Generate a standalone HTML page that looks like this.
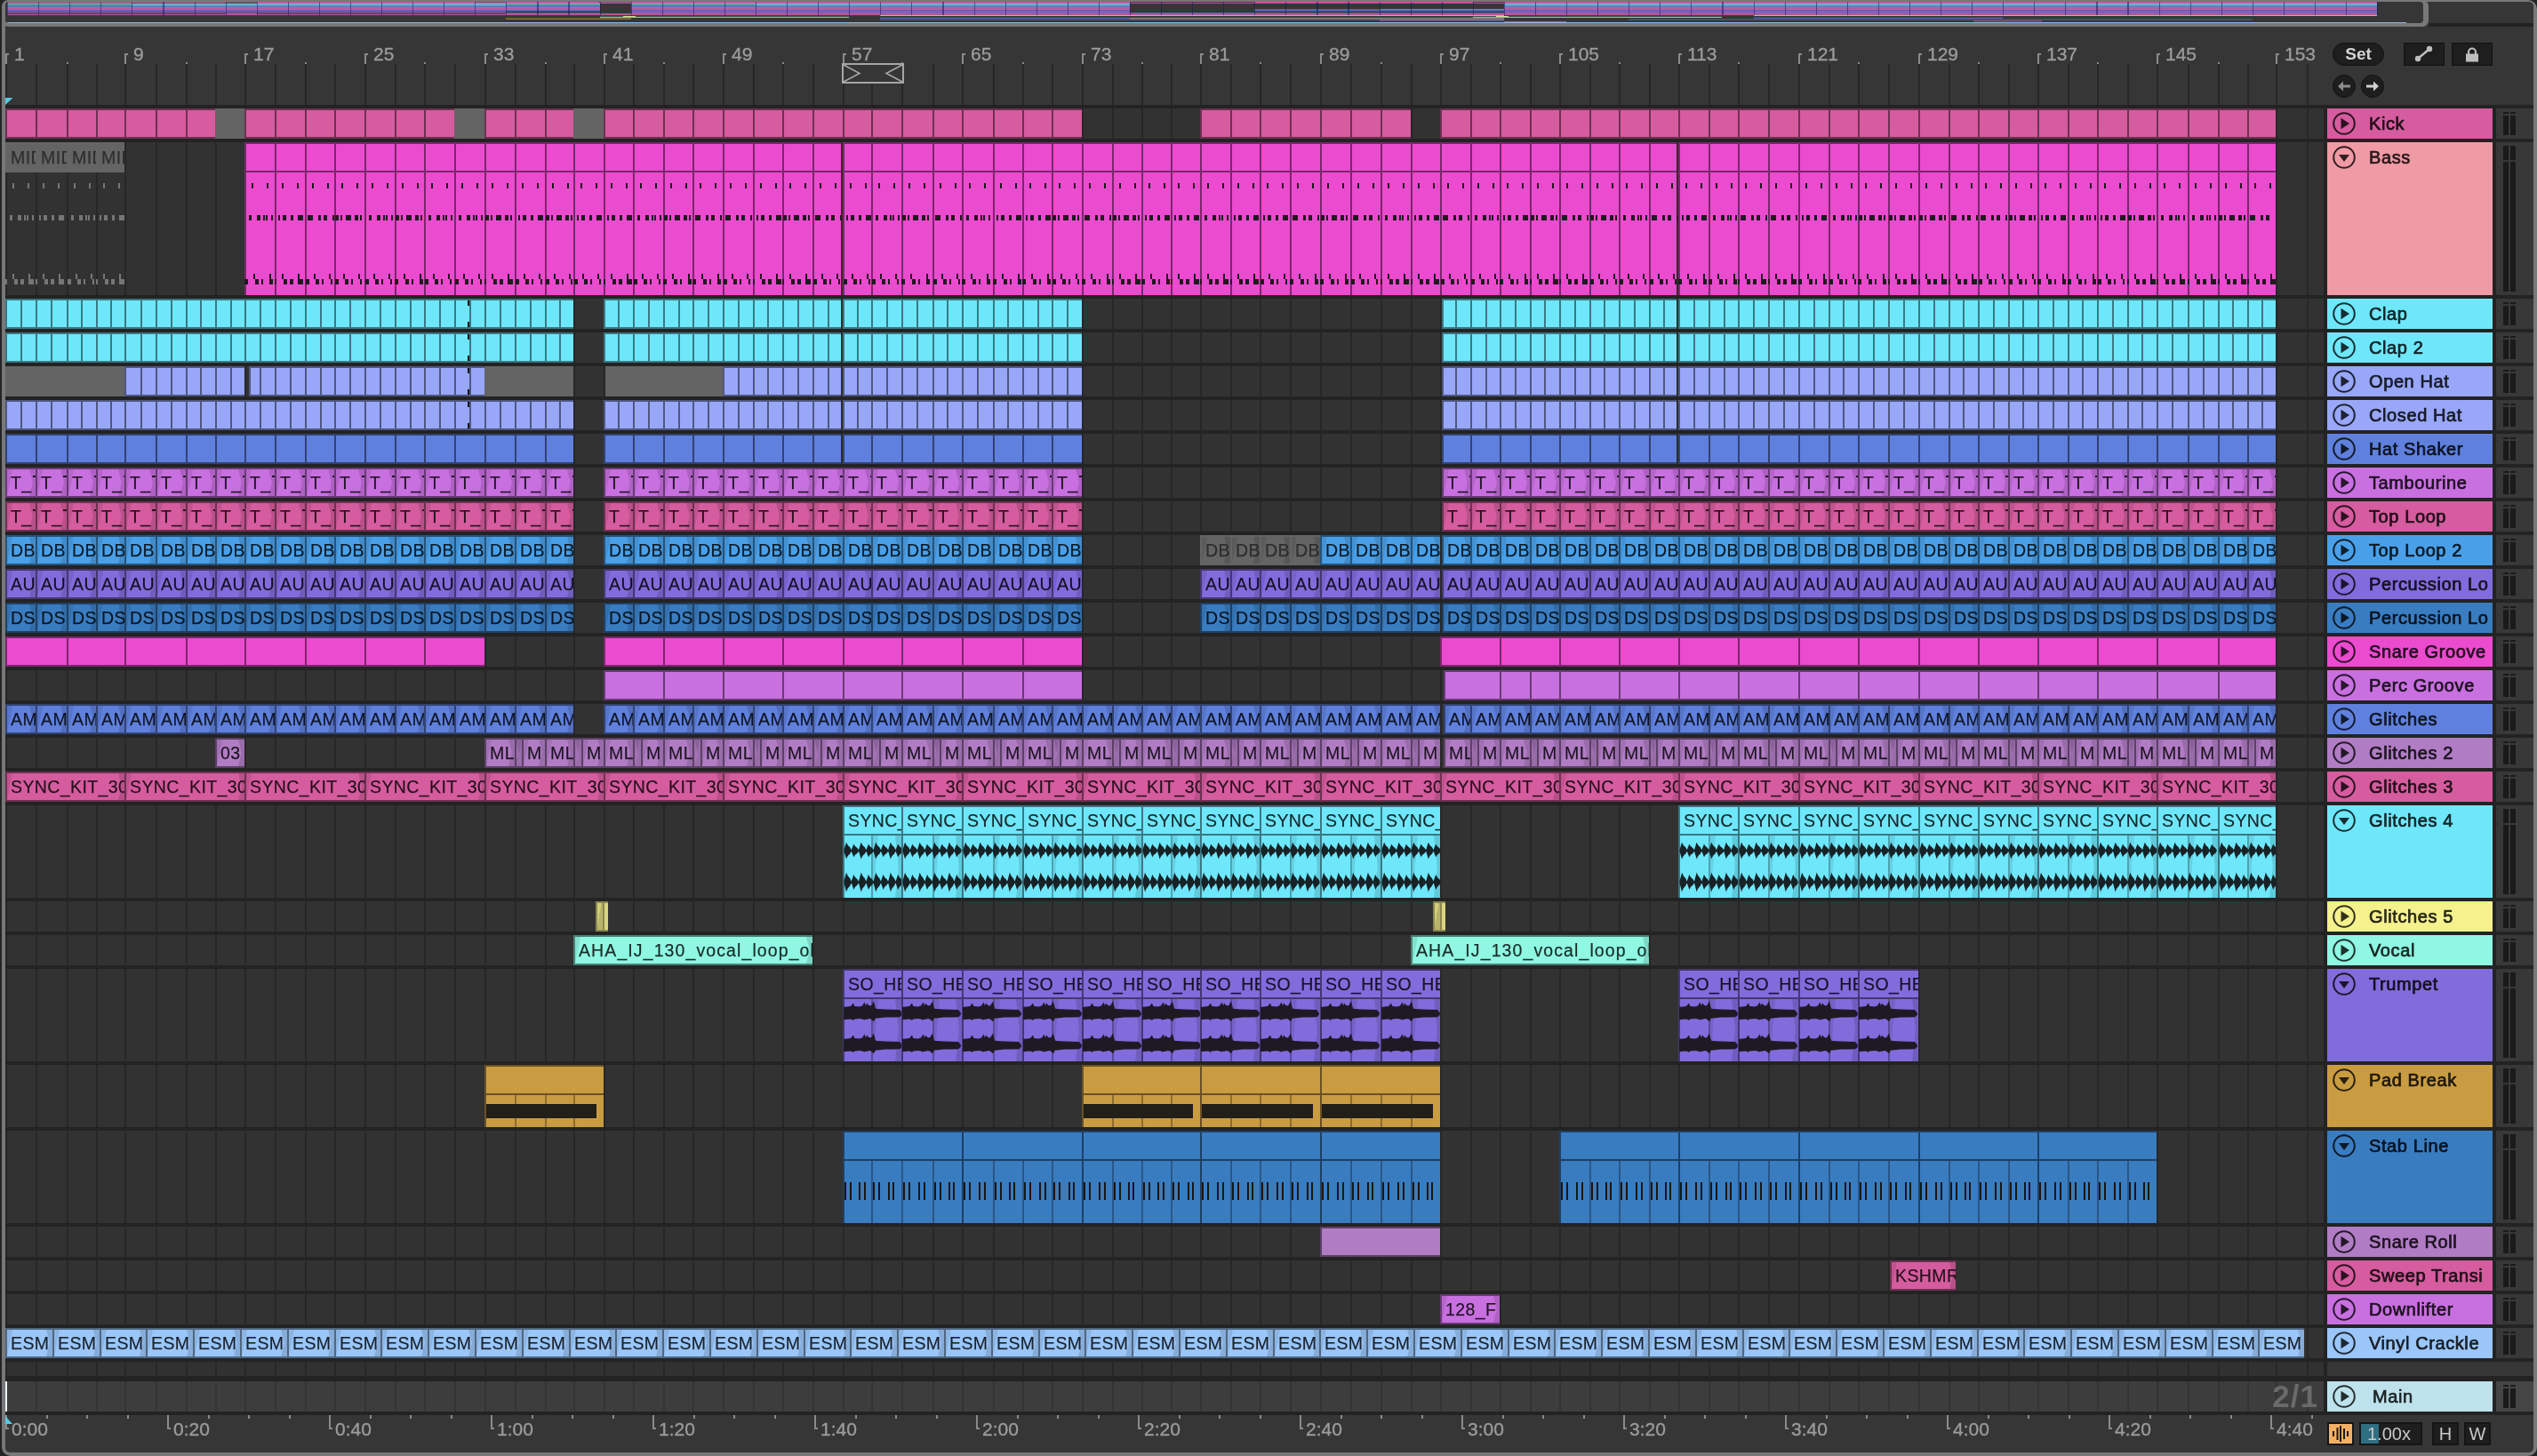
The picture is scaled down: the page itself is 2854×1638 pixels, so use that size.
<!DOCTYPE html><html><head><meta charset="utf-8"><style>
*{margin:0;padding:0;box-sizing:border-box}
html,body{width:2854px;height:1638px;overflow:hidden;background:#242424;font-family:"Liberation Sans",sans-serif}
body{will-change:transform}
div,b,i,u{position:absolute;display:block;text-decoration:none;font-style:normal;font-weight:normal}
.r{left:0;width:2614px;overflow:hidden}
i{top:0;bottom:0;background:var(--d)}
b{top:2px;bottom:2px;overflow:hidden;white-space:nowrap;font-size:19.5px;line-height:30px;padding-left:4px;color:rgba(0,0,0,.82);background:var(--c);letter-spacing:.4px;-webkit-text-stroke:.25px rgba(0,0,0,.6)}
.e b{bottom:auto;height:30px}
.e u{top:34px;bottom:0;background:var(--c)}
.f::before{content:"";position:absolute;left:0;top:0;bottom:0;width:6px;background:rgba(0,0,0,.09);clip-path:polygon(0 0,100% 0,0 100%)}
.f::after,u.f::after{content:"";position:absolute;right:0;top:0;bottom:0;width:7px;background:rgba(0,0,0,.13);clip-path:polygon(0 0,100% 0,100% 100%,0 100%,55% 50%)}
i.g,b.g{background:#646464;color:rgba(0,0,0,.5)}
.k{top:0;bottom:0;width:2px;background:#272727}
.hd{left:2618px;width:186px;overflow:hidden}
.hn{left:47px;top:0;font-size:20px;line-height:34px;color:rgba(0,0,0,.8);white-space:nowrap;letter-spacing:.6px;-webkit-text-stroke:.7px rgba(0,0,0,.8)}
.mt{left:2808px;width:42px;background:#383838}
.mb{position:absolute;width:6px;background:#1a1a1a}
.rl{font-size:21px;color:#9b9b9b;top:49px;line-height:24px;white-space:nowrap;-webkit-text-stroke:.35px #9b9b9b}
.tl{font-size:21px;color:#9b9b9b;top:1596px;line-height:24px;white-space:nowrap;-webkit-text-stroke:.35px #9b9b9b}
svg{position:absolute;left:0;top:0}
s{display:inline-block;width:5px;height:2px;vertical-align:top;margin:7px 0 0 1px;background:rgba(0,0,0,.8)}
</style></head><body><div style="left:2px;top:0;width:2852px;height:1638px;background:#787878;border-radius:10px"></div><div style="left:6px;top:2px;width:2844px;height:1632px;background:#363636;border-radius:5px"></div><div style="left:6px;top:118px;width:2844px;height:1474px;background:#232323"></div><div style="left:6px;top:122px;width:2608px;height:34px;background:#323232"></div><div style="left:6px;top:160px;width:2608px;height:172px;background:#323232"></div><div style="left:6px;top:336px;width:2608px;height:34px;background:#323232"></div><div style="left:6px;top:374px;width:2608px;height:34px;background:#323232"></div><div style="left:6px;top:412px;width:2608px;height:34px;background:#323232"></div><div style="left:6px;top:450px;width:2608px;height:34px;background:#323232"></div><div style="left:6px;top:488px;width:2608px;height:34px;background:#323232"></div><div style="left:6px;top:526px;width:2608px;height:34px;background:#323232"></div><div style="left:6px;top:564px;width:2608px;height:34px;background:#323232"></div><div style="left:6px;top:602px;width:2608px;height:34px;background:#323232"></div><div style="left:6px;top:640px;width:2608px;height:34px;background:#323232"></div><div style="left:6px;top:678px;width:2608px;height:34px;background:#323232"></div><div style="left:6px;top:716px;width:2608px;height:34px;background:#323232"></div><div style="left:6px;top:754px;width:2608px;height:34px;background:#323232"></div><div style="left:6px;top:792px;width:2608px;height:34px;background:#323232"></div><div style="left:6px;top:830px;width:2608px;height:34px;background:#323232"></div><div style="left:6px;top:868px;width:2608px;height:34px;background:#323232"></div><div style="left:6px;top:906px;width:2608px;height:104px;background:#323232"></div><div style="left:6px;top:1014px;width:2608px;height:34px;background:#323232"></div><div style="left:6px;top:1052px;width:2608px;height:34px;background:#323232"></div><div style="left:6px;top:1090px;width:2608px;height:104px;background:#323232"></div><div style="left:6px;top:1198px;width:2608px;height:70px;background:#323232"></div><div style="left:6px;top:1272px;width:2608px;height:104px;background:#323232"></div><div style="left:6px;top:1380px;width:2608px;height:34px;background:#323232"></div><div style="left:6px;top:1418px;width:2608px;height:34px;background:#323232"></div><div style="left:6px;top:1456px;width:2608px;height:34px;background:#323232"></div><div style="left:6px;top:1494px;width:2608px;height:34px;background:#323232"></div><div style="left:6px;top:1532px;width:2608px;height:16px;background:#313131"></div><div style="left:6px;top:1554px;width:2608px;height:34px;background:#3d3d3d"></div><div style="left:0;top:122px;width:2614px;height:1466px"><div class="k" style="left:6px"></div><div class="k" style="left:40px"></div><div class="k" style="left:75px"></div><div class="k" style="left:108px"></div><div class="k" style="left:140px"></div><div class="k" style="left:175px"></div><div class="k" style="left:209px"></div><div class="k" style="left:242px"></div><div class="k" style="left:275px"></div><div class="k" style="left:309px"></div><div class="k" style="left:343px"></div><div class="k" style="left:376px"></div><div class="k" style="left:410px"></div><div class="k" style="left:444px"></div><div class="k" style="left:477px"></div><div class="k" style="left:511px"></div><div class="k" style="left:545px"></div><div class="k" style="left:579px"></div><div class="k" style="left:613px"></div><div class="k" style="left:645px"></div><div class="k" style="left:679px"></div><div class="k" style="left:712px"></div><div class="k" style="left:746px"></div><div class="k" style="left:779px"></div><div class="k" style="left:813px"></div><div class="k" style="left:847px"></div><div class="k" style="left:880px"></div><div class="k" style="left:914px"></div><div class="k" style="left:948px"></div><div class="k" style="left:980px"></div><div class="k" style="left:1014px"></div><div class="k" style="left:1049px"></div><div class="k" style="left:1082px"></div><div class="k" style="left:1117px"></div><div class="k" style="left:1150px"></div><div class="k" style="left:1183px"></div><div class="k" style="left:1217px"></div><div class="k" style="left:1251px"></div><div class="k" style="left:1284px"></div><div class="k" style="left:1317px"></div><div class="k" style="left:1350px"></div><div class="k" style="left:1384px"></div><div class="k" style="left:1417px"></div><div class="k" style="left:1451px"></div><div class="k" style="left:1485px"></div><div class="k" style="left:1519px"></div><div class="k" style="left:1553px"></div><div class="k" style="left:1587px"></div><div class="k" style="left:1620px"></div><div class="k" style="left:1654px"></div><div class="k" style="left:1687px"></div><div class="k" style="left:1721px"></div><div class="k" style="left:1754px"></div><div class="k" style="left:1788px"></div><div class="k" style="left:1821px"></div><div class="k" style="left:1855px"></div><div class="k" style="left:1888px"></div><div class="k" style="left:1922px"></div><div class="k" style="left:1955px"></div><div class="k" style="left:1989px"></div><div class="k" style="left:2023px"></div><div class="k" style="left:2057px"></div><div class="k" style="left:2090px"></div><div class="k" style="left:2124px"></div><div class="k" style="left:2158px"></div><div class="k" style="left:2192px"></div><div class="k" style="left:2225px"></div><div class="k" style="left:2259px"></div><div class="k" style="left:2292px"></div><div class="k" style="left:2326px"></div><div class="k" style="left:2359px"></div><div class="k" style="left:2393px"></div><div class="k" style="left:2426px"></div><div class="k" style="left:2461px"></div><div class="k" style="left:2495px"></div><div class="k" style="left:2528px"></div><div class="k" style="left:2560px"></div><div class="k" style="left:2595px"></div></div><div style="left:6px;top:118px;width:2608px;height:4px;background:#232323"></div><div style="left:6px;top:156px;width:2608px;height:4px;background:#232323"></div><div style="left:6px;top:332px;width:2608px;height:4px;background:#232323"></div><div style="left:6px;top:370px;width:2608px;height:4px;background:#232323"></div><div style="left:6px;top:408px;width:2608px;height:4px;background:#232323"></div><div style="left:6px;top:446px;width:2608px;height:4px;background:#232323"></div><div style="left:6px;top:484px;width:2608px;height:4px;background:#232323"></div><div style="left:6px;top:522px;width:2608px;height:4px;background:#232323"></div><div style="left:6px;top:560px;width:2608px;height:4px;background:#232323"></div><div style="left:6px;top:598px;width:2608px;height:4px;background:#232323"></div><div style="left:6px;top:636px;width:2608px;height:4px;background:#232323"></div><div style="left:6px;top:674px;width:2608px;height:4px;background:#232323"></div><div style="left:6px;top:712px;width:2608px;height:4px;background:#232323"></div><div style="left:6px;top:750px;width:2608px;height:4px;background:#232323"></div><div style="left:6px;top:788px;width:2608px;height:4px;background:#232323"></div><div style="left:6px;top:826px;width:2608px;height:4px;background:#232323"></div><div style="left:6px;top:864px;width:2608px;height:4px;background:#232323"></div><div style="left:6px;top:902px;width:2608px;height:4px;background:#232323"></div><div style="left:6px;top:1010px;width:2608px;height:4px;background:#232323"></div><div style="left:6px;top:1048px;width:2608px;height:4px;background:#232323"></div><div style="left:6px;top:1086px;width:2608px;height:4px;background:#232323"></div><div style="left:6px;top:1194px;width:2608px;height:4px;background:#232323"></div><div style="left:6px;top:1268px;width:2608px;height:4px;background:#232323"></div><div style="left:6px;top:1376px;width:2608px;height:4px;background:#232323"></div><div style="left:6px;top:1414px;width:2608px;height:4px;background:#232323"></div><div style="left:6px;top:1452px;width:2608px;height:4px;background:#232323"></div><div style="left:6px;top:1490px;width:2608px;height:4px;background:#232323"></div><div style="left:6px;top:1528px;width:2608px;height:4px;background:#232323"></div><div style="left:6px;top:1548px;width:2608px;height:6px;background:#232323"></div><div style="left:6px;top:1588px;width:2608px;height:4px;background:#232323"></div><div style="left:0;top:1554px;width:2614px;height:34px"><div class="k" style="left:6px;background:#343434"></div><div class="k" style="left:40px;background:#343434"></div><div class="k" style="left:75px;background:#343434"></div><div class="k" style="left:108px;background:#343434"></div><div class="k" style="left:140px;background:#343434"></div><div class="k" style="left:175px;background:#343434"></div><div class="k" style="left:209px;background:#343434"></div><div class="k" style="left:242px;background:#343434"></div><div class="k" style="left:275px;background:#343434"></div><div class="k" style="left:309px;background:#343434"></div><div class="k" style="left:343px;background:#343434"></div><div class="k" style="left:376px;background:#343434"></div><div class="k" style="left:410px;background:#343434"></div><div class="k" style="left:444px;background:#343434"></div><div class="k" style="left:477px;background:#343434"></div><div class="k" style="left:511px;background:#343434"></div><div class="k" style="left:545px;background:#343434"></div><div class="k" style="left:579px;background:#343434"></div><div class="k" style="left:613px;background:#343434"></div><div class="k" style="left:645px;background:#343434"></div><div class="k" style="left:679px;background:#343434"></div><div class="k" style="left:712px;background:#343434"></div><div class="k" style="left:746px;background:#343434"></div><div class="k" style="left:779px;background:#343434"></div><div class="k" style="left:813px;background:#343434"></div><div class="k" style="left:847px;background:#343434"></div><div class="k" style="left:880px;background:#343434"></div><div class="k" style="left:914px;background:#343434"></div><div class="k" style="left:948px;background:#343434"></div><div class="k" style="left:980px;background:#343434"></div><div class="k" style="left:1014px;background:#343434"></div><div class="k" style="left:1049px;background:#343434"></div><div class="k" style="left:1082px;background:#343434"></div><div class="k" style="left:1117px;background:#343434"></div><div class="k" style="left:1150px;background:#343434"></div><div class="k" style="left:1183px;background:#343434"></div><div class="k" style="left:1217px;background:#343434"></div><div class="k" style="left:1251px;background:#343434"></div><div class="k" style="left:1284px;background:#343434"></div><div class="k" style="left:1317px;background:#343434"></div><div class="k" style="left:1350px;background:#343434"></div><div class="k" style="left:1384px;background:#343434"></div><div class="k" style="left:1417px;background:#343434"></div><div class="k" style="left:1451px;background:#343434"></div><div class="k" style="left:1485px;background:#343434"></div><div class="k" style="left:1519px;background:#343434"></div><div class="k" style="left:1553px;background:#343434"></div><div class="k" style="left:1587px;background:#343434"></div><div class="k" style="left:1620px;background:#343434"></div><div class="k" style="left:1654px;background:#343434"></div><div class="k" style="left:1687px;background:#343434"></div><div class="k" style="left:1721px;background:#343434"></div><div class="k" style="left:1754px;background:#343434"></div><div class="k" style="left:1788px;background:#343434"></div><div class="k" style="left:1821px;background:#343434"></div><div class="k" style="left:1855px;background:#343434"></div><div class="k" style="left:1888px;background:#343434"></div><div class="k" style="left:1922px;background:#343434"></div><div class="k" style="left:1955px;background:#343434"></div><div class="k" style="left:1989px;background:#343434"></div><div class="k" style="left:2023px;background:#343434"></div><div class="k" style="left:2057px;background:#343434"></div><div class="k" style="left:2090px;background:#343434"></div><div class="k" style="left:2124px;background:#343434"></div><div class="k" style="left:2158px;background:#343434"></div><div class="k" style="left:2192px;background:#343434"></div><div class="k" style="left:2225px;background:#343434"></div><div class="k" style="left:2259px;background:#343434"></div><div class="k" style="left:2292px;background:#343434"></div><div class="k" style="left:2326px;background:#343434"></div><div class="k" style="left:2359px;background:#343434"></div><div class="k" style="left:2393px;background:#343434"></div><div class="k" style="left:2426px;background:#343434"></div><div class="k" style="left:2461px;background:#343434"></div><div class="k" style="left:2495px;background:#343434"></div><div class="k" style="left:2528px;background:#343434"></div><div class="k" style="left:2560px;background:#343434"></div><div class="k" style="left:2595px;background:#343434"></div></div><div class="r" style="top:122px;height:34px;--c:#d55c9e;--d:#6f3052"><i style="left:6px;width:236px"></i><b style="left:8px;width:32px"></b><b style="left:42px;width:33px"></b><b style="left:77px;width:31px"></b><b style="left:110px;width:30px"></b><b style="left:142px;width:33px"></b><b style="left:177px;width:32px"></b><b style="left:211px;width:31px"></b><i style="left:275px;width:236px"></i><b style="left:277px;width:32px"></b><b style="left:311px;width:32px"></b><b style="left:345px;width:31px"></b><b style="left:378px;width:32px"></b><b style="left:412px;width:32px"></b><b style="left:446px;width:31px"></b><b style="left:479px;width:32px"></b><i style="left:545px;width:100px"></i><b style="left:547px;width:32px"></b><b style="left:581px;width:32px"></b><b style="left:615px;width:30px"></b><i style="left:679px;width:538px"></i><b style="left:681px;width:31px"></b><b style="left:714px;width:32px"></b><b style="left:748px;width:31px"></b><b style="left:781px;width:32px"></b><b style="left:815px;width:32px"></b><b style="left:849px;width:31px"></b><b style="left:882px;width:32px"></b><b style="left:916px;width:32px"></b><b style="left:950px;width:30px"></b><b style="left:982px;width:32px"></b><b style="left:1016px;width:33px"></b><b style="left:1051px;width:31px"></b><b style="left:1084px;width:33px"></b><b style="left:1119px;width:31px"></b><b style="left:1152px;width:31px"></b><b style="left:1185px;width:32px"></b><i style="left:1350px;width:237px"></i><b style="left:1352px;width:32px"></b><b style="left:1386px;width:31px"></b><b style="left:1419px;width:32px"></b><b style="left:1453px;width:32px"></b><b style="left:1487px;width:32px"></b><b style="left:1521px;width:32px"></b><b style="left:1555px;width:32px"></b><i style="left:1620px;width:940px"></i><b style="left:1622px;width:32px"></b><b style="left:1656px;width:31px"></b><b style="left:1689px;width:32px"></b><b style="left:1723px;width:31px"></b><b style="left:1756px;width:32px"></b><b style="left:1790px;width:31px"></b><b style="left:1823px;width:32px"></b><b style="left:1857px;width:31px"></b><b style="left:1890px;width:32px"></b><b style="left:1924px;width:31px"></b><b style="left:1957px;width:32px"></b><b style="left:1991px;width:32px"></b><b style="left:2025px;width:32px"></b><b style="left:2059px;width:31px"></b><b style="left:2092px;width:32px"></b><b style="left:2126px;width:32px"></b><b style="left:2160px;width:32px"></b><b style="left:2194px;width:31px"></b><b style="left:2227px;width:32px"></b><b style="left:2261px;width:31px"></b><b style="left:2294px;width:32px"></b><b style="left:2328px;width:31px"></b><b style="left:2361px;width:32px"></b><b style="left:2395px;width:31px"></b><b style="left:2428px;width:33px"></b><b style="left:2463px;width:32px"></b><b style="left:2497px;width:31px"></b><b style="left:2530px;width:30px"></b><i class="g" style="left:242px;width:33px"></i><i class="g" style="left:511px;width:34px"></i><i class="g" style="left:645px;width:34px"></i></div><div class="r e" style="top:160px;height:172px;--c:#eb4bcf;--d:#7a276c"><i class="g" style="left:6px;width:134px;bottom:auto;height:34px"></i><b class="g" style="left:8px;width:32px">MIDI</b><b class="g" style="left:42px;width:33px">MIDI</b><b class="g" style="left:77px;width:31px">MIDI</b><b class="g" style="left:110px;width:30px">MIDI</b><i style="left:275px;width:2285px"></i><b style="left:277px;width:32px"></b><u style="left:277px;width:32px"></u><b style="left:311px;width:32px"></b><u style="left:311px;width:32px"></u><b style="left:345px;width:31px"></b><u style="left:345px;width:31px"></u><b style="left:378px;width:32px"></b><u style="left:378px;width:32px"></u><b style="left:412px;width:32px"></b><u style="left:412px;width:32px"></u><b style="left:446px;width:31px"></b><u style="left:446px;width:31px"></u><b style="left:479px;width:32px"></b><u style="left:479px;width:32px"></u><b style="left:513px;width:32px"></b><u style="left:513px;width:32px"></u><b style="left:547px;width:32px"></b><u style="left:547px;width:32px"></u><b style="left:581px;width:32px"></b><u style="left:581px;width:32px"></u><b style="left:615px;width:30px"></b><u style="left:615px;width:30px"></u><b style="left:647px;width:32px"></b><u style="left:647px;width:32px"></u><b style="left:681px;width:31px"></b><u style="left:681px;width:31px"></u><b style="left:714px;width:32px"></b><u style="left:714px;width:32px"></u><b style="left:748px;width:31px"></b><u style="left:748px;width:31px"></u><b style="left:781px;width:32px"></b><u style="left:781px;width:32px"></u><b style="left:815px;width:32px"></b><u style="left:815px;width:32px"></u><b style="left:849px;width:31px"></b><u style="left:849px;width:31px"></u><b style="left:882px;width:32px"></b><u style="left:882px;width:32px"></u><b style="left:916px;width:32px"></b><u style="left:916px;width:32px"></u><b style="left:950px;width:30px"></b><u style="left:950px;width:30px"></u><b style="left:982px;width:32px"></b><u style="left:982px;width:32px"></u><b style="left:1016px;width:33px"></b><u style="left:1016px;width:33px"></u><b style="left:1051px;width:31px"></b><u style="left:1051px;width:31px"></u><b style="left:1084px;width:33px"></b><u style="left:1084px;width:33px"></u><b style="left:1119px;width:31px"></b><u style="left:1119px;width:31px"></u><b style="left:1152px;width:31px"></b><u style="left:1152px;width:31px"></u><b style="left:1185px;width:32px"></b><u style="left:1185px;width:32px"></u><b style="left:1219px;width:32px"></b><u style="left:1219px;width:32px"></u><b style="left:1253px;width:31px"></b><u style="left:1253px;width:31px"></u><b style="left:1286px;width:31px"></b><u style="left:1286px;width:31px"></u><b style="left:1319px;width:31px"></b><u style="left:1319px;width:31px"></u><b style="left:1352px;width:32px"></b><u style="left:1352px;width:32px"></u><b style="left:1386px;width:31px"></b><u style="left:1386px;width:31px"></u><b style="left:1419px;width:32px"></b><u style="left:1419px;width:32px"></u><b style="left:1453px;width:32px"></b><u style="left:1453px;width:32px"></u><b style="left:1487px;width:32px"></b><u style="left:1487px;width:32px"></u><b style="left:1521px;width:32px"></b><u style="left:1521px;width:32px"></u><b style="left:1555px;width:32px"></b><u style="left:1555px;width:32px"></u><b style="left:1589px;width:31px"></b><u style="left:1589px;width:31px"></u><b style="left:1622px;width:32px"></b><u style="left:1622px;width:32px"></u><b style="left:1656px;width:31px"></b><u style="left:1656px;width:31px"></u><b style="left:1689px;width:32px"></b><u style="left:1689px;width:32px"></u><b style="left:1723px;width:31px"></b><u style="left:1723px;width:31px"></u><b style="left:1756px;width:32px"></b><u style="left:1756px;width:32px"></u><b style="left:1790px;width:31px"></b><u style="left:1790px;width:31px"></u><b style="left:1823px;width:32px"></b><u style="left:1823px;width:32px"></u><b style="left:1857px;width:31px"></b><u style="left:1857px;width:31px"></u><b style="left:1890px;width:32px"></b><u style="left:1890px;width:32px"></u><b style="left:1924px;width:31px"></b><u style="left:1924px;width:31px"></u><b style="left:1957px;width:32px"></b><u style="left:1957px;width:32px"></u><b style="left:1991px;width:32px"></b><u style="left:1991px;width:32px"></u><b style="left:2025px;width:32px"></b><u style="left:2025px;width:32px"></u><b style="left:2059px;width:31px"></b><u style="left:2059px;width:31px"></u><b style="left:2092px;width:32px"></b><u style="left:2092px;width:32px"></u><b style="left:2126px;width:32px"></b><u style="left:2126px;width:32px"></u><b style="left:2160px;width:32px"></b><u style="left:2160px;width:32px"></u><b style="left:2194px;width:31px"></b><u style="left:2194px;width:31px"></u><b style="left:2227px;width:32px"></b><u style="left:2227px;width:32px"></u><b style="left:2261px;width:31px"></b><u style="left:2261px;width:31px"></u><b style="left:2294px;width:32px"></b><u style="left:2294px;width:32px"></u><b style="left:2328px;width:31px"></b><u style="left:2328px;width:31px"></u><b style="left:2361px;width:32px"></b><u style="left:2361px;width:32px"></u><b style="left:2395px;width:31px"></b><u style="left:2395px;width:31px"></u><b style="left:2428px;width:33px"></b><u style="left:2428px;width:33px"></u><b style="left:2463px;width:32px"></b><u style="left:2463px;width:32px"></u><b style="left:2497px;width:31px"></b><u style="left:2497px;width:31px"></u><b style="left:2530px;width:30px"></b><u style="left:2530px;width:30px"></u><i style="left:946px;width:2px;background:#2b2e2b"></i><i style="left:1886px;width:2px;background:#2b2e2b"></i></div><div class="r" style="top:336px;height:34px;--c:#6fe7fb;--d:#3a7883"><i style="left:6px;width:639px"></i><b style="left:8px;width:15px"></b><b style="left:25px;width:15px"></b><b style="left:42px;width:15px"></b><b style="left:59px;width:16px"></b><b style="left:77px;width:14px"></b><b style="left:93px;width:15px"></b><b style="left:110px;width:14px"></b><b style="left:126px;width:14px"></b><b style="left:142px;width:16px"></b><b style="left:160px;width:15px"></b><b style="left:177px;width:15px"></b><b style="left:194px;width:15px"></b><b style="left:211px;width:14px"></b><b style="left:227px;width:15px"></b><b style="left:244px;width:15px"></b><b style="left:261px;width:14px"></b><b style="left:277px;width:15px"></b><b style="left:294px;width:15px"></b><b style="left:311px;width:15px"></b><b style="left:328px;width:15px"></b><b style="left:345px;width:15px"></b><b style="left:362px;width:14px"></b><b style="left:378px;width:15px"></b><b style="left:395px;width:15px"></b><b style="left:412px;width:15px"></b><b style="left:429px;width:15px"></b><b style="left:446px;width:15px"></b><b style="left:463px;width:14px"></b><b style="left:479px;width:15px"></b><b style="left:496px;width:15px"></b><b style="left:513px;width:15px"></b><b style="left:530px;width:15px"></b><b style="left:547px;width:15px"></b><b style="left:564px;width:15px"></b><b style="left:581px;width:15px"></b><b style="left:598px;width:15px"></b><b style="left:615px;width:14px"></b><b style="left:631px;width:14px"></b><i style="left:679px;width:538px"></i><b style="left:681px;width:14px"></b><b style="left:697px;width:15px"></b><b style="left:714px;width:15px"></b><b style="left:731px;width:15px"></b><b style="left:748px;width:15px"></b><b style="left:765px;width:14px"></b><b style="left:781px;width:15px"></b><b style="left:798px;width:15px"></b><b style="left:815px;width:15px"></b><b style="left:832px;width:15px"></b><b style="left:849px;width:14px"></b><b style="left:865px;width:15px"></b><b style="left:882px;width:15px"></b><b style="left:899px;width:15px"></b><b style="left:916px;width:15px"></b><b style="left:933px;width:15px"></b><b style="left:950px;width:14px"></b><b style="left:966px;width:14px"></b><b style="left:982px;width:15px"></b><b style="left:999px;width:15px"></b><b style="left:1016px;width:15px"></b><b style="left:1033px;width:16px"></b><b style="left:1051px;width:14px"></b><b style="left:1067px;width:15px"></b><b style="left:1084px;width:15px"></b><b style="left:1101px;width:16px"></b><b style="left:1119px;width:14px"></b><b style="left:1135px;width:15px"></b><b style="left:1152px;width:15px"></b><b style="left:1169px;width:14px"></b><b style="left:1185px;width:15px"></b><b style="left:1202px;width:15px"></b><i style="left:1622px;width:938px"></i><b style="left:1624px;width:13px"></b><b style="left:1639px;width:15px"></b><b style="left:1656px;width:15px"></b><b style="left:1673px;width:14px"></b><b style="left:1689px;width:15px"></b><b style="left:1706px;width:15px"></b><b style="left:1723px;width:14px"></b><b style="left:1739px;width:15px"></b><b style="left:1756px;width:15px"></b><b style="left:1773px;width:15px"></b><b style="left:1790px;width:14px"></b><b style="left:1806px;width:15px"></b><b style="left:1823px;width:15px"></b><b style="left:1840px;width:15px"></b><b style="left:1857px;width:14px"></b><b style="left:1873px;width:15px"></b><b style="left:1890px;width:15px"></b><b style="left:1907px;width:15px"></b><b style="left:1924px;width:15px"></b><b style="left:1941px;width:14px"></b><b style="left:1957px;width:15px"></b><b style="left:1974px;width:15px"></b><b style="left:1991px;width:15px"></b><b style="left:2008px;width:15px"></b><b style="left:2025px;width:15px"></b><b style="left:2042px;width:15px"></b><b style="left:2059px;width:14px"></b><b style="left:2075px;width:15px"></b><b style="left:2092px;width:15px"></b><b style="left:2109px;width:15px"></b><b style="left:2126px;width:15px"></b><b style="left:2143px;width:15px"></b><b style="left:2160px;width:15px"></b><b style="left:2177px;width:15px"></b><b style="left:2194px;width:14px"></b><b style="left:2210px;width:15px"></b><b style="left:2227px;width:15px"></b><b style="left:2244px;width:15px"></b><b style="left:2261px;width:14px"></b><b style="left:2277px;width:15px"></b><b style="left:2294px;width:15px"></b><b style="left:2311px;width:15px"></b><b style="left:2328px;width:14px"></b><b style="left:2344px;width:15px"></b><b style="left:2361px;width:15px"></b><b style="left:2378px;width:15px"></b><b style="left:2395px;width:14px"></b><b style="left:2411px;width:15px"></b><b style="left:2428px;width:15px"></b><b style="left:2445px;width:16px"></b><b style="left:2463px;width:15px"></b><b style="left:2480px;width:15px"></b><b style="left:2497px;width:14px"></b><b style="left:2513px;width:15px"></b><b style="left:2530px;width:14px"></b><b style="left:2546px;width:14px"></b><i style="left:946px;width:2px;background:#2b2e2b"></i><i style="left:1886px;width:2px;background:#2b2e2b"></i><i style="left:526px;width:2px;top:2px;bottom:auto;height:6px;background:#141414"></i><i style="left:526px;width:2px;top:26px;bottom:auto;height:6px;background:#141414"></i></div><div class="r" style="top:374px;height:34px;--c:#6fe7fb;--d:#3a7883"><i style="left:6px;width:639px"></i><b style="left:8px;width:15px"></b><b style="left:25px;width:15px"></b><b style="left:42px;width:15px"></b><b style="left:59px;width:16px"></b><b style="left:77px;width:14px"></b><b style="left:93px;width:15px"></b><b style="left:110px;width:14px"></b><b style="left:126px;width:14px"></b><b style="left:142px;width:16px"></b><b style="left:160px;width:15px"></b><b style="left:177px;width:15px"></b><b style="left:194px;width:15px"></b><b style="left:211px;width:14px"></b><b style="left:227px;width:15px"></b><b style="left:244px;width:15px"></b><b style="left:261px;width:14px"></b><b style="left:277px;width:15px"></b><b style="left:294px;width:15px"></b><b style="left:311px;width:15px"></b><b style="left:328px;width:15px"></b><b style="left:345px;width:15px"></b><b style="left:362px;width:14px"></b><b style="left:378px;width:15px"></b><b style="left:395px;width:15px"></b><b style="left:412px;width:15px"></b><b style="left:429px;width:15px"></b><b style="left:446px;width:15px"></b><b style="left:463px;width:14px"></b><b style="left:479px;width:15px"></b><b style="left:496px;width:15px"></b><b style="left:513px;width:15px"></b><b style="left:530px;width:15px"></b><b style="left:547px;width:15px"></b><b style="left:564px;width:15px"></b><b style="left:581px;width:15px"></b><b style="left:598px;width:15px"></b><b style="left:615px;width:14px"></b><b style="left:631px;width:14px"></b><i style="left:679px;width:538px"></i><b style="left:681px;width:14px"></b><b style="left:697px;width:15px"></b><b style="left:714px;width:15px"></b><b style="left:731px;width:15px"></b><b style="left:748px;width:15px"></b><b style="left:765px;width:14px"></b><b style="left:781px;width:15px"></b><b style="left:798px;width:15px"></b><b style="left:815px;width:15px"></b><b style="left:832px;width:15px"></b><b style="left:849px;width:14px"></b><b style="left:865px;width:15px"></b><b style="left:882px;width:15px"></b><b style="left:899px;width:15px"></b><b style="left:916px;width:15px"></b><b style="left:933px;width:15px"></b><b style="left:950px;width:14px"></b><b style="left:966px;width:14px"></b><b style="left:982px;width:15px"></b><b style="left:999px;width:15px"></b><b style="left:1016px;width:15px"></b><b style="left:1033px;width:16px"></b><b style="left:1051px;width:14px"></b><b style="left:1067px;width:15px"></b><b style="left:1084px;width:15px"></b><b style="left:1101px;width:16px"></b><b style="left:1119px;width:14px"></b><b style="left:1135px;width:15px"></b><b style="left:1152px;width:15px"></b><b style="left:1169px;width:14px"></b><b style="left:1185px;width:15px"></b><b style="left:1202px;width:15px"></b><i style="left:1622px;width:938px"></i><b style="left:1624px;width:13px"></b><b style="left:1639px;width:15px"></b><b style="left:1656px;width:15px"></b><b style="left:1673px;width:14px"></b><b style="left:1689px;width:15px"></b><b style="left:1706px;width:15px"></b><b style="left:1723px;width:14px"></b><b style="left:1739px;width:15px"></b><b style="left:1756px;width:15px"></b><b style="left:1773px;width:15px"></b><b style="left:1790px;width:14px"></b><b style="left:1806px;width:15px"></b><b style="left:1823px;width:15px"></b><b style="left:1840px;width:15px"></b><b style="left:1857px;width:14px"></b><b style="left:1873px;width:15px"></b><b style="left:1890px;width:15px"></b><b style="left:1907px;width:15px"></b><b style="left:1924px;width:15px"></b><b style="left:1941px;width:14px"></b><b style="left:1957px;width:15px"></b><b style="left:1974px;width:15px"></b><b style="left:1991px;width:15px"></b><b style="left:2008px;width:15px"></b><b style="left:2025px;width:15px"></b><b style="left:2042px;width:15px"></b><b style="left:2059px;width:14px"></b><b style="left:2075px;width:15px"></b><b style="left:2092px;width:15px"></b><b style="left:2109px;width:15px"></b><b style="left:2126px;width:15px"></b><b style="left:2143px;width:15px"></b><b style="left:2160px;width:15px"></b><b style="left:2177px;width:15px"></b><b style="left:2194px;width:14px"></b><b style="left:2210px;width:15px"></b><b style="left:2227px;width:15px"></b><b style="left:2244px;width:15px"></b><b style="left:2261px;width:14px"></b><b style="left:2277px;width:15px"></b><b style="left:2294px;width:15px"></b><b style="left:2311px;width:15px"></b><b style="left:2328px;width:14px"></b><b style="left:2344px;width:15px"></b><b style="left:2361px;width:15px"></b><b style="left:2378px;width:15px"></b><b style="left:2395px;width:14px"></b><b style="left:2411px;width:15px"></b><b style="left:2428px;width:15px"></b><b style="left:2445px;width:16px"></b><b style="left:2463px;width:15px"></b><b style="left:2480px;width:15px"></b><b style="left:2497px;width:14px"></b><b style="left:2513px;width:15px"></b><b style="left:2530px;width:14px"></b><b style="left:2546px;width:14px"></b><i style="left:946px;width:2px;background:#2b2e2b"></i><i style="left:1886px;width:2px;background:#2b2e2b"></i><i style="left:526px;width:2px;top:2px;bottom:auto;height:6px;background:#141414"></i><i style="left:526px;width:2px;top:26px;bottom:auto;height:6px;background:#141414"></i></div><div class="r" style="top:412px;height:34px;--c:#98a7f8;--d:#4f5781"><i class="g" style="left:6px;width:134px"></i><b class="g" style="left:8px;width:132px"></b><i style="left:140px;width:135px"></i><b style="left:142px;width:16px"></b><b style="left:160px;width:15px"></b><b style="left:177px;width:15px"></b><b style="left:194px;width:15px"></b><b style="left:211px;width:14px"></b><b style="left:227px;width:15px"></b><b style="left:244px;width:15px"></b><b style="left:261px;width:14px"></b><i style="left:280px;width:265px"></i><b style="left:282px;width:10px"></b><b style="left:294px;width:15px"></b><b style="left:311px;width:15px"></b><b style="left:328px;width:15px"></b><b style="left:345px;width:15px"></b><b style="left:362px;width:14px"></b><b style="left:378px;width:15px"></b><b style="left:395px;width:15px"></b><b style="left:412px;width:15px"></b><b style="left:429px;width:15px"></b><b style="left:446px;width:15px"></b><b style="left:463px;width:14px"></b><b style="left:479px;width:15px"></b><b style="left:496px;width:15px"></b><b style="left:513px;width:15px"></b><b style="left:530px;width:15px"></b><i class="g" style="left:545px;width:100px"></i><b class="g" style="left:547px;width:98px"></b><i class="g" style="left:681px;width:132px"></i><b class="g" style="left:683px;width:130px"></b><i style="left:813px;width:404px"></i><b style="left:815px;width:15px"></b><b style="left:832px;width:15px"></b><b style="left:849px;width:14px"></b><b style="left:865px;width:15px"></b><b style="left:882px;width:15px"></b><b style="left:899px;width:15px"></b><b style="left:916px;width:15px"></b><b style="left:933px;width:15px"></b><b style="left:950px;width:14px"></b><b style="left:966px;width:14px"></b><b style="left:982px;width:15px"></b><b style="left:999px;width:15px"></b><b style="left:1016px;width:15px"></b><b style="left:1033px;width:16px"></b><b style="left:1051px;width:14px"></b><b style="left:1067px;width:15px"></b><b style="left:1084px;width:15px"></b><b style="left:1101px;width:16px"></b><b style="left:1119px;width:14px"></b><b style="left:1135px;width:15px"></b><b style="left:1152px;width:15px"></b><b style="left:1169px;width:14px"></b><b style="left:1185px;width:15px"></b><b style="left:1202px;width:15px"></b><i style="left:1622px;width:938px"></i><b style="left:1624px;width:13px"></b><b style="left:1639px;width:15px"></b><b style="left:1656px;width:15px"></b><b style="left:1673px;width:14px"></b><b style="left:1689px;width:15px"></b><b style="left:1706px;width:15px"></b><b style="left:1723px;width:14px"></b><b style="left:1739px;width:15px"></b><b style="left:1756px;width:15px"></b><b style="left:1773px;width:15px"></b><b style="left:1790px;width:14px"></b><b style="left:1806px;width:15px"></b><b style="left:1823px;width:15px"></b><b style="left:1840px;width:15px"></b><b style="left:1857px;width:14px"></b><b style="left:1873px;width:15px"></b><b style="left:1890px;width:15px"></b><b style="left:1907px;width:15px"></b><b style="left:1924px;width:15px"></b><b style="left:1941px;width:14px"></b><b style="left:1957px;width:15px"></b><b style="left:1974px;width:15px"></b><b style="left:1991px;width:15px"></b><b style="left:2008px;width:15px"></b><b style="left:2025px;width:15px"></b><b style="left:2042px;width:15px"></b><b style="left:2059px;width:14px"></b><b style="left:2075px;width:15px"></b><b style="left:2092px;width:15px"></b><b style="left:2109px;width:15px"></b><b style="left:2126px;width:15px"></b><b style="left:2143px;width:15px"></b><b style="left:2160px;width:15px"></b><b style="left:2177px;width:15px"></b><b style="left:2194px;width:14px"></b><b style="left:2210px;width:15px"></b><b style="left:2227px;width:15px"></b><b style="left:2244px;width:15px"></b><b style="left:2261px;width:14px"></b><b style="left:2277px;width:15px"></b><b style="left:2294px;width:15px"></b><b style="left:2311px;width:15px"></b><b style="left:2328px;width:14px"></b><b style="left:2344px;width:15px"></b><b style="left:2361px;width:15px"></b><b style="left:2378px;width:15px"></b><b style="left:2395px;width:14px"></b><b style="left:2411px;width:15px"></b><b style="left:2428px;width:15px"></b><b style="left:2445px;width:16px"></b><b style="left:2463px;width:15px"></b><b style="left:2480px;width:15px"></b><b style="left:2497px;width:14px"></b><b style="left:2513px;width:15px"></b><b style="left:2530px;width:14px"></b><b style="left:2546px;width:14px"></b><i style="left:946px;width:2px;background:#2b2e2b"></i><i style="left:1886px;width:2px;background:#2b2e2b"></i><i style="left:526px;width:2px;top:2px;bottom:auto;height:6px;background:#141414"></i><i style="left:526px;width:2px;top:26px;bottom:auto;height:6px;background:#141414"></i></div><div class="r" style="top:450px;height:34px;--c:#98a7f8;--d:#4f5781"><i style="left:6px;width:639px"></i><b style="left:8px;width:15px"></b><b style="left:25px;width:15px"></b><b style="left:42px;width:15px"></b><b style="left:59px;width:16px"></b><b style="left:77px;width:14px"></b><b style="left:93px;width:15px"></b><b style="left:110px;width:14px"></b><b style="left:126px;width:14px"></b><b style="left:142px;width:16px"></b><b style="left:160px;width:15px"></b><b style="left:177px;width:15px"></b><b style="left:194px;width:15px"></b><b style="left:211px;width:14px"></b><b style="left:227px;width:15px"></b><b style="left:244px;width:15px"></b><b style="left:261px;width:14px"></b><b style="left:277px;width:15px"></b><b style="left:294px;width:15px"></b><b style="left:311px;width:15px"></b><b style="left:328px;width:15px"></b><b style="left:345px;width:15px"></b><b style="left:362px;width:14px"></b><b style="left:378px;width:15px"></b><b style="left:395px;width:15px"></b><b style="left:412px;width:15px"></b><b style="left:429px;width:15px"></b><b style="left:446px;width:15px"></b><b style="left:463px;width:14px"></b><b style="left:479px;width:15px"></b><b style="left:496px;width:15px"></b><b style="left:513px;width:15px"></b><b style="left:530px;width:15px"></b><b style="left:547px;width:15px"></b><b style="left:564px;width:15px"></b><b style="left:581px;width:15px"></b><b style="left:598px;width:15px"></b><b style="left:615px;width:14px"></b><b style="left:631px;width:14px"></b><i style="left:679px;width:538px"></i><b style="left:681px;width:14px"></b><b style="left:697px;width:15px"></b><b style="left:714px;width:15px"></b><b style="left:731px;width:15px"></b><b style="left:748px;width:15px"></b><b style="left:765px;width:14px"></b><b style="left:781px;width:15px"></b><b style="left:798px;width:15px"></b><b style="left:815px;width:15px"></b><b style="left:832px;width:15px"></b><b style="left:849px;width:14px"></b><b style="left:865px;width:15px"></b><b style="left:882px;width:15px"></b><b style="left:899px;width:15px"></b><b style="left:916px;width:15px"></b><b style="left:933px;width:15px"></b><b style="left:950px;width:14px"></b><b style="left:966px;width:14px"></b><b style="left:982px;width:15px"></b><b style="left:999px;width:15px"></b><b style="left:1016px;width:15px"></b><b style="left:1033px;width:16px"></b><b style="left:1051px;width:14px"></b><b style="left:1067px;width:15px"></b><b style="left:1084px;width:15px"></b><b style="left:1101px;width:16px"></b><b style="left:1119px;width:14px"></b><b style="left:1135px;width:15px"></b><b style="left:1152px;width:15px"></b><b style="left:1169px;width:14px"></b><b style="left:1185px;width:15px"></b><b style="left:1202px;width:15px"></b><i style="left:1622px;width:938px"></i><b style="left:1624px;width:13px"></b><b style="left:1639px;width:15px"></b><b style="left:1656px;width:15px"></b><b style="left:1673px;width:14px"></b><b style="left:1689px;width:15px"></b><b style="left:1706px;width:15px"></b><b style="left:1723px;width:14px"></b><b style="left:1739px;width:15px"></b><b style="left:1756px;width:15px"></b><b style="left:1773px;width:15px"></b><b style="left:1790px;width:14px"></b><b style="left:1806px;width:15px"></b><b style="left:1823px;width:15px"></b><b style="left:1840px;width:15px"></b><b style="left:1857px;width:14px"></b><b style="left:1873px;width:15px"></b><b style="left:1890px;width:15px"></b><b style="left:1907px;width:15px"></b><b style="left:1924px;width:15px"></b><b style="left:1941px;width:14px"></b><b style="left:1957px;width:15px"></b><b style="left:1974px;width:15px"></b><b style="left:1991px;width:15px"></b><b style="left:2008px;width:15px"></b><b style="left:2025px;width:15px"></b><b style="left:2042px;width:15px"></b><b style="left:2059px;width:14px"></b><b style="left:2075px;width:15px"></b><b style="left:2092px;width:15px"></b><b style="left:2109px;width:15px"></b><b style="left:2126px;width:15px"></b><b style="left:2143px;width:15px"></b><b style="left:2160px;width:15px"></b><b style="left:2177px;width:15px"></b><b style="left:2194px;width:14px"></b><b style="left:2210px;width:15px"></b><b style="left:2227px;width:15px"></b><b style="left:2244px;width:15px"></b><b style="left:2261px;width:14px"></b><b style="left:2277px;width:15px"></b><b style="left:2294px;width:15px"></b><b style="left:2311px;width:15px"></b><b style="left:2328px;width:14px"></b><b style="left:2344px;width:15px"></b><b style="left:2361px;width:15px"></b><b style="left:2378px;width:15px"></b><b style="left:2395px;width:14px"></b><b style="left:2411px;width:15px"></b><b style="left:2428px;width:15px"></b><b style="left:2445px;width:16px"></b><b style="left:2463px;width:15px"></b><b style="left:2480px;width:15px"></b><b style="left:2497px;width:14px"></b><b style="left:2513px;width:15px"></b><b style="left:2530px;width:14px"></b><b style="left:2546px;width:14px"></b><i style="left:946px;width:2px;background:#2b2e2b"></i><i style="left:1886px;width:2px;background:#2b2e2b"></i><i style="left:526px;width:2px;top:2px;bottom:auto;height:6px;background:#141414"></i><i style="left:526px;width:2px;top:26px;bottom:auto;height:6px;background:#141414"></i></div><div class="r" style="top:488px;height:34px;--c:#5f80dd;--d:#314373"><i style="left:6px;width:639px"></i><b style="left:8px;width:32px"></b><b style="left:42px;width:33px"></b><b style="left:77px;width:31px"></b><b style="left:110px;width:30px"></b><b style="left:142px;width:33px"></b><b style="left:177px;width:32px"></b><b style="left:211px;width:31px"></b><b style="left:244px;width:31px"></b><b style="left:277px;width:32px"></b><b style="left:311px;width:32px"></b><b style="left:345px;width:31px"></b><b style="left:378px;width:32px"></b><b style="left:412px;width:32px"></b><b style="left:446px;width:31px"></b><b style="left:479px;width:32px"></b><b style="left:513px;width:32px"></b><b style="left:547px;width:32px"></b><b style="left:581px;width:32px"></b><b style="left:615px;width:30px"></b><i style="left:679px;width:538px"></i><b style="left:681px;width:31px"></b><b style="left:714px;width:32px"></b><b style="left:748px;width:31px"></b><b style="left:781px;width:32px"></b><b style="left:815px;width:32px"></b><b style="left:849px;width:31px"></b><b style="left:882px;width:32px"></b><b style="left:916px;width:32px"></b><b style="left:950px;width:30px"></b><b style="left:982px;width:32px"></b><b style="left:1016px;width:33px"></b><b style="left:1051px;width:31px"></b><b style="left:1084px;width:33px"></b><b style="left:1119px;width:31px"></b><b style="left:1152px;width:31px"></b><b style="left:1185px;width:32px"></b><i style="left:1622px;width:938px"></i><b style="left:1624px;width:30px"></b><b style="left:1656px;width:31px"></b><b style="left:1689px;width:32px"></b><b style="left:1723px;width:31px"></b><b style="left:1756px;width:32px"></b><b style="left:1790px;width:31px"></b><b style="left:1823px;width:32px"></b><b style="left:1857px;width:31px"></b><b style="left:1890px;width:32px"></b><b style="left:1924px;width:31px"></b><b style="left:1957px;width:32px"></b><b style="left:1991px;width:32px"></b><b style="left:2025px;width:32px"></b><b style="left:2059px;width:31px"></b><b style="left:2092px;width:32px"></b><b style="left:2126px;width:32px"></b><b style="left:2160px;width:32px"></b><b style="left:2194px;width:31px"></b><b style="left:2227px;width:32px"></b><b style="left:2261px;width:31px"></b><b style="left:2294px;width:32px"></b><b style="left:2328px;width:31px"></b><b style="left:2361px;width:32px"></b><b style="left:2395px;width:31px"></b><b style="left:2428px;width:33px"></b><b style="left:2463px;width:32px"></b><b style="left:2497px;width:31px"></b><b style="left:2530px;width:30px"></b><i style="left:946px;width:2px;background:#2b2e2b"></i><i style="left:1886px;width:2px;background:#2b2e2b"></i></div><div class="r" style="top:526px;height:34px;--c:#c870e0;--d:#683a74"><i style="left:6px;width:639px"></i><b class="f" style="left:8px;width:32px">T_<s></s></b><b class="f" style="left:42px;width:33px">T_<s></s></b><b class="f" style="left:77px;width:31px">T_<s></s></b><b class="f" style="left:110px;width:30px">T_<s></s></b><b class="f" style="left:142px;width:33px">T_<s></s></b><b class="f" style="left:177px;width:32px">T_<s></s></b><b class="f" style="left:211px;width:31px">T_<s></s></b><b class="f" style="left:244px;width:31px">T_<s></s></b><b class="f" style="left:277px;width:32px">T_<s></s></b><b class="f" style="left:311px;width:32px">T_<s></s></b><b class="f" style="left:345px;width:31px">T_<s></s></b><b class="f" style="left:378px;width:32px">T_<s></s></b><b class="f" style="left:412px;width:32px">T_<s></s></b><b class="f" style="left:446px;width:31px">T_<s></s></b><b class="f" style="left:479px;width:32px">T_<s></s></b><b class="f" style="left:513px;width:32px">T_<s></s></b><b class="f" style="left:547px;width:32px">T_<s></s></b><b class="f" style="left:581px;width:32px">T_<s></s></b><b class="f" style="left:615px;width:30px">T_<s></s></b><i style="left:679px;width:538px"></i><b class="f" style="left:681px;width:31px">T_<s></s></b><b class="f" style="left:714px;width:32px">T_<s></s></b><b class="f" style="left:748px;width:31px">T_<s></s></b><b class="f" style="left:781px;width:32px">T_<s></s></b><b class="f" style="left:815px;width:32px">T_<s></s></b><b class="f" style="left:849px;width:31px">T_<s></s></b><b class="f" style="left:882px;width:32px">T_<s></s></b><b class="f" style="left:916px;width:32px">T_<s></s></b><b class="f" style="left:950px;width:30px">T_<s></s></b><b class="f" style="left:982px;width:32px">T_<s></s></b><b class="f" style="left:1016px;width:33px">T_<s></s></b><b class="f" style="left:1051px;width:31px">T_<s></s></b><b class="f" style="left:1084px;width:33px">T_<s></s></b><b class="f" style="left:1119px;width:31px">T_<s></s></b><b class="f" style="left:1152px;width:31px">T_<s></s></b><b class="f" style="left:1185px;width:32px">T_<s></s></b><i style="left:1622px;width:938px"></i><b class="f" style="left:1624px;width:30px">T_<s></s></b><b class="f" style="left:1656px;width:31px">T_<s></s></b><b class="f" style="left:1689px;width:32px">T_<s></s></b><b class="f" style="left:1723px;width:31px">T_<s></s></b><b class="f" style="left:1756px;width:32px">T_<s></s></b><b class="f" style="left:1790px;width:31px">T_<s></s></b><b class="f" style="left:1823px;width:32px">T_<s></s></b><b class="f" style="left:1857px;width:31px">T_<s></s></b><b class="f" style="left:1890px;width:32px">T_<s></s></b><b class="f" style="left:1924px;width:31px">T_<s></s></b><b class="f" style="left:1957px;width:32px">T_<s></s></b><b class="f" style="left:1991px;width:32px">T_<s></s></b><b class="f" style="left:2025px;width:32px">T_<s></s></b><b class="f" style="left:2059px;width:31px">T_<s></s></b><b class="f" style="left:2092px;width:32px">T_<s></s></b><b class="f" style="left:2126px;width:32px">T_<s></s></b><b class="f" style="left:2160px;width:32px">T_<s></s></b><b class="f" style="left:2194px;width:31px">T_<s></s></b><b class="f" style="left:2227px;width:32px">T_<s></s></b><b class="f" style="left:2261px;width:31px">T_<s></s></b><b class="f" style="left:2294px;width:32px">T_<s></s></b><b class="f" style="left:2328px;width:31px">T_<s></s></b><b class="f" style="left:2361px;width:32px">T_<s></s></b><b class="f" style="left:2395px;width:31px">T_<s></s></b><b class="f" style="left:2428px;width:33px">T_<s></s></b><b class="f" style="left:2463px;width:32px">T_<s></s></b><b class="f" style="left:2497px;width:31px">T_<s></s></b><b class="f" style="left:2530px;width:30px">T_<s></s></b></div><div class="r" style="top:564px;height:34px;--c:#d55c9e;--d:#6f3052"><i style="left:6px;width:639px"></i><b class="f" style="left:8px;width:32px">T_<s></s></b><b class="f" style="left:42px;width:33px">T_<s></s></b><b class="f" style="left:77px;width:31px">T_<s></s></b><b class="f" style="left:110px;width:30px">T_<s></s></b><b class="f" style="left:142px;width:33px">T_<s></s></b><b class="f" style="left:177px;width:32px">T_<s></s></b><b class="f" style="left:211px;width:31px">T_<s></s></b><b class="f" style="left:244px;width:31px">T_<s></s></b><b class="f" style="left:277px;width:32px">T_<s></s></b><b class="f" style="left:311px;width:32px">T_<s></s></b><b class="f" style="left:345px;width:31px">T_<s></s></b><b class="f" style="left:378px;width:32px">T_<s></s></b><b class="f" style="left:412px;width:32px">T_<s></s></b><b class="f" style="left:446px;width:31px">T_<s></s></b><b class="f" style="left:479px;width:32px">T_<s></s></b><b class="f" style="left:513px;width:32px">T_<s></s></b><b class="f" style="left:547px;width:32px">T_<s></s></b><b class="f" style="left:581px;width:32px">T_<s></s></b><b class="f" style="left:615px;width:30px">T_<s></s></b><i style="left:679px;width:538px"></i><b class="f" style="left:681px;width:31px">T_<s></s></b><b class="f" style="left:714px;width:32px">T_<s></s></b><b class="f" style="left:748px;width:31px">T_<s></s></b><b class="f" style="left:781px;width:32px">T_<s></s></b><b class="f" style="left:815px;width:32px">T_<s></s></b><b class="f" style="left:849px;width:31px">T_<s></s></b><b class="f" style="left:882px;width:32px">T_<s></s></b><b class="f" style="left:916px;width:32px">T_<s></s></b><b class="f" style="left:950px;width:30px">T_<s></s></b><b class="f" style="left:982px;width:32px">T_<s></s></b><b class="f" style="left:1016px;width:33px">T_<s></s></b><b class="f" style="left:1051px;width:31px">T_<s></s></b><b class="f" style="left:1084px;width:33px">T_<s></s></b><b class="f" style="left:1119px;width:31px">T_<s></s></b><b class="f" style="left:1152px;width:31px">T_<s></s></b><b class="f" style="left:1185px;width:32px">T_<s></s></b><i style="left:1622px;width:938px"></i><b class="f" style="left:1624px;width:30px">T_<s></s></b><b class="f" style="left:1656px;width:31px">T_<s></s></b><b class="f" style="left:1689px;width:32px">T_<s></s></b><b class="f" style="left:1723px;width:31px">T_<s></s></b><b class="f" style="left:1756px;width:32px">T_<s></s></b><b class="f" style="left:1790px;width:31px">T_<s></s></b><b class="f" style="left:1823px;width:32px">T_<s></s></b><b class="f" style="left:1857px;width:31px">T_<s></s></b><b class="f" style="left:1890px;width:32px">T_<s></s></b><b class="f" style="left:1924px;width:31px">T_<s></s></b><b class="f" style="left:1957px;width:32px">T_<s></s></b><b class="f" style="left:1991px;width:32px">T_<s></s></b><b class="f" style="left:2025px;width:32px">T_<s></s></b><b class="f" style="left:2059px;width:31px">T_<s></s></b><b class="f" style="left:2092px;width:32px">T_<s></s></b><b class="f" style="left:2126px;width:32px">T_<s></s></b><b class="f" style="left:2160px;width:32px">T_<s></s></b><b class="f" style="left:2194px;width:31px">T_<s></s></b><b class="f" style="left:2227px;width:32px">T_<s></s></b><b class="f" style="left:2261px;width:31px">T_<s></s></b><b class="f" style="left:2294px;width:32px">T_<s></s></b><b class="f" style="left:2328px;width:31px">T_<s></s></b><b class="f" style="left:2361px;width:32px">T_<s></s></b><b class="f" style="left:2395px;width:31px">T_<s></s></b><b class="f" style="left:2428px;width:33px">T_<s></s></b><b class="f" style="left:2463px;width:32px">T_<s></s></b><b class="f" style="left:2497px;width:31px">T_<s></s></b><b class="f" style="left:2530px;width:30px">T_<s></s></b></div><div class="r" style="top:602px;height:34px;--c:#4aa0e8;--d:#265379"><i style="left:6px;width:639px"></i><b class="f" style="left:8px;width:32px">DB</b><b class="f" style="left:42px;width:33px">DB</b><b class="f" style="left:77px;width:31px">DB</b><b class="f" style="left:110px;width:30px">DB</b><b class="f" style="left:142px;width:33px">DB</b><b class="f" style="left:177px;width:32px">DB</b><b class="f" style="left:211px;width:31px">DB</b><b class="f" style="left:244px;width:31px">DB</b><b class="f" style="left:277px;width:32px">DB</b><b class="f" style="left:311px;width:32px">DB</b><b class="f" style="left:345px;width:31px">DB</b><b class="f" style="left:378px;width:32px">DB</b><b class="f" style="left:412px;width:32px">DB</b><b class="f" style="left:446px;width:31px">DB</b><b class="f" style="left:479px;width:32px">DB</b><b class="f" style="left:513px;width:32px">DB</b><b class="f" style="left:547px;width:32px">DB</b><b class="f" style="left:581px;width:32px">DB</b><b class="f" style="left:615px;width:30px">DB</b><i style="left:679px;width:538px"></i><b class="f" style="left:681px;width:31px">DB</b><b class="f" style="left:714px;width:32px">DB</b><b class="f" style="left:748px;width:31px">DB</b><b class="f" style="left:781px;width:32px">DB</b><b class="f" style="left:815px;width:32px">DB</b><b class="f" style="left:849px;width:31px">DB</b><b class="f" style="left:882px;width:32px">DB</b><b class="f" style="left:916px;width:32px">DB</b><b class="f" style="left:950px;width:30px">DB</b><b class="f" style="left:982px;width:32px">DB</b><b class="f" style="left:1016px;width:33px">DB</b><b class="f" style="left:1051px;width:31px">DB</b><b class="f" style="left:1084px;width:33px">DB</b><b class="f" style="left:1119px;width:31px">DB</b><b class="f" style="left:1152px;width:31px">DB</b><b class="f" style="left:1185px;width:32px">DB</b><i style="left:1485px;width:135px"></i><b class="f" style="left:1487px;width:32px">DB</b><b class="f" style="left:1521px;width:32px">DB</b><b class="f" style="left:1555px;width:32px">DB</b><b class="f" style="left:1589px;width:31px">DB</b><i style="left:1622px;width:938px"></i><b class="f" style="left:1624px;width:30px">DB</b><b class="f" style="left:1656px;width:31px">DB</b><b class="f" style="left:1689px;width:32px">DB</b><b class="f" style="left:1723px;width:31px">DB</b><b class="f" style="left:1756px;width:32px">DB</b><b class="f" style="left:1790px;width:31px">DB</b><b class="f" style="left:1823px;width:32px">DB</b><b class="f" style="left:1857px;width:31px">DB</b><b class="f" style="left:1890px;width:32px">DB</b><b class="f" style="left:1924px;width:31px">DB</b><b class="f" style="left:1957px;width:32px">DB</b><b class="f" style="left:1991px;width:32px">DB</b><b class="f" style="left:2025px;width:32px">DB</b><b class="f" style="left:2059px;width:31px">DB</b><b class="f" style="left:2092px;width:32px">DB</b><b class="f" style="left:2126px;width:32px">DB</b><b class="f" style="left:2160px;width:32px">DB</b><b class="f" style="left:2194px;width:31px">DB</b><b class="f" style="left:2227px;width:32px">DB</b><b class="f" style="left:2261px;width:31px">DB</b><b class="f" style="left:2294px;width:32px">DB</b><b class="f" style="left:2328px;width:31px">DB</b><b class="f" style="left:2361px;width:32px">DB</b><b class="f" style="left:2395px;width:31px">DB</b><b class="f" style="left:2428px;width:33px">DB</b><b class="f" style="left:2463px;width:32px">DB</b><b class="f" style="left:2497px;width:31px">DB</b><b class="f" style="left:2530px;width:30px">DB</b><i class="g" style="left:1350px;width:135px"></i><b class="g f" style="left:1352px;width:32px">DB</b><b class="g f" style="left:1386px;width:31px">DB</b><b class="g f" style="left:1419px;width:32px">DB</b><b class="g f" style="left:1453px;width:32px">DB</b></div><div class="r" style="top:640px;height:34px;--c:#816cdc;--d:#433872"><i style="left:6px;width:639px"></i><b class="f" style="left:8px;width:32px">AU</b><b class="f" style="left:42px;width:33px">AU</b><b class="f" style="left:77px;width:31px">AU</b><b class="f" style="left:110px;width:30px">AU</b><b class="f" style="left:142px;width:33px">AU</b><b class="f" style="left:177px;width:32px">AU</b><b class="f" style="left:211px;width:31px">AU</b><b class="f" style="left:244px;width:31px">AU</b><b class="f" style="left:277px;width:32px">AU</b><b class="f" style="left:311px;width:32px">AU</b><b class="f" style="left:345px;width:31px">AU</b><b class="f" style="left:378px;width:32px">AU</b><b class="f" style="left:412px;width:32px">AU</b><b class="f" style="left:446px;width:31px">AU</b><b class="f" style="left:479px;width:32px">AU</b><b class="f" style="left:513px;width:32px">AU</b><b class="f" style="left:547px;width:32px">AU</b><b class="f" style="left:581px;width:32px">AU</b><b class="f" style="left:615px;width:30px">AU</b><i style="left:679px;width:538px"></i><b class="f" style="left:681px;width:31px">AU</b><b class="f" style="left:714px;width:32px">AU</b><b class="f" style="left:748px;width:31px">AU</b><b class="f" style="left:781px;width:32px">AU</b><b class="f" style="left:815px;width:32px">AU</b><b class="f" style="left:849px;width:31px">AU</b><b class="f" style="left:882px;width:32px">AU</b><b class="f" style="left:916px;width:32px">AU</b><b class="f" style="left:950px;width:30px">AU</b><b class="f" style="left:982px;width:32px">AU</b><b class="f" style="left:1016px;width:33px">AU</b><b class="f" style="left:1051px;width:31px">AU</b><b class="f" style="left:1084px;width:33px">AU</b><b class="f" style="left:1119px;width:31px">AU</b><b class="f" style="left:1152px;width:31px">AU</b><b class="f" style="left:1185px;width:32px">AU</b><i style="left:1350px;width:270px"></i><b class="f" style="left:1352px;width:32px">AU</b><b class="f" style="left:1386px;width:31px">AU</b><b class="f" style="left:1419px;width:32px">AU</b><b class="f" style="left:1453px;width:32px">AU</b><b class="f" style="left:1487px;width:32px">AU</b><b class="f" style="left:1521px;width:32px">AU</b><b class="f" style="left:1555px;width:32px">AU</b><b class="f" style="left:1589px;width:31px">AU</b><i style="left:1622px;width:938px"></i><b class="f" style="left:1624px;width:30px">AU</b><b class="f" style="left:1656px;width:31px">AU</b><b class="f" style="left:1689px;width:32px">AU</b><b class="f" style="left:1723px;width:31px">AU</b><b class="f" style="left:1756px;width:32px">AU</b><b class="f" style="left:1790px;width:31px">AU</b><b class="f" style="left:1823px;width:32px">AU</b><b class="f" style="left:1857px;width:31px">AU</b><b class="f" style="left:1890px;width:32px">AU</b><b class="f" style="left:1924px;width:31px">AU</b><b class="f" style="left:1957px;width:32px">AU</b><b class="f" style="left:1991px;width:32px">AU</b><b class="f" style="left:2025px;width:32px">AU</b><b class="f" style="left:2059px;width:31px">AU</b><b class="f" style="left:2092px;width:32px">AU</b><b class="f" style="left:2126px;width:32px">AU</b><b class="f" style="left:2160px;width:32px">AU</b><b class="f" style="left:2194px;width:31px">AU</b><b class="f" style="left:2227px;width:32px">AU</b><b class="f" style="left:2261px;width:31px">AU</b><b class="f" style="left:2294px;width:32px">AU</b><b class="f" style="left:2328px;width:31px">AU</b><b class="f" style="left:2361px;width:32px">AU</b><b class="f" style="left:2395px;width:31px">AU</b><b class="f" style="left:2428px;width:33px">AU</b><b class="f" style="left:2463px;width:32px">AU</b><b class="f" style="left:2497px;width:31px">AU</b><b class="f" style="left:2530px;width:30px">AU</b></div><div class="r" style="top:678px;height:34px;--c:#3a7cc0;--d:#1e4064"><i style="left:6px;width:639px"></i><b class="f" style="left:8px;width:32px">DS</b><b class="f" style="left:42px;width:33px">DS</b><b class="f" style="left:77px;width:31px">DS</b><b class="f" style="left:110px;width:30px">DS</b><b class="f" style="left:142px;width:33px">DS</b><b class="f" style="left:177px;width:32px">DS</b><b class="f" style="left:211px;width:31px">DS</b><b class="f" style="left:244px;width:31px">DS</b><b class="f" style="left:277px;width:32px">DS</b><b class="f" style="left:311px;width:32px">DS</b><b class="f" style="left:345px;width:31px">DS</b><b class="f" style="left:378px;width:32px">DS</b><b class="f" style="left:412px;width:32px">DS</b><b class="f" style="left:446px;width:31px">DS</b><b class="f" style="left:479px;width:32px">DS</b><b class="f" style="left:513px;width:32px">DS</b><b class="f" style="left:547px;width:32px">DS</b><b class="f" style="left:581px;width:32px">DS</b><b class="f" style="left:615px;width:30px">DS</b><i style="left:679px;width:538px"></i><b class="f" style="left:681px;width:31px">DS</b><b class="f" style="left:714px;width:32px">DS</b><b class="f" style="left:748px;width:31px">DS</b><b class="f" style="left:781px;width:32px">DS</b><b class="f" style="left:815px;width:32px">DS</b><b class="f" style="left:849px;width:31px">DS</b><b class="f" style="left:882px;width:32px">DS</b><b class="f" style="left:916px;width:32px">DS</b><b class="f" style="left:950px;width:30px">DS</b><b class="f" style="left:982px;width:32px">DS</b><b class="f" style="left:1016px;width:33px">DS</b><b class="f" style="left:1051px;width:31px">DS</b><b class="f" style="left:1084px;width:33px">DS</b><b class="f" style="left:1119px;width:31px">DS</b><b class="f" style="left:1152px;width:31px">DS</b><b class="f" style="left:1185px;width:32px">DS</b><i style="left:1350px;width:270px"></i><b class="f" style="left:1352px;width:32px">DS</b><b class="f" style="left:1386px;width:31px">DS</b><b class="f" style="left:1419px;width:32px">DS</b><b class="f" style="left:1453px;width:32px">DS</b><b class="f" style="left:1487px;width:32px">DS</b><b class="f" style="left:1521px;width:32px">DS</b><b class="f" style="left:1555px;width:32px">DS</b><b class="f" style="left:1589px;width:31px">DS</b><i style="left:1622px;width:938px"></i><b class="f" style="left:1624px;width:30px">DS</b><b class="f" style="left:1656px;width:31px">DS</b><b class="f" style="left:1689px;width:32px">DS</b><b class="f" style="left:1723px;width:31px">DS</b><b class="f" style="left:1756px;width:32px">DS</b><b class="f" style="left:1790px;width:31px">DS</b><b class="f" style="left:1823px;width:32px">DS</b><b class="f" style="left:1857px;width:31px">DS</b><b class="f" style="left:1890px;width:32px">DS</b><b class="f" style="left:1924px;width:31px">DS</b><b class="f" style="left:1957px;width:32px">DS</b><b class="f" style="left:1991px;width:32px">DS</b><b class="f" style="left:2025px;width:32px">DS</b><b class="f" style="left:2059px;width:31px">DS</b><b class="f" style="left:2092px;width:32px">DS</b><b class="f" style="left:2126px;width:32px">DS</b><b class="f" style="left:2160px;width:32px">DS</b><b class="f" style="left:2194px;width:31px">DS</b><b class="f" style="left:2227px;width:32px">DS</b><b class="f" style="left:2261px;width:31px">DS</b><b class="f" style="left:2294px;width:32px">DS</b><b class="f" style="left:2328px;width:31px">DS</b><b class="f" style="left:2361px;width:32px">DS</b><b class="f" style="left:2395px;width:31px">DS</b><b class="f" style="left:2428px;width:33px">DS</b><b class="f" style="left:2463px;width:32px">DS</b><b class="f" style="left:2497px;width:31px">DS</b><b class="f" style="left:2530px;width:30px">DS</b></div><div class="r" style="top:716px;height:34px;--c:#eb4bcf;--d:#7a276c"><i style="left:6px;width:539px"></i><b style="left:8px;width:67px"></b><b style="left:77px;width:63px"></b><b style="left:142px;width:67px"></b><b style="left:211px;width:64px"></b><b style="left:277px;width:66px"></b><b style="left:345px;width:65px"></b><b style="left:412px;width:65px"></b><b style="left:479px;width:66px"></b><i style="left:679px;width:538px"></i><b style="left:681px;width:65px"></b><b style="left:748px;width:65px"></b><b style="left:815px;width:65px"></b><b style="left:882px;width:66px"></b><b style="left:950px;width:64px"></b><b style="left:1016px;width:66px"></b><b style="left:1084px;width:66px"></b><b style="left:1152px;width:65px"></b><i style="left:1620px;width:940px"></i><b style="left:1622px;width:65px"></b><b style="left:1689px;width:65px"></b><b style="left:1756px;width:65px"></b><b style="left:1823px;width:65px"></b><b style="left:1890px;width:65px"></b><b style="left:1957px;width:66px"></b><b style="left:2025px;width:65px"></b><b style="left:2092px;width:66px"></b><b style="left:2160px;width:65px"></b><b style="left:2227px;width:65px"></b><b style="left:2294px;width:65px"></b><b style="left:2361px;width:65px"></b><b style="left:2428px;width:67px"></b><b style="left:2497px;width:63px"></b></div><div class="r" style="top:754px;height:34px;--c:#c870e0;--d:#683a74"><i style="left:679px;width:538px"></i><b style="left:681px;width:65px"></b><b style="left:748px;width:65px"></b><b style="left:815px;width:65px"></b><b style="left:882px;width:66px"></b><b style="left:950px;width:64px"></b><b style="left:1016px;width:66px"></b><b style="left:1084px;width:66px"></b><b style="left:1152px;width:65px"></b><i style="left:1624px;width:936px"></i><b style="left:1626px;width:61px"></b><b style="left:1689px;width:32px"></b><b style="left:1723px;width:31px"></b><b style="left:1756px;width:65px"></b><b style="left:1823px;width:65px"></b><b style="left:1890px;width:65px"></b><b style="left:1957px;width:66px"></b><b style="left:2025px;width:65px"></b><b style="left:2092px;width:66px"></b><b style="left:2160px;width:65px"></b><b style="left:2227px;width:65px"></b><b style="left:2294px;width:65px"></b><b style="left:2361px;width:65px"></b><b style="left:2428px;width:67px"></b><b style="left:2497px;width:63px"></b></div><div class="r" style="top:792px;height:34px;--c:#5f80dd;--d:#314373"><i style="left:6px;width:639px"></i><b class="f" style="left:8px;width:32px">AM</b><b class="f" style="left:42px;width:33px">AM</b><b class="f" style="left:77px;width:31px">AM</b><b class="f" style="left:110px;width:30px">AM</b><b class="f" style="left:142px;width:33px">AM</b><b class="f" style="left:177px;width:32px">AM</b><b class="f" style="left:211px;width:31px">AM</b><b class="f" style="left:244px;width:31px">AM</b><b class="f" style="left:277px;width:32px">AM</b><b class="f" style="left:311px;width:32px">AM</b><b class="f" style="left:345px;width:31px">AM</b><b class="f" style="left:378px;width:32px">AM</b><b class="f" style="left:412px;width:32px">AM</b><b class="f" style="left:446px;width:31px">AM</b><b class="f" style="left:479px;width:32px">AM</b><b class="f" style="left:513px;width:32px">AM</b><b class="f" style="left:547px;width:32px">AM</b><b class="f" style="left:581px;width:32px">AM</b><b class="f" style="left:615px;width:30px">AM</b><i style="left:679px;width:941px"></i><b class="f" style="left:681px;width:31px">AM</b><b class="f" style="left:714px;width:32px">AM</b><b class="f" style="left:748px;width:31px">AM</b><b class="f" style="left:781px;width:32px">AM</b><b class="f" style="left:815px;width:32px">AM</b><b class="f" style="left:849px;width:31px">AM</b><b class="f" style="left:882px;width:32px">AM</b><b class="f" style="left:916px;width:32px">AM</b><b class="f" style="left:950px;width:30px">AM</b><b class="f" style="left:982px;width:32px">AM</b><b class="f" style="left:1016px;width:33px">AM</b><b class="f" style="left:1051px;width:31px">AM</b><b class="f" style="left:1084px;width:33px">AM</b><b class="f" style="left:1119px;width:31px">AM</b><b class="f" style="left:1152px;width:31px">AM</b><b class="f" style="left:1185px;width:32px">AM</b><b class="f" style="left:1219px;width:32px">AM</b><b class="f" style="left:1253px;width:31px">AM</b><b class="f" style="left:1286px;width:31px">AM</b><b class="f" style="left:1319px;width:31px">AM</b><b class="f" style="left:1352px;width:32px">AM</b><b class="f" style="left:1386px;width:31px">AM</b><b class="f" style="left:1419px;width:32px">AM</b><b class="f" style="left:1453px;width:32px">AM</b><b class="f" style="left:1487px;width:32px">AM</b><b class="f" style="left:1521px;width:32px">AM</b><b class="f" style="left:1555px;width:32px">AM</b><b class="f" style="left:1589px;width:31px">AM</b><i style="left:1624px;width:936px"></i><b class="f" style="left:1626px;width:28px">AM</b><b class="f" style="left:1656px;width:31px">AM</b><b class="f" style="left:1689px;width:32px">AM</b><b class="f" style="left:1723px;width:31px">AM</b><b class="f" style="left:1756px;width:32px">AM</b><b class="f" style="left:1790px;width:31px">AM</b><b class="f" style="left:1823px;width:32px">AM</b><b class="f" style="left:1857px;width:31px">AM</b><b class="f" style="left:1890px;width:32px">AM</b><b class="f" style="left:1924px;width:31px">AM</b><b class="f" style="left:1957px;width:32px">AM</b><b class="f" style="left:1991px;width:32px">AM</b><b class="f" style="left:2025px;width:32px">AM</b><b class="f" style="left:2059px;width:31px">AM</b><b class="f" style="left:2092px;width:32px">AM</b><b class="f" style="left:2126px;width:32px">AM</b><b class="f" style="left:2160px;width:32px">AM</b><b class="f" style="left:2194px;width:31px">AM</b><b class="f" style="left:2227px;width:32px">AM</b><b class="f" style="left:2261px;width:31px">AM</b><b class="f" style="left:2294px;width:32px">AM</b><b class="f" style="left:2328px;width:31px">AM</b><b class="f" style="left:2361px;width:32px">AM</b><b class="f" style="left:2395px;width:31px">AM</b><b class="f" style="left:2428px;width:33px">AM</b><b class="f" style="left:2463px;width:32px">AM</b><b class="f" style="left:2497px;width:31px">AM</b><b class="f" style="left:2530px;width:30px">AM</b></div><div class="r" style="top:830px;height:34px;--c:#b07cc4;--d:#5c4066"><i style="left:242px;width:33px"></i><b class="f" style="left:244px;width:31px">03</b><i style="left:545px;width:34px"></i><b class="f" style="left:547px;width:32px">ML</b><i style="left:579px;width:8px"></i><b class="f" style="left:581px;width:6px"></b><i style="left:587px;width:26px"></i><b class="f" style="left:589px;width:24px">M</b><i style="left:613px;width:32px"></i><b class="f" style="left:615px;width:30px">ML</b><i style="left:645px;width:9px"></i><b class="f" style="left:647px;width:7px"></b><i style="left:654px;width:25px"></i><b class="f" style="left:656px;width:23px">M</b><i style="left:679px;width:33px"></i><b class="f" style="left:681px;width:31px">ML</b><i style="left:712px;width:9px"></i><b class="f" style="left:714px;width:7px"></b><i style="left:721px;width:25px"></i><b class="f" style="left:723px;width:23px">M</b><i style="left:746px;width:33px"></i><b class="f" style="left:748px;width:31px">ML</b><i style="left:779px;width:9px"></i><b class="f" style="left:781px;width:7px"></b><i style="left:788px;width:25px"></i><b class="f" style="left:790px;width:23px">M</b><i style="left:813px;width:34px"></i><b class="f" style="left:815px;width:32px">ML</b><i style="left:847px;width:8px"></i><b class="f" style="left:849px;width:6px"></b><i style="left:855px;width:25px"></i><b class="f" style="left:857px;width:23px">M</b><i style="left:880px;width:34px"></i><b class="f" style="left:882px;width:32px">ML</b><i style="left:914px;width:9px"></i><b class="f" style="left:916px;width:7px"></b><i style="left:923px;width:25px"></i><b class="f" style="left:925px;width:23px">M</b><i style="left:948px;width:32px"></i><b class="f" style="left:950px;width:30px">ML</b><i style="left:980px;width:9px"></i><b class="f" style="left:982px;width:7px"></b><i style="left:989px;width:25px"></i><b class="f" style="left:991px;width:23px">M</b><i style="left:1014px;width:35px"></i><b class="f" style="left:1016px;width:33px">ML</b><i style="left:1049px;width:8px"></i><b class="f" style="left:1051px;width:6px"></b><i style="left:1057px;width:25px"></i><b class="f" style="left:1059px;width:23px">M</b><i style="left:1082px;width:35px"></i><b class="f" style="left:1084px;width:33px">ML</b><i style="left:1117px;width:8px"></i><b class="f" style="left:1119px;width:6px"></b><i style="left:1125px;width:25px"></i><b class="f" style="left:1127px;width:23px">M</b><i style="left:1150px;width:33px"></i><b class="f" style="left:1152px;width:31px">ML</b><i style="left:1183px;width:9px"></i><b class="f" style="left:1185px;width:7px"></b><i style="left:1192px;width:25px"></i><b class="f" style="left:1194px;width:23px">M</b><i style="left:1217px;width:34px"></i><b class="f" style="left:1219px;width:32px">ML</b><i style="left:1251px;width:8px"></i><b class="f" style="left:1253px;width:6px"></b><i style="left:1259px;width:25px"></i><b class="f" style="left:1261px;width:23px">M</b><i style="left:1284px;width:33px"></i><b class="f" style="left:1286px;width:31px">ML</b><i style="left:1317px;width:8px"></i><b class="f" style="left:1319px;width:6px"></b><i style="left:1325px;width:25px"></i><b class="f" style="left:1327px;width:23px">M</b><i style="left:1350px;width:34px"></i><b class="f" style="left:1352px;width:32px">ML</b><i style="left:1384px;width:8px"></i><b class="f" style="left:1386px;width:6px"></b><i style="left:1392px;width:25px"></i><b class="f" style="left:1394px;width:23px">M</b><i style="left:1417px;width:34px"></i><b class="f" style="left:1419px;width:32px">ML</b><i style="left:1451px;width:8px"></i><b class="f" style="left:1453px;width:6px"></b><i style="left:1459px;width:26px"></i><b class="f" style="left:1461px;width:24px">M</b><i style="left:1485px;width:34px"></i><b class="f" style="left:1487px;width:32px">ML</b><i style="left:1519px;width:8px"></i><b class="f" style="left:1521px;width:6px"></b><i style="left:1527px;width:26px"></i><b class="f" style="left:1529px;width:24px">M</b><i style="left:1553px;width:34px"></i><b class="f" style="left:1555px;width:32px">ML</b><i style="left:1587px;width:8px"></i><b class="f" style="left:1589px;width:6px"></b><i style="left:1595px;width:25px"></i><b class="f" style="left:1597px;width:23px">M</b><i style="left:1624px;width:30px"></i><b class="f" style="left:1626px;width:28px">ML</b><i style="left:1654px;width:8px"></i><b class="f" style="left:1656px;width:6px"></b><i style="left:1662px;width:25px"></i><b class="f" style="left:1664px;width:23px">M</b><i style="left:1687px;width:34px"></i><b class="f" style="left:1689px;width:32px">ML</b><i style="left:1721px;width:8px"></i><b class="f" style="left:1723px;width:6px"></b><i style="left:1729px;width:25px"></i><b class="f" style="left:1731px;width:23px">M</b><i style="left:1754px;width:34px"></i><b class="f" style="left:1756px;width:32px">ML</b><i style="left:1788px;width:8px"></i><b class="f" style="left:1790px;width:6px"></b><i style="left:1796px;width:25px"></i><b class="f" style="left:1798px;width:23px">M</b><i style="left:1821px;width:34px"></i><b class="f" style="left:1823px;width:32px">ML</b><i style="left:1855px;width:8px"></i><b class="f" style="left:1857px;width:6px"></b><i style="left:1863px;width:25px"></i><b class="f" style="left:1865px;width:23px">M</b><i style="left:1888px;width:34px"></i><b class="f" style="left:1890px;width:32px">ML</b><i style="left:1922px;width:8px"></i><b class="f" style="left:1924px;width:6px"></b><i style="left:1930px;width:25px"></i><b class="f" style="left:1932px;width:23px">M</b><i style="left:1955px;width:34px"></i><b class="f" style="left:1957px;width:32px">ML</b><i style="left:1989px;width:8px"></i><b class="f" style="left:1991px;width:6px"></b><i style="left:1997px;width:26px"></i><b class="f" style="left:1999px;width:24px">M</b><i style="left:2023px;width:34px"></i><b class="f" style="left:2025px;width:32px">ML</b><i style="left:2057px;width:8px"></i><b class="f" style="left:2059px;width:6px"></b><i style="left:2065px;width:25px"></i><b class="f" style="left:2067px;width:23px">M</b><i style="left:2090px;width:34px"></i><b class="f" style="left:2092px;width:32px">ML</b><i style="left:2124px;width:9px"></i><b class="f" style="left:2126px;width:7px"></b><i style="left:2133px;width:25px"></i><b class="f" style="left:2135px;width:23px">M</b><i style="left:2158px;width:34px"></i><b class="f" style="left:2160px;width:32px">ML</b><i style="left:2192px;width:8px"></i><b class="f" style="left:2194px;width:6px"></b><i style="left:2200px;width:25px"></i><b class="f" style="left:2202px;width:23px">M</b><i style="left:2225px;width:34px"></i><b class="f" style="left:2227px;width:32px">ML</b><i style="left:2259px;width:8px"></i><b class="f" style="left:2261px;width:6px"></b><i style="left:2267px;width:25px"></i><b class="f" style="left:2269px;width:23px">M</b><i style="left:2292px;width:34px"></i><b class="f" style="left:2294px;width:32px">ML</b><i style="left:2326px;width:8px"></i><b class="f" style="left:2328px;width:6px"></b><i style="left:2334px;width:25px"></i><b class="f" style="left:2336px;width:23px">M</b><i style="left:2359px;width:34px"></i><b class="f" style="left:2361px;width:32px">ML</b><i style="left:2393px;width:8px"></i><b class="f" style="left:2395px;width:6px"></b><i style="left:2401px;width:25px"></i><b class="f" style="left:2403px;width:23px">M</b><i style="left:2426px;width:35px"></i><b class="f" style="left:2428px;width:33px">ML</b><i style="left:2461px;width:8px"></i><b class="f" style="left:2463px;width:6px"></b><i style="left:2469px;width:26px"></i><b class="f" style="left:2471px;width:24px">M</b><i style="left:2495px;width:33px"></i><b class="f" style="left:2497px;width:31px">ML</b><i style="left:2528px;width:8px"></i><b class="f" style="left:2530px;width:6px"></b><i style="left:2536px;width:24px"></i><b class="f" style="left:2538px;width:22px">M</b></div><div class="r" style="top:868px;height:34px;--c:#d55c9e;--d:#6f3052"><i style="left:6px;width:2554px"></i><b class="f" style="left:8px;width:132px">SYNC_KIT_30</b><b class="f" style="left:142px;width:133px">SYNC_KIT_30</b><b class="f" style="left:277px;width:133px">SYNC_KIT_30</b><b class="f" style="left:412px;width:133px">SYNC_KIT_30</b><b class="f" style="left:547px;width:132px">SYNC_KIT_30</b><b class="f" style="left:681px;width:132px">SYNC_KIT_30</b><b class="f" style="left:815px;width:133px">SYNC_KIT_30</b><b class="f" style="left:950px;width:132px">SYNC_KIT_30</b><b class="f" style="left:1084px;width:133px">SYNC_KIT_30</b><b class="f" style="left:1219px;width:131px">SYNC_KIT_30</b><b class="f" style="left:1352px;width:133px">SYNC_KIT_30</b><b class="f" style="left:1487px;width:133px">SYNC_KIT_30</b><b class="f" style="left:1622px;width:132px">SYNC_KIT_30</b><b class="f" style="left:1756px;width:132px">SYNC_KIT_30</b><b class="f" style="left:1890px;width:133px">SYNC_KIT_30</b><b class="f" style="left:2025px;width:133px">SYNC_KIT_30</b><b class="f" style="left:2160px;width:132px">SYNC_KIT_30</b><b class="f" style="left:2294px;width:132px">SYNC_KIT_30</b><b class="f" style="left:2428px;width:132px">SYNC_KIT_30</b></div><div class="r e" style="top:906px;height:104px;--c:#6fe7fb;--d:#3a7883"><i style="left:948px;width:672px"></i><b style="left:950px;width:64px">SYNC_KIT_30</b><i style="left:950px;width:64px;top:34px;background:#4ea2b0"></i><u style="left:950px;width:30px"></u><u class="f" style="left:982px;width:32px"></u><svg style="left:948px;top:34px" width="66" height="70"><use href="#wg4"/></svg><b style="left:1016px;width:66px">SYNC_KIT_30</b><i style="left:1016px;width:66px;top:34px;background:#4ea2b0"></i><u style="left:1016px;width:33px"></u><u class="f" style="left:1051px;width:31px"></u><svg style="left:1014px;top:34px" width="68" height="70"><use href="#wg4"/></svg><b style="left:1084px;width:66px">SYNC_KIT_30</b><i style="left:1084px;width:66px;top:34px;background:#4ea2b0"></i><u style="left:1084px;width:33px"></u><u class="f" style="left:1119px;width:31px"></u><svg style="left:1082px;top:34px" width="68" height="70"><use href="#wg4"/></svg><b style="left:1152px;width:65px">SYNC_KIT_30</b><i style="left:1152px;width:65px;top:34px;background:#4ea2b0"></i><u style="left:1152px;width:31px"></u><u class="f" style="left:1185px;width:32px"></u><svg style="left:1150px;top:34px" width="67" height="70"><use href="#wg4"/></svg><b style="left:1219px;width:65px">SYNC_KIT_30</b><i style="left:1219px;width:65px;top:34px;background:#4ea2b0"></i><u style="left:1219px;width:32px"></u><u class="f" style="left:1253px;width:31px"></u><svg style="left:1217px;top:34px" width="67" height="70"><use href="#wg4"/></svg><b style="left:1286px;width:64px">SYNC_KIT_30</b><i style="left:1286px;width:64px;top:34px;background:#4ea2b0"></i><u style="left:1286px;width:31px"></u><u class="f" style="left:1319px;width:31px"></u><svg style="left:1284px;top:34px" width="66" height="70"><use href="#wg4"/></svg><b style="left:1352px;width:65px">SYNC_KIT_30</b><i style="left:1352px;width:65px;top:34px;background:#4ea2b0"></i><u style="left:1352px;width:32px"></u><u class="f" style="left:1386px;width:31px"></u><svg style="left:1350px;top:34px" width="67" height="70"><use href="#wg4"/></svg><b style="left:1419px;width:66px">SYNC_KIT_30</b><i style="left:1419px;width:66px;top:34px;background:#4ea2b0"></i><u style="left:1419px;width:32px"></u><u class="f" style="left:1453px;width:32px"></u><svg style="left:1417px;top:34px" width="68" height="70"><use href="#wg4"/></svg><b style="left:1487px;width:66px">SYNC_KIT_30</b><i style="left:1487px;width:66px;top:34px;background:#4ea2b0"></i><u style="left:1487px;width:32px"></u><u class="f" style="left:1521px;width:32px"></u><svg style="left:1485px;top:34px" width="68" height="70"><use href="#wg4"/></svg><b style="left:1555px;width:65px">SYNC_KIT_30</b><i style="left:1555px;width:65px;top:34px;background:#4ea2b0"></i><u style="left:1555px;width:32px"></u><u class="f" style="left:1589px;width:31px"></u><svg style="left:1553px;top:34px" width="67" height="70"><use href="#wg4"/></svg><i style="left:1888px;width:672px"></i><b style="left:1890px;width:65px">SYNC_KIT_30</b><i style="left:1890px;width:65px;top:34px;background:#4ea2b0"></i><u style="left:1890px;width:32px"></u><u class="f" style="left:1924px;width:31px"></u><svg style="left:1888px;top:34px" width="67" height="70"><use href="#wg4"/></svg><b style="left:1957px;width:66px">SYNC_KIT_30</b><i style="left:1957px;width:66px;top:34px;background:#4ea2b0"></i><u style="left:1957px;width:32px"></u><u class="f" style="left:1991px;width:32px"></u><svg style="left:1955px;top:34px" width="68" height="70"><use href="#wg4"/></svg><b style="left:2025px;width:65px">SYNC_KIT_30</b><i style="left:2025px;width:65px;top:34px;background:#4ea2b0"></i><u style="left:2025px;width:32px"></u><u class="f" style="left:2059px;width:31px"></u><svg style="left:2023px;top:34px" width="67" height="70"><use href="#wg4"/></svg><b style="left:2092px;width:66px">SYNC_KIT_30</b><i style="left:2092px;width:66px;top:34px;background:#4ea2b0"></i><u style="left:2092px;width:32px"></u><u class="f" style="left:2126px;width:32px"></u><svg style="left:2090px;top:34px" width="68" height="70"><use href="#wg4"/></svg><b style="left:2160px;width:65px">SYNC_KIT_30</b><i style="left:2160px;width:65px;top:34px;background:#4ea2b0"></i><u style="left:2160px;width:32px"></u><u class="f" style="left:2194px;width:31px"></u><svg style="left:2158px;top:34px" width="67" height="70"><use href="#wg4"/></svg><b style="left:2227px;width:65px">SYNC_KIT_30</b><i style="left:2227px;width:65px;top:34px;background:#4ea2b0"></i><u style="left:2227px;width:32px"></u><u class="f" style="left:2261px;width:31px"></u><svg style="left:2225px;top:34px" width="67" height="70"><use href="#wg4"/></svg><b style="left:2294px;width:65px">SYNC_KIT_30</b><i style="left:2294px;width:65px;top:34px;background:#4ea2b0"></i><u style="left:2294px;width:32px"></u><u class="f" style="left:2328px;width:31px"></u><svg style="left:2292px;top:34px" width="67" height="70"><use href="#wg4"/></svg><b style="left:2361px;width:65px">SYNC_KIT_30</b><i style="left:2361px;width:65px;top:34px;background:#4ea2b0"></i><u style="left:2361px;width:32px"></u><u class="f" style="left:2395px;width:31px"></u><svg style="left:2359px;top:34px" width="67" height="70"><use href="#wg4"/></svg><b style="left:2428px;width:67px">SYNC_KIT_30</b><i style="left:2428px;width:67px;top:34px;background:#4ea2b0"></i><u style="left:2428px;width:33px"></u><u class="f" style="left:2463px;width:32px"></u><svg style="left:2426px;top:34px" width="69" height="70"><use href="#wg4"/></svg><b style="left:2497px;width:63px">SYNC_KIT_30</b><i style="left:2497px;width:63px;top:34px;background:#4ea2b0"></i><u style="left:2497px;width:31px"></u><u class="f" style="left:2530px;width:30px"></u><svg style="left:2495px;top:34px" width="65" height="70"><use href="#wg4"/></svg></div><div class="r" style="top:1014px;height:34px;--c:#d6d17a;--d:#6f6d3f"><i style="left:670px;width:14px;background:#8a8750"></i><b style="left:672px;width:6px;background:linear-gradient(100deg,#d2cf7a 40%,#b8b46c 40%)"></b><b style="left:680px;width:4px;background:#d9d57e"></b><i style="left:1612px;width:14px;background:#8a8750"></i><b style="left:1614px;width:6px;background:linear-gradient(100deg,#d2cf7a 40%,#b8b46c 40%)"></b><b style="left:1622px;width:4px;background:#d9d57e"></b></div><div class="r" style="top:1052px;height:34px;--c:#8ff7e2;--d:#4a8076"><i style="left:645px;width:269px"></i><b class="f" style="left:647px;width:267px"><span style="letter-spacing:1.1px">AHA_IJ_130_vocal_loop_old</span></b><i style="left:1587px;width:268px"></i><b class="f" style="left:1589px;width:266px"><span style="letter-spacing:1.1px">AHA_IJ_130_vocal_loop_old</span></b></div><div class="r e" style="top:1090px;height:104px;--c:#816cdc;--d:#433872"><i style="left:948px;width:672px"></i><b style="left:950px;width:64px">SO_HEAVY</b><i style="left:950px;width:64px;top:34px;background:#5a4c9a"></i><u style="left:950px;width:30px"></u><u class="f" style="left:982px;width:32px"></u><svg style="left:948px;top:34px" width="66" height="70"><use href="#wtr"/></svg><b style="left:1016px;width:66px">SO_HEAVY</b><i style="left:1016px;width:66px;top:34px;background:#5a4c9a"></i><u style="left:1016px;width:33px"></u><u class="f" style="left:1051px;width:31px"></u><svg style="left:1014px;top:34px" width="68" height="70"><use href="#wtr"/></svg><b style="left:1084px;width:66px">SO_HEAVY</b><i style="left:1084px;width:66px;top:34px;background:#5a4c9a"></i><u style="left:1084px;width:33px"></u><u class="f" style="left:1119px;width:31px"></u><svg style="left:1082px;top:34px" width="68" height="70"><use href="#wtr"/></svg><b style="left:1152px;width:65px">SO_HEAVY</b><i style="left:1152px;width:65px;top:34px;background:#5a4c9a"></i><u style="left:1152px;width:31px"></u><u class="f" style="left:1185px;width:32px"></u><svg style="left:1150px;top:34px" width="67" height="70"><use href="#wtr"/></svg><b style="left:1219px;width:65px">SO_HEAVY</b><i style="left:1219px;width:65px;top:34px;background:#5a4c9a"></i><u style="left:1219px;width:32px"></u><u class="f" style="left:1253px;width:31px"></u><svg style="left:1217px;top:34px" width="67" height="70"><use href="#wtr"/></svg><b style="left:1286px;width:64px">SO_HEAVY</b><i style="left:1286px;width:64px;top:34px;background:#5a4c9a"></i><u style="left:1286px;width:31px"></u><u class="f" style="left:1319px;width:31px"></u><svg style="left:1284px;top:34px" width="66" height="70"><use href="#wtr"/></svg><b style="left:1352px;width:65px">SO_HEAVY</b><i style="left:1352px;width:65px;top:34px;background:#5a4c9a"></i><u style="left:1352px;width:32px"></u><u class="f" style="left:1386px;width:31px"></u><svg style="left:1350px;top:34px" width="67" height="70"><use href="#wtr"/></svg><b style="left:1419px;width:66px">SO_HEAVY</b><i style="left:1419px;width:66px;top:34px;background:#5a4c9a"></i><u style="left:1419px;width:32px"></u><u class="f" style="left:1453px;width:32px"></u><svg style="left:1417px;top:34px" width="68" height="70"><use href="#wtr"/></svg><b style="left:1487px;width:66px">SO_HEAVY</b><i style="left:1487px;width:66px;top:34px;background:#5a4c9a"></i><u style="left:1487px;width:32px"></u><u class="f" style="left:1521px;width:32px"></u><svg style="left:1485px;top:34px" width="68" height="70"><use href="#wtr"/></svg><b style="left:1555px;width:65px">SO_HEAVY</b><i style="left:1555px;width:65px;top:34px;background:#5a4c9a"></i><u style="left:1555px;width:32px"></u><u class="f" style="left:1589px;width:31px"></u><svg style="left:1553px;top:34px" width="67" height="70"><use href="#wtr"/></svg><i style="left:1888px;width:270px"></i><b style="left:1890px;width:65px">SO_HEAVY</b><i style="left:1890px;width:65px;top:34px;background:#5a4c9a"></i><u style="left:1890px;width:32px"></u><u class="f" style="left:1924px;width:31px"></u><svg style="left:1888px;top:34px" width="67" height="70"><use href="#wtr"/></svg><b style="left:1957px;width:66px">SO_HEAVY</b><i style="left:1957px;width:66px;top:34px;background:#5a4c9a"></i><u style="left:1957px;width:32px"></u><u class="f" style="left:1991px;width:32px"></u><svg style="left:1955px;top:34px" width="68" height="70"><use href="#wtr"/></svg><b style="left:2025px;width:65px">SO_HEAVY</b><i style="left:2025px;width:65px;top:34px;background:#5a4c9a"></i><u style="left:2025px;width:32px"></u><u class="f" style="left:2059px;width:31px"></u><svg style="left:2023px;top:34px" width="67" height="70"><use href="#wtr"/></svg><b style="left:2092px;width:66px">SO_HEAVY</b><i style="left:2092px;width:66px;top:34px;background:#5a4c9a"></i><u style="left:2092px;width:32px"></u><u class="f" style="left:2126px;width:32px"></u><svg style="left:2090px;top:34px" width="68" height="70"><use href="#wtr"/></svg></div><div class="r e" style="top:1198px;height:70px;--c:#c99c42;--d:#695122"><i style="left:545px;width:134px"></i><b style="left:547px;width:132px"></b><i style="left:547px;width:132px;top:34px;background:#8d6d2e"></i><u style="left:547px;width:32px"></u><u style="left:581px;width:32px"></u><u style="left:615px;width:30px"></u><u style="left:647px;width:32px"></u><i style="left:1217px;width:403px"></i><b style="left:1219px;width:131px"></b><i style="left:1219px;width:131px;top:34px;background:#8d6d2e"></i><u style="left:1219px;width:32px"></u><u style="left:1253px;width:31px"></u><u style="left:1286px;width:31px"></u><u style="left:1319px;width:31px"></u><b style="left:1352px;width:133px"></b><i style="left:1352px;width:133px;top:34px;background:#8d6d2e"></i><u style="left:1352px;width:32px"></u><u style="left:1386px;width:31px"></u><u style="left:1419px;width:32px"></u><u style="left:1453px;width:32px"></u><b style="left:1487px;width:133px"></b><i style="left:1487px;width:133px;top:34px;background:#8d6d2e"></i><u style="left:1487px;width:32px"></u><u style="left:1521px;width:32px"></u><u style="left:1555px;width:32px"></u><u style="left:1589px;width:31px"></u></div><div class="r e" style="top:1272px;height:104px;--c:#3a7cc0;--d:#1e4064"><i style="left:948px;width:672px"></i><b style="left:950px;width:132px"></b><i style="left:950px;width:132px;top:34px;background:#295786"></i><u style="left:950px;width:30px"></u><u style="left:982px;width:32px"></u><u style="left:1016px;width:33px"></u><u style="left:1051px;width:31px"></u><b style="left:1084px;width:133px"></b><i style="left:1084px;width:133px;top:34px;background:#295786"></i><u style="left:1084px;width:33px"></u><u style="left:1119px;width:31px"></u><u style="left:1152px;width:31px"></u><u style="left:1185px;width:32px"></u><b style="left:1219px;width:131px"></b><i style="left:1219px;width:131px;top:34px;background:#295786"></i><u style="left:1219px;width:32px"></u><u style="left:1253px;width:31px"></u><u style="left:1286px;width:31px"></u><u style="left:1319px;width:31px"></u><b style="left:1352px;width:133px"></b><i style="left:1352px;width:133px;top:34px;background:#295786"></i><u style="left:1352px;width:32px"></u><u style="left:1386px;width:31px"></u><u style="left:1419px;width:32px"></u><u style="left:1453px;width:32px"></u><b style="left:1487px;width:133px"></b><i style="left:1487px;width:133px;top:34px;background:#295786"></i><u style="left:1487px;width:32px"></u><u style="left:1521px;width:32px"></u><u style="left:1555px;width:32px"></u><u style="left:1589px;width:31px"></u><i style="left:1754px;width:672px"></i><b style="left:1756px;width:132px"></b><i style="left:1756px;width:132px;top:34px;background:#295786"></i><u style="left:1756px;width:32px"></u><u style="left:1790px;width:31px"></u><u style="left:1823px;width:32px"></u><u style="left:1857px;width:31px"></u><b style="left:1890px;width:133px"></b><i style="left:1890px;width:133px;top:34px;background:#295786"></i><u style="left:1890px;width:32px"></u><u style="left:1924px;width:31px"></u><u style="left:1957px;width:32px"></u><u style="left:1991px;width:32px"></u><b style="left:2025px;width:133px"></b><i style="left:2025px;width:133px;top:34px;background:#295786"></i><u style="left:2025px;width:32px"></u><u style="left:2059px;width:31px"></u><u style="left:2092px;width:32px"></u><u style="left:2126px;width:32px"></u><b style="left:2160px;width:132px"></b><i style="left:2160px;width:132px;top:34px;background:#295786"></i><u style="left:2160px;width:32px"></u><u style="left:2194px;width:31px"></u><u style="left:2227px;width:32px"></u><u style="left:2261px;width:31px"></u><b style="left:2294px;width:132px"></b><i style="left:2294px;width:132px;top:34px;background:#295786"></i><u style="left:2294px;width:32px"></u><u style="left:2328px;width:31px"></u><u style="left:2361px;width:32px"></u><u style="left:2395px;width:31px"></u></div><div class="r" style="top:1380px;height:34px;--c:#b07cc4;--d:#5c4066"><i style="left:1485px;width:135px"></i><b style="left:1487px;width:133px"></b></div><div class="r" style="top:1418px;height:34px;--c:#d55c9e;--d:#6f3052"><i style="left:2126px;width:74px"></i><b class="f" style="left:2128px;width:72px">KSHMR</b></div><div class="r" style="top:1456px;height:34px;--c:#c870e0;--d:#683a74"><i style="left:1620px;width:67px"></i><b class="f" style="left:1622px;width:65px">128_F</b></div><div class="r" style="top:1494px;height:34px;--c:#9ac6f9;--d:#506781"><i style="left:6px;width:2586px"></i><b class="f" style="left:8px;width:51px">ESM</b><b class="f" style="left:61px;width:51px">ESM</b><b class="f" style="left:114px;width:50px">ESM</b><b class="f" style="left:166px;width:51px">ESM</b><b class="f" style="left:219px;width:51px">ESM</b><b class="f" style="left:272px;width:51px">ESM</b><b class="f" style="left:325px;width:51px">ESM</b><b class="f" style="left:378px;width:50px">ESM</b><b class="f" style="left:430px;width:51px">ESM</b><b class="f" style="left:483px;width:51px">ESM</b><b class="f" style="left:536px;width:51px">ESM</b><b class="f" style="left:589px;width:51px">ESM</b><b class="f" style="left:642px;width:50px">ESM</b><b class="f" style="left:694px;width:51px">ESM</b><b class="f" style="left:747px;width:51px">ESM</b><b class="f" style="left:800px;width:51px">ESM</b><b class="f" style="left:853px;width:51px">ESM</b><b class="f" style="left:906px;width:50px">ESM</b><b class="f" style="left:958px;width:51px">ESM</b><b class="f" style="left:1011px;width:51px">ESM</b><b class="f" style="left:1064px;width:51px">ESM</b><b class="f" style="left:1117px;width:51px">ESM</b><b class="f" style="left:1170px;width:50px">ESM</b><b class="f" style="left:1222px;width:51px">ESM</b><b class="f" style="left:1275px;width:51px">ESM</b><b class="f" style="left:1328px;width:51px">ESM</b><b class="f" style="left:1381px;width:51px">ESM</b><b class="f" style="left:1434px;width:50px">ESM</b><b class="f" style="left:1486px;width:51px">ESM</b><b class="f" style="left:1539px;width:51px">ESM</b><b class="f" style="left:1592px;width:51px">ESM</b><b class="f" style="left:1645px;width:51px">ESM</b><b class="f" style="left:1698px;width:50px">ESM</b><b class="f" style="left:1750px;width:51px">ESM</b><b class="f" style="left:1803px;width:51px">ESM</b><b class="f" style="left:1856px;width:51px">ESM</b><b class="f" style="left:1909px;width:51px">ESM</b><b class="f" style="left:1962px;width:50px">ESM</b><b class="f" style="left:2014px;width:51px">ESM</b><b class="f" style="left:2067px;width:51px">ESM</b><b class="f" style="left:2120px;width:51px">ESM</b><b class="f" style="left:2173px;width:51px">ESM</b><b class="f" style="left:2226px;width:50px">ESM</b><b class="f" style="left:2278px;width:51px">ESM</b><b class="f" style="left:2331px;width:51px">ESM</b><b class="f" style="left:2384px;width:51px">ESM</b><b class="f" style="left:2437px;width:51px">ESM</b><b class="f" style="left:2490px;width:50px">ESM</b><b class="f" style="left:2542px;width:50px">ESM</b></div><svg width="2614" height="1638" shape-rendering="crispEdges"><path fill="#767676" d="M14 206h2v6h-2zM31 206h2v6h-2zM11 242h3v6h-3zM20 242h4v6h-4zM27 242h2v6h-2zM30 242h2v6h-2zM36 242h2v6h-2zM6 314h2v6h-2zM14 308h2v6h-2zM16 314h4v6h-4zM23 314h4v6h-4zM32 308h2v6h-2zM32 314h6v6h-6zM48 206h2v6h-2zM65 206h2v6h-2zM44 242h2v6h-2zM49 242h4v6h-4zM58 242h3v6h-3zM66 242h6v6h-6zM40 314h2v6h-2zM48 308h2v6h-2zM50 314h4v6h-4zM57 314h4v6h-4zM66 308h2v6h-2zM66 314h6v6h-6zM83 206h2v6h-2zM100 206h2v6h-2zM80 242h3v6h-3zM89 242h4v6h-4zM96 242h2v6h-2zM99 242h2v6h-2zM105 242h2v6h-2zM76 314h4v6h-4zM85 308h2v6h-2zM87 314h4v6h-4zM94 314h2v6h-2zM102 308h2v6h-2zM104 314h2v6h-2zM116 206h2v6h-2zM133 206h2v6h-2zM112 242h2v6h-2zM117 242h4v6h-4zM126 242h3v6h-3zM134 242h6v6h-6zM108 314h2v6h-2zM116 308h2v6h-2zM118 314h4v6h-4zM125 314h4v6h-4zM134 308h2v6h-2zM134 314h6v6h-6z"/><path fill="#1e1a1e" d="M283 206h2v6h-2zM300 206h2v6h-2zM280 242h3v6h-3zM289 242h4v6h-4zM296 242h2v6h-2zM299 242h2v6h-2zM305 242h2v6h-2zM275 314h4v6h-4zM285 308h2v6h-2zM287 314h4v6h-4zM294 314h2v6h-2zM303 308h2v6h-2zM303 314h4v6h-4zM317 206h2v6h-2zM334 206h2v6h-2zM313 242h2v6h-2zM318 242h4v6h-4zM327 242h3v6h-3zM335 242h6v6h-6zM309 314h2v6h-2zM317 308h2v6h-2zM319 314h4v6h-4zM326 314h4v6h-4zM335 308h2v6h-2zM335 314h6v6h-6zM351 206h2v6h-2zM368 206h2v6h-2zM346 242h6v6h-6zM358 242h3v6h-3zM364 242h4v6h-4zM374 242h2v6h-2zM344 314h4v6h-4zM353 308h2v6h-2zM355 314h4v6h-4zM362 314h2v6h-2zM370 308h2v6h-2zM372 314h2v6h-2zM384 206h2v6h-2zM401 206h2v6h-2zM377 242h4v6h-4zM383 242h2v6h-2zM389 242h6v6h-6zM399 242h4v6h-4zM405 242h2v6h-2zM377 314h4v6h-4zM386 308h2v6h-2zM388 314h4v6h-4zM395 314h2v6h-2zM403 308h2v6h-2zM405 314h2v6h-2zM418 206h2v6h-2zM435 206h2v6h-2zM415 242h3v6h-3zM424 242h4v6h-4zM431 242h2v6h-2zM434 242h2v6h-2zM440 242h2v6h-2zM411 314h4v6h-4zM420 308h2v6h-2zM422 314h4v6h-4zM429 314h2v6h-2zM437 308h2v6h-2zM439 314h2v6h-2zM452 206h2v6h-2zM469 206h2v6h-2zM445 242h4v6h-4zM451 242h2v6h-2zM457 242h6v6h-6zM467 242h4v6h-4zM473 242h2v6h-2zM444 314h4v6h-4zM454 308h2v6h-2zM456 314h4v6h-4zM463 314h2v6h-2zM472 308h2v6h-2zM472 314h4v6h-4zM485 206h2v6h-2zM502 206h2v6h-2zM482 242h3v6h-3zM491 242h4v6h-4zM498 242h2v6h-2zM501 242h2v6h-2zM507 242h2v6h-2zM478 314h4v6h-4zM487 308h2v6h-2zM489 314h4v6h-4zM496 314h2v6h-2zM504 308h2v6h-2zM506 314h2v6h-2zM519 206h2v6h-2zM536 206h2v6h-2zM516 242h3v6h-3zM525 242h4v6h-4zM532 242h2v6h-2zM535 242h2v6h-2zM541 242h2v6h-2zM512 314h4v6h-4zM521 308h2v6h-2zM523 314h4v6h-4zM530 314h2v6h-2zM538 308h2v6h-2zM540 314h2v6h-2zM553 206h2v6h-2zM570 206h2v6h-2zM546 242h4v6h-4zM552 242h2v6h-2zM558 242h6v6h-6zM568 242h4v6h-4zM574 242h2v6h-2zM545 314h2v6h-2zM553 308h2v6h-2zM555 314h4v6h-4zM562 314h4v6h-4zM571 308h2v6h-2zM571 314h6v6h-6zM587 206h2v6h-2zM604 206h2v6h-2zM583 242h2v6h-2zM588 242h4v6h-4zM597 242h3v6h-3zM605 242h6v6h-6zM580 314h4v6h-4zM589 308h2v6h-2zM591 314h4v6h-4zM598 314h2v6h-2zM606 308h2v6h-2zM608 314h2v6h-2zM621 206h2v6h-2zM638 206h2v6h-2zM614 242h4v6h-4zM620 242h2v6h-2zM626 242h6v6h-6zM636 242h4v6h-4zM642 242h2v6h-2zM614 314h4v6h-4zM623 308h2v6h-2zM625 314h4v6h-4zM632 314h2v6h-2zM640 308h2v6h-2zM642 314h2v6h-2zM653 206h2v6h-2zM670 206h2v6h-2zM649 242h2v6h-2zM654 242h4v6h-4zM663 242h3v6h-3zM671 242h6v6h-6zM646 314h4v6h-4zM655 308h2v6h-2zM657 314h4v6h-4zM664 314h2v6h-2zM672 308h2v6h-2zM674 314h2v6h-2zM687 206h2v6h-2zM704 206h2v6h-2zM683 242h2v6h-2zM688 242h4v6h-4zM697 242h3v6h-3zM705 242h6v6h-6zM679 314h2v6h-2zM687 308h2v6h-2zM689 314h4v6h-4zM696 314h4v6h-4zM705 308h2v6h-2zM705 314h6v6h-6zM720 206h2v6h-2zM737 206h2v6h-2zM717 242h3v6h-3zM726 242h4v6h-4zM733 242h2v6h-2zM736 242h2v6h-2zM742 242h2v6h-2zM713 314h4v6h-4zM722 308h2v6h-2zM724 314h4v6h-4zM731 314h2v6h-2zM739 308h2v6h-2zM741 314h2v6h-2zM754 206h2v6h-2zM771 206h2v6h-2zM747 242h4v6h-4zM753 242h2v6h-2zM759 242h6v6h-6zM769 242h4v6h-4zM775 242h2v6h-2zM746 314h4v6h-4zM756 308h2v6h-2zM758 314h4v6h-4zM765 314h2v6h-2zM774 308h2v6h-2zM774 314h4v6h-4zM787 206h2v6h-2zM804 206h2v6h-2zM782 242h6v6h-6zM794 242h3v6h-3zM800 242h4v6h-4zM810 242h2v6h-2zM779 314h4v6h-4zM789 308h2v6h-2zM791 314h4v6h-4zM798 314h2v6h-2zM807 308h2v6h-2zM807 314h4v6h-4zM821 206h2v6h-2zM838 206h2v6h-2zM816 242h6v6h-6zM828 242h3v6h-3zM834 242h4v6h-4zM844 242h2v6h-2zM814 314h4v6h-4zM823 308h2v6h-2zM825 314h4v6h-4zM832 314h2v6h-2zM840 308h2v6h-2zM842 314h2v6h-2zM855 206h2v6h-2zM872 206h2v6h-2zM851 242h2v6h-2zM856 242h4v6h-4zM865 242h3v6h-3zM873 242h6v6h-6zM847 314h2v6h-2zM855 308h2v6h-2zM857 314h4v6h-4zM864 314h4v6h-4zM873 308h2v6h-2zM873 314h6v6h-6zM888 206h2v6h-2zM905 206h2v6h-2zM881 242h4v6h-4zM887 242h2v6h-2zM893 242h6v6h-6zM903 242h4v6h-4zM909 242h2v6h-2zM880 314h2v6h-2zM888 308h2v6h-2zM890 314h4v6h-4zM897 314h4v6h-4zM906 308h2v6h-2zM906 314h6v6h-6zM922 206h2v6h-2zM939 206h2v6h-2zM917 242h6v6h-6zM929 242h3v6h-3zM935 242h4v6h-4zM945 242h2v6h-2zM915 314h4v6h-4zM924 308h2v6h-2zM926 314h4v6h-4zM933 314h2v6h-2zM941 308h2v6h-2zM943 314h2v6h-2zM956 206h2v6h-2zM973 206h2v6h-2zM952 242h2v6h-2zM957 242h4v6h-4zM966 242h3v6h-3zM974 242h6v6h-6zM949 314h4v6h-4zM958 308h2v6h-2zM960 314h4v6h-4zM967 314h2v6h-2zM975 308h2v6h-2zM977 314h2v6h-2zM988 206h2v6h-2zM1005 206h2v6h-2zM985 242h3v6h-3zM994 242h4v6h-4zM1001 242h2v6h-2zM1004 242h2v6h-2zM1010 242h2v6h-2zM981 314h4v6h-4zM990 308h2v6h-2zM992 314h4v6h-4zM999 314h2v6h-2zM1007 308h2v6h-2zM1009 314h2v6h-2zM1022 206h2v6h-2zM1039 206h2v6h-2zM1015 242h4v6h-4zM1021 242h2v6h-2zM1027 242h6v6h-6zM1037 242h4v6h-4zM1043 242h2v6h-2zM1014 314h4v6h-4zM1024 308h2v6h-2zM1026 314h4v6h-4zM1033 314h2v6h-2zM1042 308h2v6h-2zM1042 314h4v6h-4zM1057 206h2v6h-2zM1074 206h2v6h-2zM1052 242h6v6h-6zM1064 242h3v6h-3zM1070 242h4v6h-4zM1080 242h2v6h-2zM1050 314h4v6h-4zM1059 308h2v6h-2zM1061 314h4v6h-4zM1068 314h2v6h-2zM1076 308h2v6h-2zM1078 314h2v6h-2zM1090 206h2v6h-2zM1107 206h2v6h-2zM1087 242h3v6h-3zM1096 242h4v6h-4zM1103 242h2v6h-2zM1106 242h2v6h-2zM1112 242h2v6h-2zM1082 314h4v6h-4zM1092 308h2v6h-2zM1094 314h4v6h-4zM1101 314h2v6h-2zM1110 308h2v6h-2zM1110 314h4v6h-4zM1125 206h2v6h-2zM1142 206h2v6h-2zM1121 242h2v6h-2zM1126 242h4v6h-4zM1135 242h3v6h-3zM1143 242h6v6h-6zM1117 314h4v6h-4zM1127 308h2v6h-2zM1129 314h4v6h-4zM1136 314h2v6h-2zM1145 308h2v6h-2zM1145 314h4v6h-4zM1158 206h2v6h-2zM1175 206h2v6h-2zM1154 242h2v6h-2zM1159 242h4v6h-4zM1168 242h3v6h-3zM1176 242h6v6h-6zM1150 314h4v6h-4zM1160 308h2v6h-2zM1162 314h4v6h-4zM1169 314h2v6h-2zM1178 308h2v6h-2zM1178 314h4v6h-4zM1191 206h2v6h-2zM1208 206h2v6h-2zM1184 242h4v6h-4zM1190 242h2v6h-2zM1196 242h6v6h-6zM1206 242h4v6h-4zM1212 242h2v6h-2zM1184 314h4v6h-4zM1193 308h2v6h-2zM1195 314h4v6h-4zM1202 314h2v6h-2zM1210 308h2v6h-2zM1212 314h2v6h-2zM1225 206h2v6h-2zM1242 206h2v6h-2zM1220 242h6v6h-6zM1232 242h3v6h-3zM1238 242h4v6h-4zM1248 242h2v6h-2zM1217 314h4v6h-4zM1227 308h2v6h-2zM1229 314h4v6h-4zM1236 314h2v6h-2zM1245 308h2v6h-2zM1245 314h4v6h-4zM1259 206h2v6h-2zM1276 206h2v6h-2zM1252 242h4v6h-4zM1258 242h2v6h-2zM1264 242h6v6h-6zM1274 242h4v6h-4zM1280 242h2v6h-2zM1251 314h2v6h-2zM1259 308h2v6h-2zM1261 314h4v6h-4zM1268 314h4v6h-4zM1277 308h2v6h-2zM1277 314h6v6h-6zM1292 206h2v6h-2zM1309 206h2v6h-2zM1288 242h2v6h-2zM1293 242h4v6h-4zM1302 242h3v6h-3zM1310 242h6v6h-6zM1284 314h4v6h-4zM1294 308h2v6h-2zM1296 314h4v6h-4zM1303 314h2v6h-2zM1312 308h2v6h-2zM1312 314h4v6h-4zM1325 206h2v6h-2zM1342 206h2v6h-2zM1321 242h2v6h-2zM1326 242h4v6h-4zM1335 242h3v6h-3zM1343 242h6v6h-6zM1317 314h2v6h-2zM1325 308h2v6h-2zM1327 314h4v6h-4zM1334 314h4v6h-4zM1343 308h2v6h-2zM1343 314h6v6h-6zM1358 206h2v6h-2zM1375 206h2v6h-2zM1355 242h3v6h-3zM1364 242h4v6h-4zM1371 242h2v6h-2zM1374 242h2v6h-2zM1380 242h2v6h-2zM1350 314h2v6h-2zM1358 308h2v6h-2zM1360 314h4v6h-4zM1367 314h4v6h-4zM1376 308h2v6h-2zM1376 314h6v6h-6zM1392 206h2v6h-2zM1409 206h2v6h-2zM1388 242h2v6h-2zM1393 242h4v6h-4zM1402 242h3v6h-3zM1410 242h6v6h-6zM1384 314h2v6h-2zM1392 308h2v6h-2zM1394 314h4v6h-4zM1401 314h4v6h-4zM1410 308h2v6h-2zM1410 314h6v6h-6zM1425 206h2v6h-2zM1442 206h2v6h-2zM1421 242h2v6h-2zM1426 242h4v6h-4zM1435 242h3v6h-3zM1443 242h6v6h-6zM1418 314h4v6h-4zM1427 308h2v6h-2zM1429 314h4v6h-4zM1436 314h2v6h-2zM1444 308h2v6h-2zM1446 314h2v6h-2zM1459 206h2v6h-2zM1476 206h2v6h-2zM1454 242h6v6h-6zM1466 242h3v6h-3zM1472 242h4v6h-4zM1482 242h2v6h-2zM1451 314h4v6h-4zM1461 308h2v6h-2zM1463 314h4v6h-4zM1470 314h2v6h-2zM1479 308h2v6h-2zM1479 314h4v6h-4zM1493 206h2v6h-2zM1510 206h2v6h-2zM1486 242h4v6h-4zM1492 242h2v6h-2zM1498 242h6v6h-6zM1508 242h4v6h-4zM1514 242h2v6h-2zM1485 314h4v6h-4zM1495 308h2v6h-2zM1497 314h4v6h-4zM1504 314h2v6h-2zM1513 308h2v6h-2zM1513 314h4v6h-4zM1527 206h2v6h-2zM1544 206h2v6h-2zM1522 242h6v6h-6zM1534 242h3v6h-3zM1540 242h4v6h-4zM1550 242h2v6h-2zM1520 314h4v6h-4zM1529 308h2v6h-2zM1531 314h4v6h-4zM1538 314h2v6h-2zM1546 308h2v6h-2zM1548 314h2v6h-2zM1561 206h2v6h-2zM1578 206h2v6h-2zM1558 242h3v6h-3zM1567 242h4v6h-4zM1574 242h2v6h-2zM1577 242h2v6h-2zM1583 242h2v6h-2zM1553 314h2v6h-2zM1561 308h2v6h-2zM1563 314h4v6h-4zM1570 314h4v6h-4zM1579 308h2v6h-2zM1579 314h6v6h-6zM1595 206h2v6h-2zM1612 206h2v6h-2zM1591 242h2v6h-2zM1596 242h4v6h-4zM1605 242h3v6h-3zM1613 242h6v6h-6zM1587 314h2v6h-2zM1595 308h2v6h-2zM1597 314h4v6h-4zM1604 314h4v6h-4zM1613 308h2v6h-2zM1613 314h6v6h-6zM1628 206h2v6h-2zM1645 206h2v6h-2zM1623 242h6v6h-6zM1635 242h3v6h-3zM1641 242h4v6h-4zM1651 242h2v6h-2zM1621 314h4v6h-4zM1630 308h2v6h-2zM1632 314h4v6h-4zM1639 314h2v6h-2zM1647 308h2v6h-2zM1649 314h2v6h-2zM1662 206h2v6h-2zM1679 206h2v6h-2zM1659 242h3v6h-3zM1668 242h4v6h-4zM1675 242h2v6h-2zM1678 242h2v6h-2zM1684 242h2v6h-2zM1655 314h4v6h-4zM1664 308h2v6h-2zM1666 314h4v6h-4zM1673 314h2v6h-2zM1681 308h2v6h-2zM1683 314h2v6h-2zM1695 206h2v6h-2zM1712 206h2v6h-2zM1691 242h2v6h-2zM1696 242h4v6h-4zM1705 242h3v6h-3zM1713 242h6v6h-6zM1687 314h4v6h-4zM1697 308h2v6h-2zM1699 314h4v6h-4zM1706 314h2v6h-2zM1715 308h2v6h-2zM1715 314h4v6h-4zM1729 206h2v6h-2zM1746 206h2v6h-2zM1722 242h4v6h-4zM1728 242h2v6h-2zM1734 242h6v6h-6zM1744 242h4v6h-4zM1750 242h2v6h-2zM1721 314h2v6h-2zM1729 308h2v6h-2zM1731 314h4v6h-4zM1738 314h4v6h-4zM1747 308h2v6h-2zM1747 314h6v6h-6zM1762 206h2v6h-2zM1779 206h2v6h-2zM1757 242h6v6h-6zM1769 242h3v6h-3zM1775 242h4v6h-4zM1785 242h2v6h-2zM1754 314h2v6h-2zM1762 308h2v6h-2zM1764 314h4v6h-4zM1771 314h4v6h-4zM1780 308h2v6h-2zM1780 314h6v6h-6zM1796 206h2v6h-2zM1813 206h2v6h-2zM1789 242h4v6h-4zM1795 242h2v6h-2zM1801 242h6v6h-6zM1811 242h4v6h-4zM1817 242h2v6h-2zM1789 314h4v6h-4zM1798 308h2v6h-2zM1800 314h4v6h-4zM1807 314h2v6h-2zM1815 308h2v6h-2zM1817 314h2v6h-2zM1829 206h2v6h-2zM1846 206h2v6h-2zM1826 242h3v6h-3zM1835 242h4v6h-4zM1842 242h2v6h-2zM1845 242h2v6h-2zM1851 242h2v6h-2zM1822 314h4v6h-4zM1831 308h2v6h-2zM1833 314h4v6h-4zM1840 314h2v6h-2zM1848 308h2v6h-2zM1850 314h2v6h-2zM1863 206h2v6h-2zM1880 206h2v6h-2zM1858 242h6v6h-6zM1870 242h3v6h-3zM1876 242h4v6h-4zM1886 242h2v6h-2zM1856 314h4v6h-4zM1865 308h2v6h-2zM1867 314h4v6h-4zM1874 314h2v6h-2zM1882 308h2v6h-2zM1884 314h2v6h-2zM1896 206h2v6h-2zM1913 206h2v6h-2zM1892 242h2v6h-2zM1897 242h4v6h-4zM1906 242h3v6h-3zM1914 242h6v6h-6zM1888 314h4v6h-4zM1898 308h2v6h-2zM1900 314h4v6h-4zM1907 314h2v6h-2zM1916 308h2v6h-2zM1916 314h4v6h-4zM1930 206h2v6h-2zM1947 206h2v6h-2zM1927 242h3v6h-3zM1936 242h4v6h-4zM1943 242h2v6h-2zM1946 242h2v6h-2zM1952 242h2v6h-2zM1922 314h4v6h-4zM1932 308h2v6h-2zM1934 314h4v6h-4zM1941 314h2v6h-2zM1950 308h2v6h-2zM1950 314h4v6h-4zM1963 206h2v6h-2zM1980 206h2v6h-2zM1958 242h6v6h-6zM1970 242h3v6h-3zM1976 242h4v6h-4zM1986 242h2v6h-2zM1955 314h2v6h-2zM1963 308h2v6h-2zM1965 314h4v6h-4zM1972 314h4v6h-4zM1981 308h2v6h-2zM1981 314h6v6h-6zM1997 206h2v6h-2zM2014 206h2v6h-2zM1992 242h6v6h-6zM2004 242h3v6h-3zM2010 242h4v6h-4zM2020 242h2v6h-2zM1989 314h2v6h-2zM1997 308h2v6h-2zM1999 314h4v6h-4zM2006 314h4v6h-4zM2015 308h2v6h-2zM2015 314h6v6h-6zM2031 206h2v6h-2zM2048 206h2v6h-2zM2027 242h2v6h-2zM2032 242h4v6h-4zM2041 242h3v6h-3zM2049 242h6v6h-6zM2023 314h4v6h-4zM2033 308h2v6h-2zM2035 314h4v6h-4zM2042 314h2v6h-2zM2051 308h2v6h-2zM2051 314h4v6h-4zM2065 206h2v6h-2zM2082 206h2v6h-2zM2062 242h3v6h-3zM2071 242h4v6h-4zM2078 242h2v6h-2zM2081 242h2v6h-2zM2087 242h2v6h-2zM2058 314h4v6h-4zM2067 308h2v6h-2zM2069 314h4v6h-4zM2076 314h2v6h-2zM2084 308h2v6h-2zM2086 314h2v6h-2zM2098 206h2v6h-2zM2115 206h2v6h-2zM2091 242h4v6h-4zM2097 242h2v6h-2zM2103 242h6v6h-6zM2113 242h4v6h-4zM2119 242h2v6h-2zM2090 314h4v6h-4zM2100 308h2v6h-2zM2102 314h4v6h-4zM2109 314h2v6h-2zM2118 308h2v6h-2zM2118 314h4v6h-4zM2132 206h2v6h-2zM2149 206h2v6h-2zM2125 242h4v6h-4zM2131 242h2v6h-2zM2137 242h6v6h-6zM2147 242h4v6h-4zM2153 242h2v6h-2zM2124 314h2v6h-2zM2132 308h2v6h-2zM2134 314h4v6h-4zM2141 314h4v6h-4zM2150 308h2v6h-2zM2150 314h6v6h-6zM2166 206h2v6h-2zM2183 206h2v6h-2zM2159 242h4v6h-4zM2165 242h2v6h-2zM2171 242h6v6h-6zM2181 242h4v6h-4zM2187 242h2v6h-2zM2158 314h2v6h-2zM2166 308h2v6h-2zM2168 314h4v6h-4zM2175 314h4v6h-4zM2184 308h2v6h-2zM2184 314h6v6h-6zM2200 206h2v6h-2zM2217 206h2v6h-2zM2195 242h6v6h-6zM2207 242h3v6h-3zM2213 242h4v6h-4zM2223 242h2v6h-2zM2192 314h2v6h-2zM2200 308h2v6h-2zM2202 314h4v6h-4zM2209 314h4v6h-4zM2218 308h2v6h-2zM2218 314h6v6h-6zM2233 206h2v6h-2zM2250 206h2v6h-2zM2228 242h6v6h-6zM2240 242h3v6h-3zM2246 242h4v6h-4zM2256 242h2v6h-2zM2226 314h4v6h-4zM2235 308h2v6h-2zM2237 314h4v6h-4zM2244 314h2v6h-2zM2252 308h2v6h-2zM2254 314h2v6h-2zM2267 206h2v6h-2zM2284 206h2v6h-2zM2260 242h4v6h-4zM2266 242h2v6h-2zM2272 242h6v6h-6zM2282 242h4v6h-4zM2288 242h2v6h-2zM2260 314h4v6h-4zM2269 308h2v6h-2zM2271 314h4v6h-4zM2278 314h2v6h-2zM2286 308h2v6h-2zM2288 314h2v6h-2zM2300 206h2v6h-2zM2317 206h2v6h-2zM2296 242h2v6h-2zM2301 242h4v6h-4zM2310 242h3v6h-3zM2318 242h6v6h-6zM2292 314h4v6h-4zM2302 308h2v6h-2zM2304 314h4v6h-4zM2311 314h2v6h-2zM2320 308h2v6h-2zM2320 314h4v6h-4zM2334 206h2v6h-2zM2351 206h2v6h-2zM2331 242h3v6h-3zM2340 242h4v6h-4zM2347 242h2v6h-2zM2350 242h2v6h-2zM2356 242h2v6h-2zM2326 314h4v6h-4zM2336 308h2v6h-2zM2338 314h4v6h-4zM2345 314h2v6h-2zM2354 308h2v6h-2zM2354 314h4v6h-4zM2367 206h2v6h-2zM2384 206h2v6h-2zM2363 242h2v6h-2zM2368 242h4v6h-4zM2377 242h3v6h-3zM2385 242h6v6h-6zM2360 314h4v6h-4zM2369 308h2v6h-2zM2371 314h4v6h-4zM2378 314h2v6h-2zM2386 308h2v6h-2zM2388 314h2v6h-2zM2401 206h2v6h-2zM2418 206h2v6h-2zM2394 242h4v6h-4zM2400 242h2v6h-2zM2406 242h6v6h-6zM2416 242h4v6h-4zM2422 242h2v6h-2zM2393 314h2v6h-2zM2401 308h2v6h-2zM2403 314h4v6h-4zM2410 314h4v6h-4zM2419 308h2v6h-2zM2419 314h6v6h-6zM2434 206h2v6h-2zM2451 206h2v6h-2zM2431 242h3v6h-3zM2440 242h4v6h-4zM2447 242h2v6h-2zM2450 242h2v6h-2zM2456 242h2v6h-2zM2426 314h2v6h-2zM2434 308h2v6h-2zM2436 314h4v6h-4zM2443 314h4v6h-4zM2452 308h2v6h-2zM2452 314h6v6h-6zM2469 206h2v6h-2zM2486 206h2v6h-2zM2466 242h3v6h-3zM2475 242h4v6h-4zM2482 242h2v6h-2zM2485 242h2v6h-2zM2491 242h2v6h-2zM2461 314h2v6h-2zM2469 308h2v6h-2zM2471 314h4v6h-4zM2478 314h4v6h-4zM2487 308h2v6h-2zM2487 314h6v6h-6zM2503 206h2v6h-2zM2520 206h2v6h-2zM2496 242h4v6h-4zM2502 242h2v6h-2zM2508 242h6v6h-6zM2518 242h4v6h-4zM2524 242h2v6h-2zM2495 314h2v6h-2zM2503 308h2v6h-2zM2505 314h4v6h-4zM2512 314h4v6h-4zM2521 308h2v6h-2zM2521 314h6v6h-6zM2536 206h2v6h-2zM2553 206h2v6h-2zM2531 242h6v6h-6zM2543 242h3v6h-3zM2549 242h4v6h-4zM2528 314h2v6h-2zM2536 308h2v6h-2zM2538 314h4v6h-4zM2545 314h4v6h-4zM2554 308h2v6h-2zM2554 314h6v6h-6z"/><path fill="#221e18" d="M547 1242h124v16h-124zM1219 1242h123v16h-123zM1352 1242h125v16h-125zM1487 1242h125v16h-125z"/><path fill="#1a1614" d="M950 1330h2v20h-2zM956 1330h2v20h-2zM966 1330h2v20h-2zM972 1330h2v20h-2zM982 1330h2v20h-2zM988 1330h2v20h-2zM999 1330h2v20h-2zM1004 1330h2v20h-2zM1016 1330h2v20h-2zM1022 1330h2v20h-2zM1033 1330h2v20h-2zM1039 1330h2v20h-2zM1051 1330h2v20h-2zM1057 1330h2v20h-2zM1067 1330h2v20h-2zM1072 1330h2v20h-2zM1084 1330h2v20h-2zM1090 1330h2v20h-2zM1101 1330h2v20h-2zM1107 1330h2v20h-2zM1119 1330h2v20h-2zM1125 1330h2v20h-2zM1135 1330h2v20h-2zM1140 1330h2v20h-2zM1152 1330h2v20h-2zM1158 1330h2v20h-2zM1169 1330h2v20h-2zM1175 1330h2v20h-2zM1185 1330h2v20h-2zM1191 1330h2v20h-2zM1202 1330h2v20h-2zM1207 1330h2v20h-2zM1219 1330h2v20h-2zM1225 1330h2v20h-2zM1236 1330h2v20h-2zM1242 1330h2v20h-2zM1253 1330h2v20h-2zM1259 1330h2v20h-2zM1269 1330h2v20h-2zM1274 1330h2v20h-2zM1286 1330h2v20h-2zM1292 1330h2v20h-2zM1302 1330h2v20h-2zM1308 1330h2v20h-2zM1319 1330h2v20h-2zM1325 1330h2v20h-2zM1336 1330h2v20h-2zM1341 1330h2v20h-2zM1352 1330h2v20h-2zM1358 1330h2v20h-2zM1369 1330h2v20h-2zM1375 1330h2v20h-2zM1386 1330h2v20h-2zM1392 1330h2v20h-2zM1403 1330h2v20h-2zM1408 1330h2v20h-2zM1419 1330h2v20h-2zM1425 1330h2v20h-2zM1436 1330h2v20h-2zM1442 1330h2v20h-2zM1453 1330h2v20h-2zM1459 1330h2v20h-2zM1470 1330h2v20h-2zM1475 1330h2v20h-2zM1487 1330h2v20h-2zM1493 1330h2v20h-2zM1504 1330h2v20h-2zM1510 1330h2v20h-2zM1521 1330h2v20h-2zM1527 1330h2v20h-2zM1538 1330h2v20h-2zM1543 1330h2v20h-2zM1555 1330h2v20h-2zM1561 1330h2v20h-2zM1572 1330h2v20h-2zM1578 1330h2v20h-2zM1589 1330h2v20h-2zM1595 1330h2v20h-2zM1605 1330h2v20h-2zM1610 1330h2v20h-2zM1756 1330h2v20h-2zM1762 1330h2v20h-2zM1773 1330h2v20h-2zM1779 1330h2v20h-2zM1790 1330h2v20h-2zM1796 1330h2v20h-2zM1806 1330h2v20h-2zM1811 1330h2v20h-2zM1823 1330h2v20h-2zM1829 1330h2v20h-2zM1840 1330h2v20h-2zM1846 1330h2v20h-2zM1857 1330h2v20h-2zM1863 1330h2v20h-2zM1873 1330h2v20h-2zM1878 1330h2v20h-2zM1890 1330h2v20h-2zM1896 1330h2v20h-2zM1907 1330h2v20h-2zM1913 1330h2v20h-2zM1924 1330h2v20h-2zM1930 1330h2v20h-2zM1941 1330h2v20h-2zM1946 1330h2v20h-2zM1957 1330h2v20h-2zM1963 1330h2v20h-2zM1974 1330h2v20h-2zM1980 1330h2v20h-2zM1991 1330h2v20h-2zM1997 1330h2v20h-2zM2008 1330h2v20h-2zM2013 1330h2v20h-2zM2025 1330h2v20h-2zM2031 1330h2v20h-2zM2042 1330h2v20h-2zM2048 1330h2v20h-2zM2059 1330h2v20h-2zM2065 1330h2v20h-2zM2075 1330h2v20h-2zM2080 1330h2v20h-2zM2092 1330h2v20h-2zM2098 1330h2v20h-2zM2109 1330h2v20h-2zM2115 1330h2v20h-2zM2126 1330h2v20h-2zM2132 1330h2v20h-2zM2143 1330h2v20h-2zM2148 1330h2v20h-2zM2160 1330h2v20h-2zM2166 1330h2v20h-2zM2177 1330h2v20h-2zM2183 1330h2v20h-2zM2194 1330h2v20h-2zM2200 1330h2v20h-2zM2210 1330h2v20h-2zM2215 1330h2v20h-2zM2227 1330h2v20h-2zM2233 1330h2v20h-2zM2244 1330h2v20h-2zM2250 1330h2v20h-2zM2261 1330h2v20h-2zM2267 1330h2v20h-2zM2277 1330h2v20h-2zM2282 1330h2v20h-2zM2294 1330h2v20h-2zM2300 1330h2v20h-2zM2311 1330h2v20h-2zM2317 1330h2v20h-2zM2328 1330h2v20h-2zM2334 1330h2v20h-2zM2344 1330h2v20h-2zM2349 1330h2v20h-2zM2361 1330h2v20h-2zM2367 1330h2v20h-2zM2378 1330h2v20h-2zM2384 1330h2v20h-2zM2395 1330h2v20h-2zM2401 1330h2v20h-2zM2411 1330h2v20h-2zM2416 1330h2v20h-2z"/></svg><svg width="0" height="0"><defs><path id="wg4" d="M1.5 15.8 L2.5 12.6 L4.1 7.4 L5.1 9.8 L6.5 11.7 L8.1 13.1 L9.5 15.8 L9.8 16.0 L10.8 13.6 L12.4 9.5 L13.4 11.3 L14.8 12.8 L16.4 13.9 L17.8 16.0 L18.1 15.8 L19.1 12.6 L20.7 7.4 L21.7 9.8 L23.1 11.7 L24.7 13.1 L26.1 15.8 L26.4 16.0 L27.4 13.6 L29.0 9.5 L30.0 11.3 L31.4 12.8 L33.0 13.9 L34.4 16.0 L34.7 15.8 L35.7 12.6 L37.3 7.4 L38.3 9.8 L39.7 11.7 L41.3 13.1 L42.7 15.8 L43.0 16.0 L44.0 13.6 L45.6 9.5 L46.6 11.3 L48.0 12.8 L49.6 13.9 L51.0 16.0 L51.3 15.8 L52.3 12.6 L53.9 7.4 L54.9 9.8 L56.3 11.7 L57.9 13.1 L59.3 15.8 L59.6 16.0 L60.6 13.6 L62.2 9.5 L63.2 11.3 L64.6 12.8 L66.2 13.9 L67.6 16.0 L67.6 17.8 L66.2 19.9 L64.6 21.0 L63.2 22.5 L62.2 24.3 L60.6 20.2 L59.6 17.8 L59.3 18.0 L57.9 20.7 L56.3 22.1 L54.9 24.0 L53.9 26.4 L52.3 21.2 L51.3 18.0 L51.0 17.8 L49.6 19.9 L48.0 21.0 L46.6 22.5 L45.6 24.3 L44.0 20.2 L43.0 17.8 L42.7 18.0 L41.3 20.7 L39.7 22.1 L38.3 24.0 L37.3 26.4 L35.7 21.2 L34.7 18.0 L34.4 17.8 L33.0 19.9 L31.4 21.0 L30.0 22.5 L29.0 24.3 L27.4 20.2 L26.4 17.8 L26.1 18.0 L24.7 20.7 L23.1 22.1 L21.7 24.0 L20.7 26.4 L19.1 21.2 L18.1 18.0 L17.8 17.8 L16.4 19.9 L14.8 21.0 L13.4 22.5 L12.4 24.3 L10.8 20.2 L9.8 17.8 L9.5 18.0 L8.1 20.7 L6.5 22.1 L5.1 24.0 L4.1 26.4 L2.5 21.2 L1.5 18.0ZM1.5 51.1 L2.5 47.4 L4.1 41.4 L5.1 44.1 L6.5 46.3 L8.1 48.0 L9.5 51.1 L9.8 51.4 L10.8 48.5 L12.4 43.8 L13.4 46.0 L14.8 47.7 L16.4 49.0 L17.8 51.4 L18.1 51.1 L19.1 47.4 L20.7 41.4 L21.7 44.1 L23.1 46.3 L24.7 48.0 L26.1 51.1 L26.4 51.4 L27.4 48.5 L29.0 43.8 L30.0 46.0 L31.4 47.7 L33.0 49.0 L34.4 51.4 L34.7 51.1 L35.7 47.4 L37.3 41.4 L38.3 44.1 L39.7 46.3 L41.3 48.0 L42.7 51.1 L43.0 51.4 L44.0 48.5 L45.6 43.8 L46.6 46.0 L48.0 47.7 L49.6 49.0 L51.0 51.4 L51.3 51.1 L52.3 47.4 L53.9 41.4 L54.9 44.1 L56.3 46.3 L57.9 48.0 L59.3 51.1 L59.6 51.4 L60.6 48.5 L62.2 43.8 L63.2 46.0 L64.6 47.7 L66.2 49.0 L67.6 51.4 L67.6 53.4 L66.2 55.8 L64.6 57.1 L63.2 58.8 L62.2 61.0 L60.6 56.3 L59.6 53.4 L59.3 53.7 L57.9 56.8 L56.3 58.5 L54.9 60.6 L53.9 63.4 L52.3 57.4 L51.3 53.7 L51.0 53.4 L49.6 55.8 L48.0 57.1 L46.6 58.8 L45.6 61.0 L44.0 56.3 L43.0 53.4 L42.7 53.7 L41.3 56.8 L39.7 58.5 L38.3 60.6 L37.3 63.4 L35.7 57.4 L34.7 53.7 L34.4 53.4 L33.0 55.8 L31.4 57.1 L30.0 58.8 L29.0 61.0 L27.4 56.3 L26.4 53.4 L26.1 53.7 L24.7 56.8 L23.1 58.5 L21.7 60.6 L20.7 63.4 L19.1 57.4 L18.1 53.7 L17.8 53.4 L16.4 55.8 L14.8 57.1 L13.4 58.8 L12.4 61.0 L10.8 56.3 L9.8 53.4 L9.5 53.7 L8.1 56.8 L6.5 58.5 L5.1 60.6 L4.1 63.4 L2.5 57.4 L1.5 53.7Z" fill="#172226"/><path id="wtr" d="M1.0 8.7 L3.0 8.7 L9.0 8.0 L12.0 4.5 L13.3 7.9 L19.0 8.5 L22.0 7.5 L24.6 3.5 L26.0 7.5 L27.0 4.5 L29.3 7.0 L32.0 7.5 L34.9 2.5 L37.0 10.5 L39.0 11.0 L48.0 11.5 L56.0 11.7 L64.0 11.9 L65.7 14.0 L67.0 15.9 L67.0 17.1 L65.7 19.0 L64.0 20.3 L56.0 20.5 L48.0 20.5 L39.0 21.5 L37.0 21.5 L34.9 25.3 L32.0 22.5 L29.3 22.0 L27.0 23.0 L26.0 22.5 L24.6 23.5 L22.0 22.5 L19.0 22.0 L13.3 22.5 L12.0 23.7 L9.0 22.5 L3.0 22.9 L1.0 22.9ZM1.0 44.7 L3.0 44.7 L9.0 44.0 L12.0 40.5 L13.3 43.9 L19.0 44.5 L22.0 43.5 L24.6 39.5 L26.0 43.5 L27.0 40.5 L29.3 43.0 L32.0 43.5 L34.9 38.5 L37.0 46.5 L39.0 47.0 L48.0 47.5 L56.0 47.7 L64.0 47.9 L65.7 50.0 L67.0 51.9 L67.0 53.1 L65.7 55.0 L64.0 56.3 L56.0 56.5 L48.0 56.5 L39.0 57.5 L37.0 57.5 L34.9 61.3 L32.0 58.5 L29.3 58.0 L27.0 59.0 L26.0 58.5 L24.6 59.5 L22.0 58.5 L19.0 58.0 L13.3 58.5 L12.0 59.7 L9.0 58.5 L3.0 58.9 L1.0 58.9Z" fill="#1e1a24"/></defs></svg><div class="hd" style="top:122px;height:34px;background:#d55c9e"><svg style="left:6px;top:4px" width="26" height="26"><circle cx="13" cy="13" r="11.8" fill="none" stroke="rgba(0,0,0,.8)" stroke-width="2"/><path d="M9.5 6.8L19 13L9.5 19.2Z" fill="rgba(0,0,0,.8)"/></svg><div class="hn">Kick</div></div><div class="mt" style="top:122px;height:34px"><i class="mb" style="left:8px;top:4px;height:2px"></i><i class="mb" style="left:8px;top:8px;bottom:auto;height:22px"></i><i class="mb" style="left:16px;top:4px;height:2px"></i><i class="mb" style="left:16px;top:8px;bottom:auto;height:22px"></i></div><div class="hd" style="top:160px;height:172px;background:#f09aa6"><svg style="left:6px;top:4px" width="26" height="26"><circle cx="13" cy="13" r="11.8" fill="none" stroke="rgba(0,0,0,.8)" stroke-width="2"/><path d="M7 10L19 10L13 18Z" fill="rgba(0,0,0,.8)"/></svg><div class="hn">Bass</div></div><div class="mt" style="top:160px;height:172px"><i class="mb" style="left:8px;top:4px;bottom:auto;height:16px"></i><i class="mb" style="left:8px;top:22px;bottom:auto;height:146px"></i><i class="mb" style="left:16px;top:4px;bottom:auto;height:16px"></i><i class="mb" style="left:16px;top:22px;bottom:auto;height:146px"></i></div><div class="hd" style="top:336px;height:34px;background:#6fe7fb"><svg style="left:6px;top:4px" width="26" height="26"><circle cx="13" cy="13" r="11.8" fill="none" stroke="rgba(0,0,0,.8)" stroke-width="2"/><path d="M9.5 6.8L19 13L9.5 19.2Z" fill="rgba(0,0,0,.8)"/></svg><div class="hn">Clap</div></div><div class="mt" style="top:336px;height:34px"><i class="mb" style="left:8px;top:4px;height:2px"></i><i class="mb" style="left:8px;top:8px;bottom:auto;height:22px"></i><i class="mb" style="left:16px;top:4px;height:2px"></i><i class="mb" style="left:16px;top:8px;bottom:auto;height:22px"></i></div><div class="hd" style="top:374px;height:34px;background:#6fe7fb"><svg style="left:6px;top:4px" width="26" height="26"><circle cx="13" cy="13" r="11.8" fill="none" stroke="rgba(0,0,0,.8)" stroke-width="2"/><path d="M9.5 6.8L19 13L9.5 19.2Z" fill="rgba(0,0,0,.8)"/></svg><div class="hn">Clap 2</div></div><div class="mt" style="top:374px;height:34px"><i class="mb" style="left:8px;top:4px;height:2px"></i><i class="mb" style="left:8px;top:8px;bottom:auto;height:22px"></i><i class="mb" style="left:16px;top:4px;height:2px"></i><i class="mb" style="left:16px;top:8px;bottom:auto;height:22px"></i></div><div class="hd" style="top:412px;height:34px;background:#98a7f8"><svg style="left:6px;top:4px" width="26" height="26"><circle cx="13" cy="13" r="11.8" fill="none" stroke="rgba(0,0,0,.8)" stroke-width="2"/><path d="M9.5 6.8L19 13L9.5 19.2Z" fill="rgba(0,0,0,.8)"/></svg><div class="hn">Open Hat</div></div><div class="mt" style="top:412px;height:34px"><i class="mb" style="left:8px;top:4px;height:2px"></i><i class="mb" style="left:8px;top:8px;bottom:auto;height:22px"></i><i class="mb" style="left:16px;top:4px;height:2px"></i><i class="mb" style="left:16px;top:8px;bottom:auto;height:22px"></i></div><div class="hd" style="top:450px;height:34px;background:#98a7f8"><svg style="left:6px;top:4px" width="26" height="26"><circle cx="13" cy="13" r="11.8" fill="none" stroke="rgba(0,0,0,.8)" stroke-width="2"/><path d="M9.5 6.8L19 13L9.5 19.2Z" fill="rgba(0,0,0,.8)"/></svg><div class="hn">Closed Hat</div></div><div class="mt" style="top:450px;height:34px"><i class="mb" style="left:8px;top:4px;height:2px"></i><i class="mb" style="left:8px;top:8px;bottom:auto;height:22px"></i><i class="mb" style="left:16px;top:4px;height:2px"></i><i class="mb" style="left:16px;top:8px;bottom:auto;height:22px"></i></div><div class="hd" style="top:488px;height:34px;background:#5f80dd"><svg style="left:6px;top:4px" width="26" height="26"><circle cx="13" cy="13" r="11.8" fill="none" stroke="rgba(0,0,0,.8)" stroke-width="2"/><path d="M9.5 6.8L19 13L9.5 19.2Z" fill="rgba(0,0,0,.8)"/></svg><div class="hn">Hat Shaker</div></div><div class="mt" style="top:488px;height:34px"><i class="mb" style="left:8px;top:4px;height:2px"></i><i class="mb" style="left:8px;top:8px;bottom:auto;height:22px"></i><i class="mb" style="left:16px;top:4px;height:2px"></i><i class="mb" style="left:16px;top:8px;bottom:auto;height:22px"></i></div><div class="hd" style="top:526px;height:34px;background:#c870e0"><svg style="left:6px;top:4px" width="26" height="26"><circle cx="13" cy="13" r="11.8" fill="none" stroke="rgba(0,0,0,.8)" stroke-width="2"/><path d="M9.5 6.8L19 13L9.5 19.2Z" fill="rgba(0,0,0,.8)"/></svg><div class="hn">Tambourine</div></div><div class="mt" style="top:526px;height:34px"><i class="mb" style="left:8px;top:4px;height:2px"></i><i class="mb" style="left:8px;top:8px;bottom:auto;height:22px"></i><i class="mb" style="left:16px;top:4px;height:2px"></i><i class="mb" style="left:16px;top:8px;bottom:auto;height:22px"></i></div><div class="hd" style="top:564px;height:34px;background:#d55c9e"><svg style="left:6px;top:4px" width="26" height="26"><circle cx="13" cy="13" r="11.8" fill="none" stroke="rgba(0,0,0,.8)" stroke-width="2"/><path d="M9.5 6.8L19 13L9.5 19.2Z" fill="rgba(0,0,0,.8)"/></svg><div class="hn">Top Loop</div></div><div class="mt" style="top:564px;height:34px"><i class="mb" style="left:8px;top:4px;height:2px"></i><i class="mb" style="left:8px;top:8px;bottom:auto;height:22px"></i><i class="mb" style="left:16px;top:4px;height:2px"></i><i class="mb" style="left:16px;top:8px;bottom:auto;height:22px"></i></div><div class="hd" style="top:602px;height:34px;background:#4aa0e8"><svg style="left:6px;top:4px" width="26" height="26"><circle cx="13" cy="13" r="11.8" fill="none" stroke="rgba(0,0,0,.8)" stroke-width="2"/><path d="M9.5 6.8L19 13L9.5 19.2Z" fill="rgba(0,0,0,.8)"/></svg><div class="hn">Top Loop 2</div></div><div class="mt" style="top:602px;height:34px"><i class="mb" style="left:8px;top:4px;height:2px"></i><i class="mb" style="left:8px;top:8px;bottom:auto;height:22px"></i><i class="mb" style="left:16px;top:4px;height:2px"></i><i class="mb" style="left:16px;top:8px;bottom:auto;height:22px"></i></div><div class="hd" style="top:640px;height:34px;background:#816cdc"><svg style="left:6px;top:4px" width="26" height="26"><circle cx="13" cy="13" r="11.8" fill="none" stroke="rgba(0,0,0,.8)" stroke-width="2"/><path d="M9.5 6.8L19 13L9.5 19.2Z" fill="rgba(0,0,0,.8)"/></svg><div class="hn">Percussion Lo</div></div><div class="mt" style="top:640px;height:34px"><i class="mb" style="left:8px;top:4px;height:2px"></i><i class="mb" style="left:8px;top:8px;bottom:auto;height:22px"></i><i class="mb" style="left:16px;top:4px;height:2px"></i><i class="mb" style="left:16px;top:8px;bottom:auto;height:22px"></i></div><div class="hd" style="top:678px;height:34px;background:#3a7cc0"><svg style="left:6px;top:4px" width="26" height="26"><circle cx="13" cy="13" r="11.8" fill="none" stroke="rgba(0,0,0,.8)" stroke-width="2"/><path d="M9.5 6.8L19 13L9.5 19.2Z" fill="rgba(0,0,0,.8)"/></svg><div class="hn">Percussion Lo</div></div><div class="mt" style="top:678px;height:34px"><i class="mb" style="left:8px;top:4px;height:2px"></i><i class="mb" style="left:8px;top:8px;bottom:auto;height:22px"></i><i class="mb" style="left:16px;top:4px;height:2px"></i><i class="mb" style="left:16px;top:8px;bottom:auto;height:22px"></i></div><div class="hd" style="top:716px;height:34px;background:#eb4bcf"><svg style="left:6px;top:4px" width="26" height="26"><circle cx="13" cy="13" r="11.8" fill="none" stroke="rgba(0,0,0,.8)" stroke-width="2"/><path d="M9.5 6.8L19 13L9.5 19.2Z" fill="rgba(0,0,0,.8)"/></svg><div class="hn">Snare Groove</div></div><div class="mt" style="top:716px;height:34px"><i class="mb" style="left:8px;top:4px;height:2px"></i><i class="mb" style="left:8px;top:8px;bottom:auto;height:22px"></i><i class="mb" style="left:16px;top:4px;height:2px"></i><i class="mb" style="left:16px;top:8px;bottom:auto;height:22px"></i></div><div class="hd" style="top:754px;height:34px;background:#c870e0"><svg style="left:6px;top:4px" width="26" height="26"><circle cx="13" cy="13" r="11.8" fill="none" stroke="rgba(0,0,0,.8)" stroke-width="2"/><path d="M9.5 6.8L19 13L9.5 19.2Z" fill="rgba(0,0,0,.8)"/></svg><div class="hn">Perc Groove</div></div><div class="mt" style="top:754px;height:34px"><i class="mb" style="left:8px;top:4px;height:2px"></i><i class="mb" style="left:8px;top:8px;bottom:auto;height:22px"></i><i class="mb" style="left:16px;top:4px;height:2px"></i><i class="mb" style="left:16px;top:8px;bottom:auto;height:22px"></i></div><div class="hd" style="top:792px;height:34px;background:#5f80dd"><svg style="left:6px;top:4px" width="26" height="26"><circle cx="13" cy="13" r="11.8" fill="none" stroke="rgba(0,0,0,.8)" stroke-width="2"/><path d="M9.5 6.8L19 13L9.5 19.2Z" fill="rgba(0,0,0,.8)"/></svg><div class="hn">Glitches</div></div><div class="mt" style="top:792px;height:34px"><i class="mb" style="left:8px;top:4px;height:2px"></i><i class="mb" style="left:8px;top:8px;bottom:auto;height:22px"></i><i class="mb" style="left:16px;top:4px;height:2px"></i><i class="mb" style="left:16px;top:8px;bottom:auto;height:22px"></i></div><div class="hd" style="top:830px;height:34px;background:#b07cc4"><svg style="left:6px;top:4px" width="26" height="26"><circle cx="13" cy="13" r="11.8" fill="none" stroke="rgba(0,0,0,.8)" stroke-width="2"/><path d="M9.5 6.8L19 13L9.5 19.2Z" fill="rgba(0,0,0,.8)"/></svg><div class="hn">Glitches 2</div></div><div class="mt" style="top:830px;height:34px"><i class="mb" style="left:8px;top:4px;height:2px"></i><i class="mb" style="left:8px;top:8px;bottom:auto;height:22px"></i><i class="mb" style="left:16px;top:4px;height:2px"></i><i class="mb" style="left:16px;top:8px;bottom:auto;height:22px"></i></div><div class="hd" style="top:868px;height:34px;background:#d55c9e"><svg style="left:6px;top:4px" width="26" height="26"><circle cx="13" cy="13" r="11.8" fill="none" stroke="rgba(0,0,0,.8)" stroke-width="2"/><path d="M9.5 6.8L19 13L9.5 19.2Z" fill="rgba(0,0,0,.8)"/></svg><div class="hn">Glitches 3</div></div><div class="mt" style="top:868px;height:34px"><i class="mb" style="left:8px;top:4px;height:2px"></i><i class="mb" style="left:8px;top:8px;bottom:auto;height:22px"></i><i class="mb" style="left:16px;top:4px;height:2px"></i><i class="mb" style="left:16px;top:8px;bottom:auto;height:22px"></i></div><div class="hd" style="top:906px;height:104px;background:#6fe7fb"><svg style="left:6px;top:4px" width="26" height="26"><circle cx="13" cy="13" r="11.8" fill="none" stroke="rgba(0,0,0,.8)" stroke-width="2"/><path d="M7 10L19 10L13 18Z" fill="rgba(0,0,0,.8)"/></svg><div class="hn">Glitches 4</div></div><div class="mt" style="top:906px;height:104px"><i class="mb" style="left:8px;top:4px;bottom:auto;height:16px"></i><i class="mb" style="left:8px;top:22px;bottom:auto;height:78px"></i><i class="mb" style="left:16px;top:4px;bottom:auto;height:16px"></i><i class="mb" style="left:16px;top:22px;bottom:auto;height:78px"></i></div><div class="hd" style="top:1014px;height:34px;background:#f5f18c"><svg style="left:6px;top:4px" width="26" height="26"><circle cx="13" cy="13" r="11.8" fill="none" stroke="rgba(0,0,0,.8)" stroke-width="2"/><path d="M9.5 6.8L19 13L9.5 19.2Z" fill="rgba(0,0,0,.8)"/></svg><div class="hn">Glitches 5</div></div><div class="mt" style="top:1014px;height:34px"><i class="mb" style="left:8px;top:4px;height:2px"></i><i class="mb" style="left:8px;top:8px;bottom:auto;height:22px"></i><i class="mb" style="left:16px;top:4px;height:2px"></i><i class="mb" style="left:16px;top:8px;bottom:auto;height:22px"></i></div><div class="hd" style="top:1052px;height:34px;background:#8ff7e2"><svg style="left:6px;top:4px" width="26" height="26"><circle cx="13" cy="13" r="11.8" fill="none" stroke="rgba(0,0,0,.8)" stroke-width="2"/><path d="M9.5 6.8L19 13L9.5 19.2Z" fill="rgba(0,0,0,.8)"/></svg><div class="hn">Vocal</div></div><div class="mt" style="top:1052px;height:34px"><i class="mb" style="left:8px;top:4px;height:2px"></i><i class="mb" style="left:8px;top:8px;bottom:auto;height:22px"></i><i class="mb" style="left:16px;top:4px;height:2px"></i><i class="mb" style="left:16px;top:8px;bottom:auto;height:22px"></i></div><div class="hd" style="top:1090px;height:104px;background:#816cdc"><svg style="left:6px;top:4px" width="26" height="26"><circle cx="13" cy="13" r="11.8" fill="none" stroke="rgba(0,0,0,.8)" stroke-width="2"/><path d="M7 10L19 10L13 18Z" fill="rgba(0,0,0,.8)"/></svg><div class="hn">Trumpet</div></div><div class="mt" style="top:1090px;height:104px"><i class="mb" style="left:8px;top:4px;bottom:auto;height:16px"></i><i class="mb" style="left:8px;top:22px;bottom:auto;height:78px"></i><i class="mb" style="left:16px;top:4px;bottom:auto;height:16px"></i><i class="mb" style="left:16px;top:22px;bottom:auto;height:78px"></i></div><div class="hd" style="top:1198px;height:70px;background:#c99c42"><svg style="left:6px;top:4px" width="26" height="26"><circle cx="13" cy="13" r="11.8" fill="none" stroke="rgba(0,0,0,.8)" stroke-width="2"/><path d="M7 10L19 10L13 18Z" fill="rgba(0,0,0,.8)"/></svg><div class="hn">Pad Break</div></div><div class="mt" style="top:1198px;height:70px"><i class="mb" style="left:8px;top:4px;bottom:auto;height:16px"></i><i class="mb" style="left:8px;top:22px;bottom:auto;height:44px"></i><i class="mb" style="left:16px;top:4px;bottom:auto;height:16px"></i><i class="mb" style="left:16px;top:22px;bottom:auto;height:44px"></i></div><div class="hd" style="top:1272px;height:104px;background:#3a7cc0"><svg style="left:6px;top:4px" width="26" height="26"><circle cx="13" cy="13" r="11.8" fill="none" stroke="rgba(0,0,0,.8)" stroke-width="2"/><path d="M7 10L19 10L13 18Z" fill="rgba(0,0,0,.8)"/></svg><div class="hn">Stab Line</div></div><div class="mt" style="top:1272px;height:104px"><i class="mb" style="left:8px;top:4px;bottom:auto;height:16px"></i><i class="mb" style="left:8px;top:22px;bottom:auto;height:78px"></i><i class="mb" style="left:16px;top:4px;bottom:auto;height:16px"></i><i class="mb" style="left:16px;top:22px;bottom:auto;height:78px"></i></div><div class="hd" style="top:1380px;height:34px;background:#b07cc4"><svg style="left:6px;top:4px" width="26" height="26"><circle cx="13" cy="13" r="11.8" fill="none" stroke="rgba(0,0,0,.8)" stroke-width="2"/><path d="M9.5 6.8L19 13L9.5 19.2Z" fill="rgba(0,0,0,.8)"/></svg><div class="hn">Snare Roll</div></div><div class="mt" style="top:1380px;height:34px"><i class="mb" style="left:8px;top:4px;height:2px"></i><i class="mb" style="left:8px;top:8px;bottom:auto;height:22px"></i><i class="mb" style="left:16px;top:4px;height:2px"></i><i class="mb" style="left:16px;top:8px;bottom:auto;height:22px"></i></div><div class="hd" style="top:1418px;height:34px;background:#d55c9e"><svg style="left:6px;top:4px" width="26" height="26"><circle cx="13" cy="13" r="11.8" fill="none" stroke="rgba(0,0,0,.8)" stroke-width="2"/><path d="M9.5 6.8L19 13L9.5 19.2Z" fill="rgba(0,0,0,.8)"/></svg><div class="hn">Sweep Transi</div></div><div class="mt" style="top:1418px;height:34px"><i class="mb" style="left:8px;top:4px;height:2px"></i><i class="mb" style="left:8px;top:8px;bottom:auto;height:22px"></i><i class="mb" style="left:16px;top:4px;height:2px"></i><i class="mb" style="left:16px;top:8px;bottom:auto;height:22px"></i></div><div class="hd" style="top:1456px;height:34px;background:#c870e0"><svg style="left:6px;top:4px" width="26" height="26"><circle cx="13" cy="13" r="11.8" fill="none" stroke="rgba(0,0,0,.8)" stroke-width="2"/><path d="M9.5 6.8L19 13L9.5 19.2Z" fill="rgba(0,0,0,.8)"/></svg><div class="hn">Downlifter</div></div><div class="mt" style="top:1456px;height:34px"><i class="mb" style="left:8px;top:4px;height:2px"></i><i class="mb" style="left:8px;top:8px;bottom:auto;height:22px"></i><i class="mb" style="left:16px;top:4px;height:2px"></i><i class="mb" style="left:16px;top:8px;bottom:auto;height:22px"></i></div><div class="hd" style="top:1494px;height:34px;background:#9ac6f9"><svg style="left:6px;top:4px" width="26" height="26"><circle cx="13" cy="13" r="11.8" fill="none" stroke="rgba(0,0,0,.8)" stroke-width="2"/><path d="M9.5 6.8L19 13L9.5 19.2Z" fill="rgba(0,0,0,.8)"/></svg><div class="hn">Vinyl Crackle</div></div><div class="mt" style="top:1494px;height:34px"><i class="mb" style="left:8px;top:4px;height:2px"></i><i class="mb" style="left:8px;top:8px;bottom:auto;height:22px"></i><i class="mb" style="left:16px;top:4px;height:2px"></i><i class="mb" style="left:16px;top:8px;bottom:auto;height:22px"></i></div><div style="left:2618px;top:1532px;width:232px;height:16px;background:#363636"></div><div class="hd" style="top:1554px;height:34px;background:#bde2ec"><svg style="left:6px;top:4px" width="26" height="26"><circle cx="13" cy="13" r="11.8" fill="none" stroke="rgba(0,0,0,.8)" stroke-width="2"/><path d="M9.5 6.8L19 13L9.5 19.2Z" fill="rgba(0,0,0,.8)"/></svg><div class="hn" style="left:51px">Main</div></div><div class="mt" style="top:1554px;height:34px;background:#454545"><i class="mb" style="left:8px;top:4px;height:2px"></i><i class="mb" style="left:8px;top:8px;bottom:auto;height:22px"></i><i class="mb" style="left:16px;top:4px;height:2px"></i><i class="mb" style="left:16px;top:8px;bottom:auto;height:22px"></i></div><div style="left:6px;top:1554px;width:2px;height:34px;background:#e8f4f8"></div><div style="left:2500px;top:1551px;width:108px;font-size:35px;font-weight:bold;color:#6a6a6a;text-align:right;line-height:40px;letter-spacing:1px">2/1</div><svg width="2614" height="122" shape-rendering="crispEdges"><g fill="#272727"><rect x="6" y="72" width="2" height="46"/><rect x="40" y="72" width="2" height="46"/><rect x="75" y="72" width="2" height="46"/><rect x="108" y="72" width="2" height="46"/><rect x="140" y="72" width="2" height="46"/><rect x="175" y="72" width="2" height="46"/><rect x="209" y="72" width="2" height="46"/><rect x="242" y="72" width="2" height="46"/><rect x="275" y="72" width="2" height="46"/><rect x="309" y="72" width="2" height="46"/><rect x="343" y="72" width="2" height="46"/><rect x="376" y="72" width="2" height="46"/><rect x="410" y="72" width="2" height="46"/><rect x="444" y="72" width="2" height="46"/><rect x="477" y="72" width="2" height="46"/><rect x="511" y="72" width="2" height="46"/><rect x="545" y="72" width="2" height="46"/><rect x="579" y="72" width="2" height="46"/><rect x="613" y="72" width="2" height="46"/><rect x="645" y="72" width="2" height="46"/><rect x="679" y="72" width="2" height="46"/><rect x="712" y="72" width="2" height="46"/><rect x="746" y="72" width="2" height="46"/><rect x="779" y="72" width="2" height="46"/><rect x="813" y="72" width="2" height="46"/><rect x="847" y="72" width="2" height="46"/><rect x="880" y="72" width="2" height="46"/><rect x="914" y="72" width="2" height="46"/><rect x="948" y="72" width="2" height="46"/><rect x="980" y="72" width="2" height="46"/><rect x="1014" y="72" width="2" height="46"/><rect x="1049" y="72" width="2" height="46"/><rect x="1082" y="72" width="2" height="46"/><rect x="1117" y="72" width="2" height="46"/><rect x="1150" y="72" width="2" height="46"/><rect x="1183" y="72" width="2" height="46"/><rect x="1217" y="72" width="2" height="46"/><rect x="1251" y="72" width="2" height="46"/><rect x="1284" y="72" width="2" height="46"/><rect x="1317" y="72" width="2" height="46"/><rect x="1350" y="72" width="2" height="46"/><rect x="1384" y="72" width="2" height="46"/><rect x="1417" y="72" width="2" height="46"/><rect x="1451" y="72" width="2" height="46"/><rect x="1485" y="72" width="2" height="46"/><rect x="1519" y="72" width="2" height="46"/><rect x="1553" y="72" width="2" height="46"/><rect x="1587" y="72" width="2" height="46"/><rect x="1620" y="72" width="2" height="46"/><rect x="1654" y="72" width="2" height="46"/><rect x="1687" y="72" width="2" height="46"/><rect x="1721" y="72" width="2" height="46"/><rect x="1754" y="72" width="2" height="46"/><rect x="1788" y="72" width="2" height="46"/><rect x="1821" y="72" width="2" height="46"/><rect x="1855" y="72" width="2" height="46"/><rect x="1888" y="72" width="2" height="46"/><rect x="1922" y="72" width="2" height="46"/><rect x="1955" y="72" width="2" height="46"/><rect x="1989" y="72" width="2" height="46"/><rect x="2023" y="72" width="2" height="46"/><rect x="2057" y="72" width="2" height="46"/><rect x="2090" y="72" width="2" height="46"/><rect x="2124" y="72" width="2" height="46"/><rect x="2158" y="72" width="2" height="46"/><rect x="2192" y="72" width="2" height="46"/><rect x="2225" y="72" width="2" height="46"/><rect x="2259" y="72" width="2" height="46"/><rect x="2292" y="72" width="2" height="46"/><rect x="2326" y="72" width="2" height="46"/><rect x="2359" y="72" width="2" height="46"/><rect x="2393" y="72" width="2" height="46"/><rect x="2426" y="72" width="2" height="46"/><rect x="2461" y="72" width="2" height="46"/><rect x="2495" y="72" width="2" height="46"/><rect x="2528" y="72" width="2" height="46"/><rect x="2560" y="72" width="2" height="46"/><rect x="2595" y="72" width="2" height="46"/></g><g fill="#8a8a8a"><rect x="6" y="60" width="2" height="12"/><rect x="6" y="60" width="4" height="2"/><rect x="140" y="60" width="2" height="12"/><rect x="140" y="60" width="4" height="2"/><rect x="275" y="60" width="2" height="12"/><rect x="275" y="60" width="4" height="2"/><rect x="410" y="60" width="2" height="12"/><rect x="410" y="60" width="4" height="2"/><rect x="545" y="60" width="2" height="12"/><rect x="545" y="60" width="4" height="2"/><rect x="679" y="60" width="2" height="12"/><rect x="679" y="60" width="4" height="2"/><rect x="813" y="60" width="2" height="12"/><rect x="813" y="60" width="4" height="2"/><rect x="948" y="60" width="2" height="12"/><rect x="948" y="60" width="4" height="2"/><rect x="1082" y="60" width="2" height="12"/><rect x="1082" y="60" width="4" height="2"/><rect x="1217" y="60" width="2" height="12"/><rect x="1217" y="60" width="4" height="2"/><rect x="1350" y="60" width="2" height="12"/><rect x="1350" y="60" width="4" height="2"/><rect x="1485" y="60" width="2" height="12"/><rect x="1485" y="60" width="4" height="2"/><rect x="1620" y="60" width="2" height="12"/><rect x="1620" y="60" width="4" height="2"/><rect x="1754" y="60" width="2" height="12"/><rect x="1754" y="60" width="4" height="2"/><rect x="1888" y="60" width="2" height="12"/><rect x="1888" y="60" width="4" height="2"/><rect x="2023" y="60" width="2" height="12"/><rect x="2023" y="60" width="4" height="2"/><rect x="2158" y="60" width="2" height="12"/><rect x="2158" y="60" width="4" height="2"/><rect x="2292" y="60" width="2" height="12"/><rect x="2292" y="60" width="4" height="2"/><rect x="2426" y="60" width="2" height="12"/><rect x="2426" y="60" width="4" height="2"/><rect x="2560" y="60" width="2" height="12"/><rect x="2560" y="60" width="4" height="2"/><rect x="75" y="70" width="2" height="2"/><rect x="209" y="70" width="2" height="2"/><rect x="343" y="70" width="2" height="2"/><rect x="477" y="70" width="2" height="2"/><rect x="613" y="70" width="2" height="2"/><rect x="746" y="70" width="2" height="2"/><rect x="880" y="70" width="2" height="2"/><rect x="1014" y="70" width="2" height="2"/><rect x="1150" y="70" width="2" height="2"/><rect x="1284" y="70" width="2" height="2"/><rect x="1417" y="70" width="2" height="2"/><rect x="1553" y="70" width="2" height="2"/><rect x="1687" y="70" width="2" height="2"/><rect x="1821" y="70" width="2" height="2"/><rect x="1955" y="70" width="2" height="2"/><rect x="2090" y="70" width="2" height="2"/><rect x="2225" y="70" width="2" height="2"/><rect x="2359" y="70" width="2" height="2"/><rect x="2495" y="70" width="2" height="2"/></g></svg><div class="rl" style="left:16px">1</div><div class="rl" style="left:150px">9</div><div class="rl" style="left:285px">17</div><div class="rl" style="left:420px">25</div><div class="rl" style="left:555px">33</div><div class="rl" style="left:689px">41</div><div class="rl" style="left:823px">49</div><div class="rl" style="left:958px">57</div><div class="rl" style="left:1092px">65</div><div class="rl" style="left:1227px">73</div><div class="rl" style="left:1360px">81</div><div class="rl" style="left:1495px">89</div><div class="rl" style="left:1630px">97</div><div class="rl" style="left:1764px">105</div><div class="rl" style="left:1898px">113</div><div class="rl" style="left:2033px">121</div><div class="rl" style="left:2168px">129</div><div class="rl" style="left:2302px">137</div><div class="rl" style="left:2436px">145</div><div class="rl" style="left:2570px">153</div><svg style="left:6px;top:110px" width="9" height="8"><path d="M0 0L8.5 0L0 8Z" fill="#5ac6e0"/></svg><svg style="left:947px;top:71px" width="72" height="24"><rect x="1" y="1" width="68" height="21" fill="#363636" stroke="#a6a6a6" stroke-width="2"/><path d="M2 2L20 11.5L2 21M68 2L50 11.5L68 21" fill="none" stroke="#a6a6a6" stroke-width="1.6"/></svg><div style="left:2624px;top:48px;width:58px;height:26px;background:#1e1e1e;border:1.5px solid #121212;border-radius:13px;color:#d2d2d2;font-size:19px;font-weight:bold;text-align:center;line-height:23px">Set</div><div style="left:2704px;top:48px;width:46px;height:26px;background:#1e1e1e;border:1.5px solid #111"><svg width="44" height="24"><path d="M15.5 16.5L27.5 6.5" stroke="#bdbdbd" stroke-width="2.5"/><circle cx="15" cy="17" r="3.2" fill="#bdbdbd"/><circle cx="28" cy="6" r="3.2" fill="#bdbdbd"/></svg></div><div style="left:2758px;top:48px;width:46px;height:26px;background:#1e1e1e;border:1.5px solid #111"><svg width="44" height="24"><path d="M18 12L18 9.5A4 4 0 0 1 26 9.5L26 12" fill="none" stroke="#bdbdbd" stroke-width="2.2"/><rect x="15" y="11.5" width="14" height="9" fill="#bdbdbd"/></svg></div><div style="left:2624px;top:84px;width:26px;height:26px;background:#1e1e1e;border:1.5px solid #121212;border-radius:50%"><svg width="24" height="24"><path d="M5 12L11 6.5L11 10.5L19 10.5L19 13.5L11 13.5L11 17.5Z" fill="#8c8c8c"/></svg></div><div style="left:2656px;top:84px;width:26px;height:26px;background:#1e1e1e;border:1.5px solid #121212;border-radius:50%"><svg width="24" height="24"><path d="M19 12L13 6.5L13 10.5L5 10.5L5 13.5L13 13.5L13 17.5Z" fill="#d0d0d0"/></svg></div><div style="left:2px;top:0;width:2730px;height:30px;background:#787878;border-radius:7px"></div><div style="left:6px;top:2px;width:2720px;height:24px;background:#363636;border-radius:4px;overflow:hidden"><div style="left:2px;top:0;width:2700px;height:270px;transform-origin:0 0;transform:scale(1,0.0889)"><div style="left:0.0px;top:0px;width:245.6px;height:10px;background:#d55c9e"></div><div style="left:245.6px;top:0px;width:35.1px;height:10px;background:#646464"></div><div style="left:280.6px;top:0px;width:245.6px;height:10px;background:#d55c9e"></div><div style="left:526.2px;top:0px;width:35.1px;height:10px;background:#646464"></div><div style="left:561.3px;top:0px;width:105.2px;height:10px;background:#d55c9e"></div><div style="left:666.5px;top:0px;width:35.1px;height:10px;background:#646464"></div><div style="left:701.6px;top:0px;width:561.3px;height:10px;background:#d55c9e"></div><div style="left:1403.2px;top:0px;width:245.6px;height:10px;background:#d55c9e"></div><div style="left:1683.8px;top:0px;width:982.2px;height:10px;background:#d55c9e"></div><div style="left:0.0px;top:10px;width:140.3px;height:10px;background:#646464"></div><div style="left:280.6px;top:10px;width:2385.4px;height:10px;background:#eb4bcf"></div><div style="left:0.0px;top:20px;width:666.5px;height:10px;background:#6fe7fb"></div><div style="left:701.6px;top:20px;width:561.3px;height:10px;background:#6fe7fb"></div><div style="left:1683.8px;top:20px;width:982.2px;height:10px;background:#6fe7fb"></div><div style="left:0.0px;top:30px;width:666.5px;height:10px;background:#6fe7fb"></div><div style="left:701.6px;top:30px;width:561.3px;height:10px;background:#6fe7fb"></div><div style="left:1683.8px;top:30px;width:982.2px;height:10px;background:#6fe7fb"></div><div style="left:0.0px;top:40px;width:140.3px;height:10px;background:#646464"></div><div style="left:140.3px;top:40px;width:421.0px;height:10px;background:#98a7f8"></div><div style="left:561.3px;top:40px;width:105.2px;height:10px;background:#646464"></div><div style="left:701.6px;top:40px;width:140.3px;height:10px;background:#646464"></div><div style="left:841.9px;top:40px;width:421.0px;height:10px;background:#98a7f8"></div><div style="left:1683.8px;top:40px;width:982.2px;height:10px;background:#98a7f8"></div><div style="left:0.0px;top:50px;width:666.5px;height:10px;background:#98a7f8"></div><div style="left:701.6px;top:50px;width:561.3px;height:10px;background:#98a7f8"></div><div style="left:1683.8px;top:50px;width:982.2px;height:10px;background:#98a7f8"></div><div style="left:0.0px;top:60px;width:666.5px;height:10px;background:#5f80dd"></div><div style="left:701.6px;top:60px;width:561.3px;height:10px;background:#5f80dd"></div><div style="left:1683.8px;top:60px;width:982.2px;height:10px;background:#5f80dd"></div><div style="left:0.0px;top:70px;width:666.5px;height:10px;background:#c870e0"></div><div style="left:701.6px;top:70px;width:561.3px;height:10px;background:#c870e0"></div><div style="left:1683.8px;top:70px;width:982.2px;height:10px;background:#c870e0"></div><div style="left:0.0px;top:80px;width:666.5px;height:10px;background:#d55c9e"></div><div style="left:701.6px;top:80px;width:561.3px;height:10px;background:#d55c9e"></div><div style="left:1683.8px;top:80px;width:982.2px;height:10px;background:#d55c9e"></div><div style="left:0.0px;top:90px;width:666.5px;height:10px;background:#4aa0e8"></div><div style="left:701.6px;top:90px;width:561.3px;height:10px;background:#4aa0e8"></div><div style="left:1403.2px;top:90px;width:140.3px;height:10px;background:#646464"></div><div style="left:1543.5px;top:90px;width:1122.6px;height:10px;background:#4aa0e8"></div><div style="left:0.0px;top:100px;width:666.5px;height:10px;background:#816cdc"></div><div style="left:701.6px;top:100px;width:561.3px;height:10px;background:#816cdc"></div><div style="left:1403.2px;top:100px;width:1262.9px;height:10px;background:#816cdc"></div><div style="left:0.0px;top:110px;width:666.5px;height:10px;background:#3a7cc0"></div><div style="left:701.6px;top:110px;width:561.3px;height:10px;background:#3a7cc0"></div><div style="left:1403.2px;top:110px;width:1262.9px;height:10px;background:#3a7cc0"></div><div style="left:0.0px;top:120px;width:561.3px;height:10px;background:#eb4bcf"></div><div style="left:701.6px;top:120px;width:561.3px;height:10px;background:#eb4bcf"></div><div style="left:1683.8px;top:120px;width:982.2px;height:10px;background:#eb4bcf"></div><div style="left:701.6px;top:130px;width:561.3px;height:10px;background:#c870e0"></div><div style="left:1683.8px;top:130px;width:982.2px;height:10px;background:#c870e0"></div><div style="left:0.0px;top:140px;width:666.5px;height:10px;background:#5f80dd"></div><div style="left:701.6px;top:140px;width:1964.5px;height:10px;background:#5f80dd"></div><div style="left:245.6px;top:150px;width:35.1px;height:10px;background:#b07cc4"></div><div style="left:561.3px;top:150px;width:2104.8px;height:10px;background:#b07cc4"></div><div style="left:0.0px;top:160px;width:2666.1px;height:10px;background:#d55c9e"></div><div style="left:982.2px;top:170px;width:701.6px;height:10px;background:#6fe7fb"></div><div style="left:1964.5px;top:170px;width:701.6px;height:10px;background:#6fe7fb"></div><div style="left:692.8px;top:180px;width:14.0px;height:10px;background:#f5f18c"></div><div style="left:1675.1px;top:180px;width:14.0px;height:10px;background:#f5f18c"></div><div style="left:666.5px;top:190px;width:280.6px;height:10px;background:#8ff7e2"></div><div style="left:1648.8px;top:190px;width:280.6px;height:10px;background:#8ff7e2"></div><div style="left:982.2px;top:200px;width:701.6px;height:10px;background:#816cdc"></div><div style="left:1964.5px;top:200px;width:280.6px;height:10px;background:#816cdc"></div><div style="left:561.3px;top:210px;width:140.3px;height:10px;background:#c99c42"></div><div style="left:1262.9px;top:210px;width:421.0px;height:10px;background:#c99c42"></div><div style="left:982.2px;top:220px;width:701.6px;height:10px;background:#3a7cc0"></div><div style="left:1824.2px;top:220px;width:701.6px;height:10px;background:#3a7cc0"></div><div style="left:1543.5px;top:230px;width:140.3px;height:10px;background:#b07cc4"></div><div style="left:2211.8px;top:240px;width:77.2px;height:10px;background:#d55c9e"></div><div style="left:1683.8px;top:250px;width:70.2px;height:10px;background:#c870e0"></div><div style="left:0.0px;top:260px;width:2698.5px;height:10px;background:#9ac6f9"></div><div style="left:0.0px;top:0;width:1.2px;height:170px;background:rgba(20,20,90,.5)"></div><div style="left:35.1px;top:0;width:1.2px;height:170px;background:rgba(20,20,90,.5)"></div><div style="left:70.2px;top:0;width:1.2px;height:170px;background:rgba(20,20,90,.5)"></div><div style="left:105.2px;top:0;width:1.2px;height:170px;background:rgba(20,20,90,.5)"></div><div style="left:140.3px;top:0;width:1.2px;height:170px;background:rgba(20,20,90,.5)"></div><div style="left:175.4px;top:0;width:1.2px;height:170px;background:rgba(20,20,90,.5)"></div><div style="left:210.5px;top:0;width:1.2px;height:170px;background:rgba(20,20,90,.5)"></div><div style="left:245.6px;top:0;width:1.2px;height:170px;background:rgba(20,20,90,.5)"></div><div style="left:280.6px;top:0;width:1.2px;height:170px;background:rgba(20,20,90,.5)"></div><div style="left:315.7px;top:0;width:1.2px;height:170px;background:rgba(20,20,90,.5)"></div><div style="left:350.8px;top:0;width:1.2px;height:170px;background:rgba(20,20,90,.5)"></div><div style="left:385.9px;top:0;width:1.2px;height:170px;background:rgba(20,20,90,.5)"></div><div style="left:421.0px;top:0;width:1.2px;height:170px;background:rgba(20,20,90,.5)"></div><div style="left:456.0px;top:0;width:1.2px;height:170px;background:rgba(20,20,90,.5)"></div><div style="left:491.1px;top:0;width:1.2px;height:170px;background:rgba(20,20,90,.5)"></div><div style="left:526.2px;top:0;width:1.2px;height:170px;background:rgba(20,20,90,.5)"></div><div style="left:561.3px;top:0;width:1.2px;height:170px;background:rgba(20,20,90,.5)"></div><div style="left:596.4px;top:0;width:1.2px;height:170px;background:rgba(20,20,90,.5)"></div><div style="left:631.4px;top:0;width:1.2px;height:170px;background:rgba(20,20,90,.5)"></div><div style="left:666.5px;top:0;width:1.2px;height:170px;background:rgba(20,20,90,.5)"></div><div style="left:701.6px;top:0;width:1.2px;height:170px;background:rgba(20,20,90,.5)"></div><div style="left:736.7px;top:0;width:1.2px;height:170px;background:rgba(20,20,90,.5)"></div><div style="left:771.8px;top:0;width:1.2px;height:170px;background:rgba(20,20,90,.5)"></div><div style="left:806.8px;top:0;width:1.2px;height:170px;background:rgba(20,20,90,.5)"></div><div style="left:841.9px;top:0;width:1.2px;height:170px;background:rgba(20,20,90,.5)"></div><div style="left:877.0px;top:0;width:1.2px;height:170px;background:rgba(20,20,90,.5)"></div><div style="left:912.1px;top:0;width:1.2px;height:170px;background:rgba(20,20,90,.5)"></div><div style="left:947.2px;top:0;width:1.2px;height:170px;background:rgba(20,20,90,.5)"></div><div style="left:982.2px;top:0;width:1.2px;height:170px;background:rgba(20,20,90,.5)"></div><div style="left:1017.3px;top:0;width:1.2px;height:170px;background:rgba(20,20,90,.5)"></div><div style="left:1052.4px;top:0;width:1.2px;height:170px;background:rgba(20,20,90,.5)"></div><div style="left:1087.5px;top:0;width:1.2px;height:170px;background:rgba(20,20,90,.5)"></div><div style="left:1122.6px;top:0;width:1.2px;height:170px;background:rgba(20,20,90,.5)"></div><div style="left:1157.6px;top:0;width:1.2px;height:170px;background:rgba(20,20,90,.5)"></div><div style="left:1192.7px;top:0;width:1.2px;height:170px;background:rgba(20,20,90,.5)"></div><div style="left:1227.8px;top:0;width:1.2px;height:170px;background:rgba(20,20,90,.5)"></div><div style="left:1262.9px;top:0;width:1.2px;height:170px;background:rgba(20,20,90,.5)"></div><div style="left:1298.0px;top:0;width:1.2px;height:170px;background:rgba(20,20,90,.5)"></div><div style="left:1333.0px;top:0;width:1.2px;height:170px;background:rgba(20,20,90,.5)"></div><div style="left:1368.1px;top:0;width:1.2px;height:170px;background:rgba(20,20,90,.5)"></div><div style="left:1403.2px;top:0;width:1.2px;height:170px;background:rgba(20,20,90,.5)"></div><div style="left:1438.3px;top:0;width:1.2px;height:170px;background:rgba(20,20,90,.5)"></div><div style="left:1473.4px;top:0;width:1.2px;height:170px;background:rgba(20,20,90,.5)"></div><div style="left:1508.4px;top:0;width:1.2px;height:170px;background:rgba(20,20,90,.5)"></div><div style="left:1543.5px;top:0;width:1.2px;height:170px;background:rgba(20,20,90,.5)"></div><div style="left:1578.6px;top:0;width:1.2px;height:170px;background:rgba(20,20,90,.5)"></div><div style="left:1613.7px;top:0;width:1.2px;height:170px;background:rgba(20,20,90,.5)"></div><div style="left:1648.8px;top:0;width:1.2px;height:170px;background:rgba(20,20,90,.5)"></div><div style="left:1683.8px;top:0;width:1.2px;height:170px;background:rgba(20,20,90,.5)"></div><div style="left:1718.9px;top:0;width:1.2px;height:170px;background:rgba(20,20,90,.5)"></div><div style="left:1754.0px;top:0;width:1.2px;height:170px;background:rgba(20,20,90,.5)"></div><div style="left:1789.1px;top:0;width:1.2px;height:170px;background:rgba(20,20,90,.5)"></div><div style="left:1824.2px;top:0;width:1.2px;height:170px;background:rgba(20,20,90,.5)"></div><div style="left:1859.2px;top:0;width:1.2px;height:170px;background:rgba(20,20,90,.5)"></div><div style="left:1894.3px;top:0;width:1.2px;height:170px;background:rgba(20,20,90,.5)"></div><div style="left:1929.4px;top:0;width:1.2px;height:170px;background:rgba(20,20,90,.5)"></div><div style="left:1964.5px;top:0;width:1.2px;height:170px;background:rgba(20,20,90,.5)"></div><div style="left:1999.6px;top:0;width:1.2px;height:170px;background:rgba(20,20,90,.5)"></div><div style="left:2034.6px;top:0;width:1.2px;height:170px;background:rgba(20,20,90,.5)"></div><div style="left:2069.7px;top:0;width:1.2px;height:170px;background:rgba(20,20,90,.5)"></div><div style="left:2104.8px;top:0;width:1.2px;height:170px;background:rgba(20,20,90,.5)"></div><div style="left:2139.9px;top:0;width:1.2px;height:170px;background:rgba(20,20,90,.5)"></div><div style="left:2175.0px;top:0;width:1.2px;height:170px;background:rgba(20,20,90,.5)"></div><div style="left:2210.0px;top:0;width:1.2px;height:170px;background:rgba(20,20,90,.5)"></div><div style="left:2245.1px;top:0;width:1.2px;height:170px;background:rgba(20,20,90,.5)"></div><div style="left:2280.2px;top:0;width:1.2px;height:170px;background:rgba(20,20,90,.5)"></div><div style="left:2315.3px;top:0;width:1.2px;height:170px;background:rgba(20,20,90,.5)"></div><div style="left:2350.4px;top:0;width:1.2px;height:170px;background:rgba(20,20,90,.5)"></div><div style="left:2385.4px;top:0;width:1.2px;height:170px;background:rgba(20,20,90,.5)"></div><div style="left:2420.5px;top:0;width:1.2px;height:170px;background:rgba(20,20,90,.5)"></div><div style="left:2455.6px;top:0;width:1.2px;height:170px;background:rgba(20,20,90,.5)"></div><div style="left:2490.7px;top:0;width:1.2px;height:170px;background:rgba(20,20,90,.5)"></div><div style="left:2525.8px;top:0;width:1.2px;height:170px;background:rgba(20,20,90,.5)"></div><div style="left:2560.8px;top:0;width:1.2px;height:170px;background:rgba(20,20,90,.5)"></div><div style="left:2595.9px;top:0;width:1.2px;height:170px;background:rgba(20,20,90,.5)"></div><div style="left:2631.0px;top:0;width:1.2px;height:170px;background:rgba(20,20,90,.5)"></div><div style="left:2666.1px;top:0;width:1.2px;height:170px;background:rgba(20,20,90,.5)"></div></div></div><div style="left:2732px;top:26px;width:118px;height:4px;background:#232323"></div><svg style="top:1590px" width="2614" height="44" shape-rendering="crispEdges"><g fill="#8a8a8a"><rect x="6" y="2" width="2" height="16"/><rect x="6" y="16" width="4" height="2"/><rect x="52" y="2" width="2" height="4"/><rect x="97" y="2" width="2" height="4"/><rect x="143" y="2" width="2" height="4"/><rect x="188" y="2" width="2" height="16"/><rect x="188" y="16" width="4" height="2"/><rect x="234" y="2" width="2" height="4"/><rect x="279" y="2" width="2" height="4"/><rect x="325" y="2" width="2" height="4"/><rect x="370" y="2" width="2" height="16"/><rect x="370" y="16" width="4" height="2"/><rect x="416" y="2" width="2" height="4"/><rect x="461" y="2" width="2" height="4"/><rect x="507" y="2" width="2" height="4"/><rect x="552" y="2" width="2" height="16"/><rect x="552" y="16" width="4" height="2"/><rect x="598" y="2" width="2" height="4"/><rect x="643" y="2" width="2" height="4"/><rect x="689" y="2" width="2" height="4"/><rect x="734" y="2" width="2" height="16"/><rect x="734" y="16" width="4" height="2"/><rect x="780" y="2" width="2" height="4"/><rect x="825" y="2" width="2" height="4"/><rect x="871" y="2" width="2" height="4"/><rect x="916" y="2" width="2" height="16"/><rect x="916" y="16" width="4" height="2"/><rect x="962" y="2" width="2" height="4"/><rect x="1007" y="2" width="2" height="4"/><rect x="1053" y="2" width="2" height="4"/><rect x="1098" y="2" width="2" height="16"/><rect x="1098" y="16" width="4" height="2"/><rect x="1144" y="2" width="2" height="4"/><rect x="1189" y="2" width="2" height="4"/><rect x="1235" y="2" width="2" height="4"/><rect x="1280" y="2" width="2" height="16"/><rect x="1280" y="16" width="4" height="2"/><rect x="1326" y="2" width="2" height="4"/><rect x="1371" y="2" width="2" height="4"/><rect x="1417" y="2" width="2" height="4"/><rect x="1462" y="2" width="2" height="16"/><rect x="1462" y="16" width="4" height="2"/><rect x="1508" y="2" width="2" height="4"/><rect x="1553" y="2" width="2" height="4"/><rect x="1599" y="2" width="2" height="4"/><rect x="1644" y="2" width="2" height="16"/><rect x="1644" y="16" width="4" height="2"/><rect x="1690" y="2" width="2" height="4"/><rect x="1735" y="2" width="2" height="4"/><rect x="1781" y="2" width="2" height="4"/><rect x="1826" y="2" width="2" height="16"/><rect x="1826" y="16" width="4" height="2"/><rect x="1872" y="2" width="2" height="4"/><rect x="1917" y="2" width="2" height="4"/><rect x="1963" y="2" width="2" height="4"/><rect x="2008" y="2" width="2" height="16"/><rect x="2008" y="16" width="4" height="2"/><rect x="2054" y="2" width="2" height="4"/><rect x="2099" y="2" width="2" height="4"/><rect x="2145" y="2" width="2" height="4"/><rect x="2190" y="2" width="2" height="16"/><rect x="2190" y="16" width="4" height="2"/><rect x="2236" y="2" width="2" height="4"/><rect x="2281" y="2" width="2" height="4"/><rect x="2327" y="2" width="2" height="4"/><rect x="2372" y="2" width="2" height="16"/><rect x="2372" y="16" width="4" height="2"/><rect x="2418" y="2" width="2" height="4"/><rect x="2463" y="2" width="2" height="4"/><rect x="2509" y="2" width="2" height="4"/><rect x="2554" y="2" width="2" height="16"/><rect x="2554" y="16" width="4" height="2"/><rect x="2600" y="2" width="2" height="4"/></g></svg><div class="tl" style="left:13px">0:00</div><div class="tl" style="left:195px">0:20</div><div class="tl" style="left:377px">0:40</div><div class="tl" style="left:559px">1:00</div><div class="tl" style="left:741px">1:20</div><div class="tl" style="left:923px">1:40</div><div class="tl" style="left:1105px">2:00</div><div class="tl" style="left:1287px">2:20</div><div class="tl" style="left:1469px">2:40</div><div class="tl" style="left:1651px">3:00</div><div class="tl" style="left:1833px">3:20</div><div class="tl" style="left:2015px">3:40</div><div class="tl" style="left:2197px">4:00</div><div class="tl" style="left:2379px">4:20</div><div class="tl" style="left:2561px">4:40</div><svg style="left:6px;top:1593px" width="9" height="10"><path d="M0 0L8 9L0 9Z" fill="#5ac6e0"/></svg><div style="left:2618px;top:1600px;width:30px;height:26px;background:#f5b064;border:2px solid #151515"><svg width="26" height="22"><g fill="#1a1a1a"><rect x="4" y="8" width="2" height="6"/><rect x="8.5" y="4" width="2" height="14"/><rect x="12" y="2" width="2" height="18"/><rect x="16" y="5" width="2" height="12"/><rect x="20" y="8" width="2" height="6"/></g></svg></div><div style="left:2654px;top:1600px;width:71px;height:26px;background:#1e1e1e;border:2px solid #151515"><div style="left:0;top:0;width:20px;height:22px;background:#2f6f82"></div><div style="left:7px;top:0;font-size:20px;color:#c8c8c8;line-height:23px">1.00x</div></div><div style="left:2736px;top:1600px;width:30px;height:26px;background:#1e1e1e;border:2px solid #151515;color:#c8c8c8;font-size:20px;text-align:center;line-height:23px">H</div><div style="left:2772px;top:1600px;width:30px;height:26px;background:#1e1e1e;border:2px solid #151515;color:#c8c8c8;font-size:20px;text-align:center;line-height:23px">W</div></body></html>
